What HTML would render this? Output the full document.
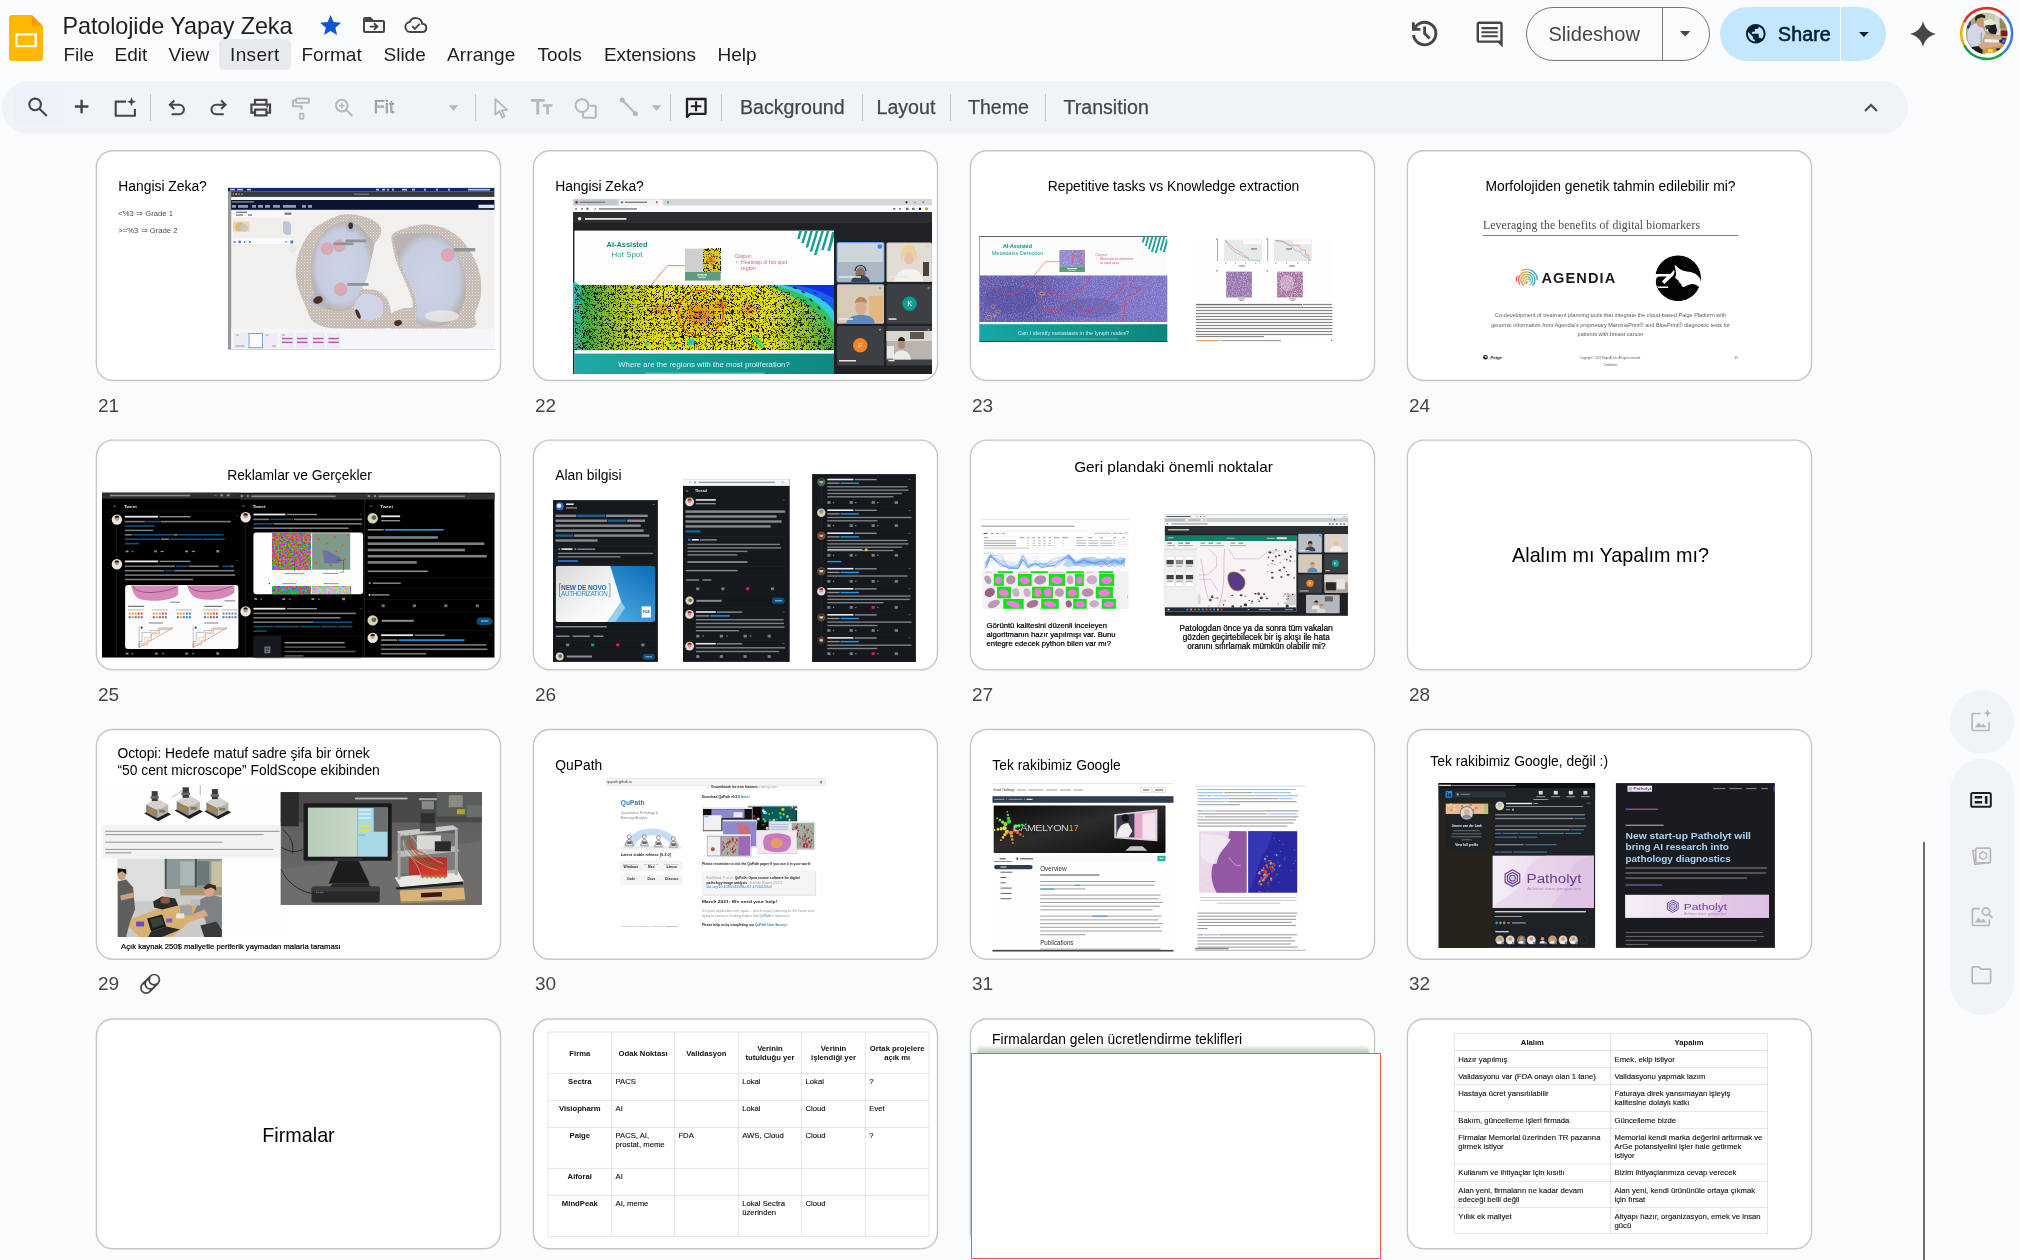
<!DOCTYPE html>
<html lang="en">
<head>
<meta charset="utf-8">
<title>Patolojide Yapay Zeka - Google Slides</title>
<style>
*{box-sizing:border-box;margin:0;padding:0}
html,body{width:2020px;height:1260px;overflow:hidden;}html{background:#f9fbfd}body{will-change:transform;font-family:"Liberation Sans",sans-serif;color:#1f1f1f}
.abs{position:absolute}
svg{display:block;overflow:visible}
/* header */
#logo{left:9px;top:14.800px;width:34px;height:46px}
#title{left:62.5px;top:10.7px;font-size:23.4px;line-height:30px;color:#1f1f1f;white-space:nowrap;letter-spacing:-0.1px}
.menu{top:43px;font-size:19px;line-height:24px;color:#1f1f1f;white-space:nowrap}
#ins-bg{left:219px;top:39px;width:72px;height:31px;border-radius:5px;background:#e7eaee}
#toolbar{left:2px;top:80.7px;width:1906px;height:53.2px;border-radius:27px;background:#f0f4f9}
.tsep{top:94.400px;width:1.200px;height:26.600px;background:#c4c7c5}
.ttxt{top:94.500px;font-size:19.600px;line-height:24px;color:#444746;white-space:nowrap;-webkit-text-stroke:.25px #444746}
.ico{position:absolute}
/* right header */
#ss{left:1526px;top:7px;width:184px;height:54px;border:1.3px solid #747775;border-radius:27px}
#share{left:1720px;top:7px;width:166px;height:54px;border-radius:27px;background:#c2e7ff}
/* cards */
.card{position:absolute;width:405px;height:232px}
.clip{position:absolute;left:0;top:0;width:405px;height:231px;background:#fff;border-radius:17px;overflow:hidden}
.num{position:absolute;font-size:19px;line-height:22px;color:#444746}
.t{position:absolute;white-space:nowrap;color:#000;font-size:13.85px;line-height:16px}
.tc{position:absolute;left:0;width:407px;text-align:center;white-space:nowrap;color:#000;font-size:13.85px;line-height:16px}
.th{text-align:center;font-weight:700;font-size:7.700px;line-height:9px;white-space:normal;color:#111}
.td{font-size:7.700px;line-height:9px;white-space:nowrap;color:#111;-webkit-text-stroke:.12px #111}
.side{position:absolute;left:1950px;width:64px;border-radius:32px;background:#f0f4f9}
</style>
</head>
<body>
<!-- HEADER -->
<div id="logo" class="abs"><svg width="34" height="46" viewBox="0 0 34 46"><path d="M3 0h19.800l11.200 11.200v31.800a3 3 0 0 1-3 3H3a3 3 0 0 1-3-3V3a3 3 0 0 1 3-3z" fill="#ffb903"/><path d="M22.800 0l11.200 11.200H22.800z" fill="#ff9a00"/><rect x="7.400" y="19.400" width="19.400" height="11.700" fill="none" stroke="#fff" stroke-width="2.200"/></svg></div>
<div id="title" class="abs">Patolojide Yapay Zeka</div>
<div id="ins-bg" class="abs"></div>
<div class="abs menu" style="left:63.5px">File</div>
<div class="abs menu" style="left:114.5px">Edit</div>
<div class="abs menu" style="left:168.5px">View</div>
<div class="abs menu" style="left:230px;letter-spacing:.35px">Insert</div>
<div class="abs menu" style="left:301.5px">Format</div>
<div class="abs menu" style="left:383.5px">Slide</div>
<div class="abs menu" style="left:447px;letter-spacing:.1px">Arrange</div>
<div class="abs menu" style="left:537.5px">Tools</div>
<div class="abs menu" style="left:604px;letter-spacing:-.1px">Extensions</div>
<div class="abs menu" style="left:717.5px">Help</div>

<svg class="ico" style="left:318.2px;top:12.5px" width="25.2" height="25.2" viewBox="0 0 24 24"><path d="M12 17.27L18.18 21l-1.64-7.03L22 9.24l-7.19-.61L12 2 9.19 8.63 2 9.24l5.46 4.73L5.82 21z" fill="#0b57d0"/></svg>
<svg class="ico" style="left:363px;top:17px" width="22" height="16" viewBox="0 0 22 16"><path d="M0 2a2 2 0 0 1 2-2h5.6l3 3H20a2 2 0 0 1 2 2v9a2 2 0 0 1-2 2H2a2 2 0 0 1-2-2zM2 5v9h18V5z" fill="#444746" fill-rule="evenodd"/><path d="M6.8 9.6h7M11 6.3l3.4 3.3-3.4 3.3" fill="none" stroke="#444746" stroke-width="1.9"/></svg>
<svg class="ico" style="left:404px;top:17px" width="24" height="16" viewBox="0 0 24 16"><path d="M6.2 15a5 5 0 0 1-.5-9.95 6.6 6.6 0 0 1 12.6 1.7 4.15 4.15 0 0 1 .4 8.25z" fill="none" stroke="#444746" stroke-width="2"/><path d="M8.2 9.2l2.6 2.6 4.9-5" fill="none" stroke="#444746" stroke-width="1.9"/></svg>
<div id="toolbar" class="abs"></div>
<div id="srch-bg" class="abs" style="left:13.700px;top:87.900px;width:51.200px;height:38.100px;border-radius:5px;background:#edf1fa"></div>

<svg class="ico" style="left:0;top:78px" width="720" height="60" viewBox="0 78 720 60">
<g fill="none" stroke="#444746" stroke-width="2.1">
<circle cx="35.1" cy="104.4" r="5.8"/><path d="M39.4 108.7l7.4 7.2"/>
<path d="M74.8 106.5h13.6M81.6 99.7v13.6" stroke-width="2.4"/>
<path d="M126 101.6h-10.3v14.2h19.2v-6.8" stroke-linejoin="round"/>
<path d="M170 104.8h9.2a4.6 4.6 0 0 1 0 9.4h-7.6" /><path d="M174.3 100.5l-4.4 4.3 4.4 4.3"/>
<path d="M225.4 104.8h-9.2a4.6 4.6 0 0 0 0 9.4h7.6" /><path d="M221.1 100.5l4.4 4.3-4.4 4.3"/>
<path d="M255 104.5v-4.6h11.4v4.6M255 112.6h-3.6v-8h18.6v8h-3.6" stroke-width="2.2"/><rect x="255" y="109.6" width="11.4" height="5.8" stroke-width="2.2"/>
</g>
<path d="M131.5 97.2l1.3 3.2 3.2 1.3-3.2 1.3-1.3 3.2-1.3-3.2-3.2-1.3 3.2-1.3z" fill="#444746"/>
<circle cx="267.2" cy="106.7" r="0.9" fill="#444746"/>
<g fill="none" stroke="#b5b8b7" stroke-width="2">
<rect x="296" y="98.4" width="13" height="4.4" rx="0.8"/><path d="M296 100.6h-3v5.6h8.6v3.4"/><rect x="299.9" y="113.6" width="3.6" height="5.2" rx="0.5" stroke-width="1.7"/>
<circle cx="341.8" cy="105.6" r="5.8"/><path d="M346.1 109.9l6.2 6.1"/><path d="M339 105.6h5.6M341.8 102.8v5.6" stroke-width="1.7"/>
<path d="M495.3 99.2v15.6l4.2-3.6 2.8 6.4 2.4-1.1-2.8-6.2 5.4-.5z" stroke-linejoin="round" stroke-width="1.8"/>
<circle cx="582" cy="105.6" r="6.4"/><path d="M589.5 105.8h5a1.3 1.3 0 0 1 1.3 1.3v9.4a1.3 1.3 0 0 1-1.3 1.3h-10.2a1.3 1.3 0 0 1-1.3-1.3v-3.6"/>
<path d="M622.4 100.2l13 13.4" stroke-width="2.2"/>
</g>
<g fill="#b5b8b7">
<path d="M448.6 105.2h9.6l-4.8 5.8z"/><path d="M651.8 105.2h9.6l-4.800 5.8z"/>
<circle cx="622.2" cy="99.9" r="2.5"/><circle cx="635.4" cy="113.7" r="2.5"/>
<path d="M531 99h13.600v2.700h-5.300v12.800h-3v-12.800h-5.300zM542.700 104.300h9.800v2.500h-3.600v7.700h-2.700v-7.700h-3.500z"/>
</g>
<g fill="none" stroke="#1f1f1f" stroke-width="2.3" stroke-linejoin="round"><path d="M687 99h18.500v14.800h-15.300l-3.200 3.200z"/><path d="M690.800 106.300h10.600M696.100 101.300v10" stroke-width="2.1"/></g>
</svg>
<div class="abs tsep" style="left:150px"></div>
<div class="abs tsep" style="left:475px"></div>
<div class="abs tsep" style="left:670px"></div>
<div class="abs tsep" style="left:721px"></div>
<div class="abs tsep" style="left:862px"></div>
<div class="abs tsep" style="left:950px"></div>
<div class="abs tsep" style="left:1045px"></div>
<div class="abs ttxt" style="left:373.5px;color:#b5b8b7;font-size:18.6px">Fit</div>
<div class="abs ttxt" style="left:740px">Background</div>
<div class="abs ttxt" style="left:876.5px">Layout</div>
<div class="abs ttxt" style="left:968px">Theme</div>
<div class="abs ttxt" style="left:1063.5px">Transition</div>
<svg class="ico" style="left:1861px;top:98px" width="20" height="20" viewBox="0 0 20 20"><path d="M4 13l6-6 6 6" fill="none" stroke="#444746" stroke-width="2.1"/></svg>


<svg class="ico" style="left:1405px;top:14px" width="110" height="40" viewBox="1405 14 110 40">
<g transform="translate(1407.700 16.600) scale(1.411)"><path d="M12 21q-3.450 0-6.010-2.290T3.050 13H5.100q.35 2.600 2.310 4.300Q9.380 19 12 19q2.930 0 4.960-2.040Q19 14.930 19 12t-2.040-4.960Q14.930 5 12 5q-1.720 0-3.230.8T6.250 8H9v2H3V4h2v2.350q1.270-1.600 3.110-2.480Q9.950 3 12 3q1.880 0 3.510.71 1.640.71 2.850 1.930 1.220 1.210 1.930 2.850Q21 10.130 21 12t-.71 3.510q-.71 1.640-1.930 2.850-1.210 1.220-2.850 1.930Q13.880 21 12 21Zm2.800-4.800L11 12.400V7h2v4.600l3.200 3.200Z" fill="#444746"/></g>
<path d="M1479.200 21.600h20.900a2.600 2.600 0 0 1 2.600 2.600v23.200l-4.700-4.600h-18.800a2.600 2.600 0 0 1-2.600-2.600v-16a2.600 2.600 0 0 1 2.600-2.600zM1479 24v16.400h21.300v-16.400z" fill="#444746" fill-rule="evenodd"/>
<path d="M1481.500 28.100h16.300M1481.500 32.200h16.300M1481.500 36.300h16.300" stroke="#444746" stroke-width="2.100"/>
</svg>
<div id="ss" class="abs"></div>
<div class="abs" style="left:1662px;top:8px;width:1.3px;height:52px;background:#747775"></div>
<div class="abs" style="left:1548.500px;top:22px;font-size:20px;line-height:24px;color:#444746;white-space:nowrap;letter-spacing:.02px">Slideshow</div>
<svg class="ico" style="left:1679.500px;top:30.700px" width="10.400" height="5.400" viewBox="0 0 10.400 5.400"><path d="M0 0h10.400l-5.200 5.400z" fill="#444746"/></svg>
<div id="share" class="abs"></div>
<div class="abs" style="left:1840px;top:7px;width:1.200px;height:54px;background:#f4faff"></div>
<svg class="ico" style="left:1745.500px;top:24.400px" width="19.600" height="19.600" viewBox="2 2 20 20"><path d="M12 2C6.480 2 2 6.480 2 12s4.480 10 10 10 10-4.480 10-10S17.520 2 12 2zm-1 17.930c-3.950-.49-7-3.850-7-7.930 0-.62.080-1.210.21-1.790L9 15v1c0 1.100.9 2 2 2v1.930zm6.900-2.540c-.26-.81-1-1.390-1.900-1.390h-1v-3c0-.55-.45-1-1-1H8v-2h2c.55 0 1-.45 1-1V7h2c1.100 0 2-.9 2-2v-.41c2.930 1.190 5 4.060 5 7.410 0 2.080-.8 3.970-2.100 5.390z" fill="#001d35"/></svg>
<div class="abs" style="left:1778px;top:21.500px;font-size:19.600px;font-weight:400;-webkit-text-stroke:.55px #001d35;line-height:24px;color:#001d35;white-space:nowrap;letter-spacing:.1px">Share</div>
<svg class="ico" style="left:1859.200px;top:31.900px" width="9.800" height="5" viewBox="0 0 9.800 5"><path d="M0 0h9.800l-4.900 5z" fill="#001d35"/></svg>
<svg class="ico" style="left:1910px;top:20.700px" width="26" height="26.200" viewBox="0 0 26 26"><path d="M13 0C14.400 6.800 19.200 11.600 26 13 19.200 14.400 14.400 19.200 13 26 11.600 19.200 6.800 14.400 0 13 6.800 11.600 11.600 6.800 13 0z" fill="#444746"/></svg>
<svg class="ico" style="left:1959px;top:6px" width="56" height="56" viewBox="0 0 56 56">
<defs><clipPath id="avc"><circle cx="27.700" cy="27.500" r="20.900"/></clipPath><filter id="avb"><feGaussianBlur stdDeviation=".35"/></filter></defs>
<g fill="none" stroke-width="2.500">
<path d="M4.930 16.250A25.400 25.400 0 0 1 44.760 8.680" stroke="#ea2a1a"/>
<path d="M44.760 8.680A25.400 25.400 0 0 1 44.760 46.320" stroke="#3a7af0"/>
<path d="M44.760 46.320A25.400 25.400 0 0 1 5.070 39.030" stroke="#18a040"/>
<path d="M5.070 39.030A25.400 25.400 0 0 1 4.930 16.250" stroke="#f8ac08"/>
</g>
<circle cx="27.700" cy="27.500" r="23.500" fill="#fff"/>
<g clip-path="url(#avc)"><g filter="url(#avb)"><rect x="6.16" y="6.16" width="43.68" height="43.68" fill="#a9a67e"/><rect x="24.44" y="6.67" width="25.39" height="13.20" fill="#c9c8a4"/><rect x="35.61" y="7.68" width="6.09" height="21.33" fill="#d8d8cc"/><rect x="40.69" y="9.20" width="8.63" height="13.20" fill="#8a8a5c"/><path d="M24.44 15.30L31.55 12.76L38.15 17.33L37.65 24.44L32.57 26.47L26.47 24.44z" fill="#e8e8e0"/><path d="M29.52 19.87L36.63 18.35L38.15 24.44L36.63 28.50L31.55 27.49L29.01 24.44z" fill="#1c1c20"/><path d="M25.96 19.87L30.54 18.85L31.55 22.41L26.98 23.43z" fill="#3a4030"/><rect x="41.71" y="24.44" width="7.62" height="5.59" fill="#8a1418"/><rect x="6.16" y="15.30" width="5.59" height="7.11" fill="#2a2c40"/><rect x="8.70" y="17.33" width="3.05" height="2.54" fill="#3a58a8"/><path d="M23.43 40.69L46.79 37.65L49.83 49.83L23.43 49.83z" fill="#c8993c"/><rect x="25.46" y="33.07" width="14.22" height="5.59" fill="#f0f0f6"/><path d="M39.68 31.04L47.30 32.57L46.28 38.15L40.69 36.63z" fill="#2c2c48"/><rect x="43.23" y="33.58" width="4.06" height="3.56" fill="#5868c0"/><ellipse cx="39.17" cy="43.23" rx="2.29" ry="1.27" fill="#2e2e3c"/><rect x="29.01" y="43.23" width="4.82" height="3.15" fill="#f6ee1c"/><rect x="25.96" y="46.79" width="13.20" height="3.05" fill="#e8e8e8"/><path d="M12.76 40.18L23.43 39.17L23.43 49.83L11.24 49.83z" fill="#1f1c1c"/><path d="M8.19 26.47L11.24 19.87L17.33 17.33L24.44 22.41L26.98 28.50L24.44 31.55L22.41 39.68L12.76 40.95L8.70 34.60z" fill="#d3d5e8"/><path d="M24.44 28.50L41.71 30.54L43.23 33.07L40.69 34.09L26.47 32.57z" fill="#d9aa8a"/><path d="M18.85 39.17L23.43 36.12L41.71 36.63L42.72 39.17L39.68 40.18L22.41 43.23z" fill="#d6a685"/><ellipse cx="21.14" cy="16.31" rx="3.56" ry="4.82" fill="#c9977a" transform="rotate(-12 21 16)"/><path d="M15.81 12.76L17.33 8.70L22.41 7.93L26.47 9.71L25.96 12.25L22.41 11.24L18.35 12.76L16.82 16.31z" fill="#2a231f"/><rect x="21.65" y="26.47" width="1.12" height="10.16" fill="#7a8078" opacity=".7"/></g></g>
</svg>

<!-- CARDS -->
<div class="card" id="c21" style="left:96px;top:150px"><div class="clip" style="clip-path:inset(0.0px 0 0.0px 0 round 16.5px)"><!--S21--><svg class="abs" style="left:0;top:0" width="405" height="231" viewBox="0 0 405 231">
<defs>
<radialGradient id="tis" cx="50%" cy="50%" r="50%"><stop offset="0" stop-color="#ccd3e6"/><stop offset=".8" stop-color="#c6cde0"/><stop offset="1" stop-color="#b9b3b4"/></radialGradient>
<pattern id="crypt" width="3" height="3" patternUnits="userSpaceOnUse"><rect width="3" height="3" fill="#d3cac4"/><circle cx="1.5" cy="1.5" r=".8" fill="#e9e3de"/><circle cx="1.5" cy="1.5" r="1.1" fill="none" stroke="#9a8272" stroke-width=".32"/></pattern>
<clipPath id="c21"><rect x="132" y="59.700" width="266.400" height="119"/></clipPath>
</defs>
<rect x="132" y="37.900" width="266.400" height="161.800" fill="#f1f0ee"/>
<rect x="132" y="37.900" width="266.400" height="3.600" fill="#0b2a6b"/>
<rect x="132" y="41.400" width="266.400" height="5.600" fill="#38383b"/>
<rect x="132" y="46.900" width="266.400" height="3.200" fill="#f4f4f4"/>
<rect x="132" y="50" width="266.400" height="9.800" fill="#0a1530"/>
<g fill="#8d97b8"><rect x="136" y="51.300" width="22" height="1.200"/><rect x="136" y="55" width="4" height="2.800"/><rect x="142" y="55" width="10" height="2.800"/><rect x="156" y="55" width="4" height="2.800"/><rect x="162" y="55" width="5" height="2.800"/><rect x="169" y="55" width="5" height="2.800"/><rect x="177" y="55" width="7" height="2.800"/><rect x="187" y="55" width="13" height="2.800"/><rect x="206" y="55" width="4" height="2.800"/><rect x="212" y="55" width="4" height="2.800"/></g>
<rect x="382.500" y="54.700" width="15.500" height="3.400" fill="#dfe3ee"/>
<g fill="#b9c3de"><rect x="280" y="38.800" width="3" height="1.700"/><rect x="286" y="38.800" width="3" height="1.700"/><rect x="291" y="38.800" width="2" height="1.700"/><rect x="296" y="38.800" width="2" height="1.700"/><rect x="306" y="38.800" width="5" height="1.700"/><rect x="316" y="38.800" width="3" height="1.700"/><rect x="328" y="38.800" width="2" height="1.700"/><rect x="340" y="38.800" width="2" height="1.700"/><rect x="352" y="38.800" width="2" height="1.700"/><rect x="372" y="38.800" width="22" height="1.700"/><rect x="134" y="38.800" width="5" height="1.600"/><rect x="141" y="38.800" width="6" height="1.600"/><rect x="151" y="38.800" width="4" height="1.600"/></g>
<circle cx="137.300" cy="44.200" r=".9" fill="#ee5b54"/><circle cx="140.200" cy="44.200" r=".9" fill="#f6be2f"/><circle cx="143" cy="44.200" r=".9" fill="#5ec343"/><circle cx="145.900" cy="44.200" r=".9" fill="#35a7f0"/>
<rect x="258" y="43.600" width="15" height="1.300" fill="#77777b"/>
<rect x="132" y="41.400" width="3.200" height="158.300" fill="#98989a"/>
<g clip-path="url(#c21)">
<path d="M243.6 65.2C251.9 62.8 260.1 64.7 266.6 66.2C273.2 67.7 279.7 71.2 282.7 74.2C285.7 77.2 285.4 80.9 284.7 84.2C284.0 87.5 280.3 89.5 278.7 94.2C277.0 98.9 276.0 106.6 274.7 112.3C273.3 117.9 272.0 124.0 270.6 128.3C269.3 132.7 265.0 136.3 266.6 138.3C268.3 140.3 276.7 138.7 280.7 140.3C284.7 142.0 288.4 145.0 290.7 148.4C293.0 151.7 294.2 155.5 294.7 160.4C295.2 165.2 302.7 174.4 293.7 177.4C284.7 180.4 253.1 179.3 240.6 178.4C228.0 177.6 223.5 175.8 218.5 172.4C213.5 169.1 213.5 165.4 210.5 158.4C207.5 151.4 201.8 139.3 200.5 130.3C199.1 121.3 199.8 112.6 202.5 104.3C205.2 95.9 209.7 86.7 216.5 80.2C223.4 73.7 235.2 67.5 243.6 65.2z" fill="url(#crypt)"/>
<path d="M243.6 72.2C249.3 70.6 256.1 72.6 260.6 74.6C265.1 76.6 267.8 80.9 270.6 84.2C273.5 87.5 277.1 89.5 277.7 94.2C278.3 98.9 275.5 106.6 274.3 112.3C273.0 117.9 271.9 123.6 270.2 128.3C268.6 133.0 267.2 135.3 264.6 140.3C262.0 145.3 259.3 155.0 254.6 158.4C249.9 161.7 241.9 161.1 236.6 160.4C231.2 159.7 225.7 157.7 222.5 154.4C219.4 151.0 218.9 146.0 217.5 140.3C216.2 134.7 214.5 127.0 214.5 120.3C214.5 113.6 215.5 106.3 217.5 100.2C219.5 94.2 222.2 88.9 226.5 84.2C230.9 79.5 237.9 73.8 243.6 72.2z" fill="url(#tis)"/>
<path d="M266.6 144.3C270.3 143.0 277.3 144.7 280.7 146.4C284.0 148.0 286.0 151.0 286.7 154.4C287.4 157.7 287.4 163.7 284.7 166.4C282.0 169.1 274.7 170.7 270.6 170.4C266.6 170.1 262.6 167.1 260.6 164.4C258.6 161.7 257.6 157.7 258.6 154.4C259.6 151.0 263.0 145.7 266.6 144.3z" fill="#cfd5e6"/>
<path d="M296.7 84.2C299.4 81.0 307.1 78.8 312.8 77.2C318.4 75.6 324.1 74.1 330.8 74.6C337.5 75.1 346.2 76.6 352.8 80.2C359.5 83.8 365.9 89.5 370.9 96.2C375.9 102.9 380.6 112.3 382.9 120.3C385.3 128.3 385.6 137.0 384.9 144.3C384.3 151.7 380.9 158.7 378.9 164.4C376.9 170.1 387.1 176.1 372.9 178.4C358.7 180.8 306.7 180.8 293.7 178.4C280.7 176.1 292.5 167.7 294.7 164.4C296.9 161.1 303.1 159.7 306.7 158.4C310.4 157.0 315.8 159.4 316.8 156.4C317.8 153.4 315.4 147.7 312.8 140.3C310.1 133.0 303.4 119.6 300.7 112.3C298.0 104.9 297.4 100.9 296.7 96.2C296.0 91.6 294.0 87.4 296.7 84.2z" fill="url(#crypt)"/>
<path d="M298.7 86.2C301.7 84.0 310.4 83.7 316.8 83.2C323.1 82.7 330.8 81.9 336.8 83.2C342.8 84.5 348.3 87.0 352.8 91.2C357.4 95.4 361.0 101.7 363.9 108.3C366.7 114.8 369.2 123.0 369.9 130.3C370.6 137.7 370.1 145.7 367.9 152.4C365.7 159.0 362.0 166.4 356.9 170.4C351.7 174.4 342.8 176.1 336.8 176.4C330.8 176.8 323.4 175.8 320.8 172.4C318.1 169.1 321.6 162.1 320.8 156.4C319.9 150.7 318.6 145.7 315.8 138.3C312.9 131.0 306.5 119.3 303.7 112.3C301.0 105.3 300.0 100.6 299.1 96.2C298.3 91.9 295.8 88.4 298.7 86.2z" fill="url(#tis)"/>
<ellipse cx="346" cy="166" rx="17" ry="6" fill="#e9e8e3" opacity=".85"/>
<g fill="#4a2f22"><ellipse cx="254.700" cy="75.700" rx="2.200" ry="3.300"/><ellipse cx="222" cy="150" rx="5" ry="3.800" transform="rotate(-20 222 150)"/><ellipse cx="302" cy="173" rx="4" ry="2.800" transform="rotate(-15 302 173)"/><ellipse cx="262" cy="164" rx="1.800" ry="5" transform="rotate(-25 262 164)"/></g>
<g fill="#a9b4d0" opacity=".6"><ellipse cx="254.700" cy="76" rx="5" ry="6.500"/><ellipse cx="222" cy="150" rx="8" ry="6.500"/></g>
<g fill="#4a2f22"><ellipse cx="254.700" cy="75.700" rx="2.200" ry="3.300"/><ellipse cx="222" cy="150" rx="4.600" ry="3.400" transform="rotate(-20 222 150)"/></g>
<g fill="#e39aa3" fill-opacity=".72" stroke="#d78891" stroke-width=".3"><circle cx="231.100" cy="98.600" r="6"/><circle cx="243.300" cy="95.700" r="6"/><circle cx="351.600" cy="105" r="6.500"/><circle cx="244.700" cy="139.300" r="6.300"/></g>
<g fill="#8f9297"><rect x="249.500" y="89.500" width="20.500" height="2.800"/><rect x="237.500" y="92.500" width="20" height="2.600"/><rect x="357.700" y="98" width="21.500" height="3.400"/><rect x="251.500" y="133" width="21" height="2.800"/></g>
</g>
<rect x="135.800" y="60.700" width="62" height="33.700" fill="#f8f8f8" stroke="#e4e4e6" stroke-width=".4"/>
<rect x="137" y="67.500" width="59.600" height="20.500" fill="#f0efec"/>
<rect x="136.200" y="89" width="61.200" height="5" fill="#fbfbfd"/>
<rect x="137" y="71.500" width="16.500" height="10" fill="#ebd7a9"/><ellipse cx="144" cy="77" rx="5" ry="4.600" fill="#d9b26a" opacity=".8"/><ellipse cx="148" cy="78" rx="4" ry="4" fill="#c9c6cf" opacity=".8"/>
<path d="M187 72c2-2 6-1 8 2v10c-2 2-6 1-8-2z" fill="#bfc4d6"/>
<g fill="#7d8087"><rect x="140" y="61.600" width="11" height="1.400"/><rect x="140" y="64.300" width="7" height="1.400"/><rect x="152" y="64.300" width="4" height="1.400"/><rect x="188.500" y="62.500" width="7" height="2.400"/></g>
<g fill="#3f76d8"><circle cx="138.800" cy="91.900" r="1"/><circle cx="143.700" cy="91.900" r="1.300"/><circle cx="148.800" cy="91.900" r=".9"/><circle cx="153.900" cy="91.900" r="1"/><rect x="194.500" y="90.500" width="2.600" height="3" /><rect x="189" y="91" width="2.400" height="1.600" fill="#9db9ee"/></g>
<circle cx="196.500" cy="98.500" r="4.300" fill="#e9e8e6"/>
<rect x="135.200" y="178.600" width="263.200" height="21.100" fill="#f5f6fa"/>
<rect x="132" y="199.200" width="266.400" height=".8" fill="#c9ccd6"/>
<g fill="#eeeef2" stroke="#e2e2e8" stroke-width=".3"><rect x="138.400" y="183.600" width="12.600" height="14.200"/><rect x="168.400" y="183.600" width="12.600" height="14.200"/><rect x="185" y="183.600" width="12.600" height="14.200"/><rect x="200" y="183.600" width="12.600" height="14.200" fill="#f1e8f1"/><rect x="216" y="183.600" width="12.600" height="14.200"/><rect x="231.400" y="183.600" width="12.600" height="14.200"/></g>
<rect x="153" y="183.600" width="13.400" height="14.200" fill="#fbfbff" stroke="#3f76d8" stroke-width=".7"/>
<g fill="#b65bb6"><rect x="186" y="187.800" width="10.500" height="1.500"/><rect x="186" y="191.600" width="10.500" height="1.500"/><rect x="201" y="187.800" width="10.500" height="1.500"/><rect x="201" y="191.600" width="10.500" height="1.500"/><rect x="217" y="187.800" width="10.500" height="1.500"/><rect x="217" y="191.600" width="10.500" height="1.500"/><rect x="232.400" y="187.800" width="10.500" height="1.500"/><rect x="232.400" y="191.600" width="10.500" height="1.500"/></g>
<g fill="#9ea2ad"><rect x="139.500" y="195.500" width="9" height="1.100"/><rect x="176" y="195.500" width="4" height="1.100"/><rect x="140" y="184.600" width="3" height=".9"/><rect x="169.500" y="184.600" width="3" height=".9"/><rect x="186" y="184.600" width="3" height=".9"/></g>
</svg>
<div class="t" style="left:22.300px;top:27.800px">Hangisi Zeka?</div>
<div class="t" style="left:22.300px;top:59px;font-size:7.700px;line-height:10px;color:#4a4a4a">&lt;%3 ⇒ Grade 1</div>
<div class="t" style="left:22.300px;top:75.900px;font-size:7.700px;line-height:10px;color:#4a4a4a">&gt;=%3 ⇒ Grade 2</div>
<!--/S21--></div><svg class="abs" style="left:-2px;top:-2px" width="409" height="236" viewBox="-2 -2 409 236"><rect x=".4" y="0.7" width="404.100" height="229.800" rx="16.500" fill="none" stroke="#c4c7c5" stroke-width="1.400"/></svg></div>
<div class="num" style="left:98px;top:395px">21</div>
<div class="card" id="c22" style="left:533px;top:150px"><div class="clip" style="clip-path:inset(0.0px 0 0.0px 0 round 16.5px)"><!--S22--><svg class="abs" style="left:0;top:0" width="405" height="231" viewBox="0 0 405 231">
<defs>
<linearGradient id="hm" x1="0" x2="1" y1="0" y2="0"><stop offset="0" stop-color="#2fb8a0"/><stop offset=".05" stop-color="#3fae3c"/><stop offset=".16" stop-color="#a4c425"/><stop offset=".3" stop-color="#e4dc14"/><stop offset=".75" stop-color="#e6de14"/><stop offset=".88" stop-color="#9cc820"/><stop offset="1" stop-color="#3fae3c"/></linearGradient>
<radialGradient id="hot" cx="50%" cy="50%" r="50%"><stop offset="0" stop-color="#d9541a" stop-opacity=".85"/><stop offset=".6" stop-color="#e8a018" stop-opacity=".6"/><stop offset="1" stop-color="#e8d018" stop-opacity="0"/></radialGradient>
<pattern id="cells" width="3.200" height="3.200" patternUnits="userSpaceOnUse"><circle cx="1.600" cy="1.600" r="1.100" fill="none" stroke="#161a08" stroke-width=".55"/></pattern>
<filter id="spk" x="0" y="0" width="100%" height="100%" color-interpolation-filters="sRGB"><feTurbulence type="turbulence" baseFrequency=".42" numOctaves="2" seed="7" result="n"/><feColorMatrix in="n" type="matrix" values="0 0 0 0 .08  0 0 0 0 .09  0 0 0 0 .03  -9 0 0 0 1.800"/></filter>
<linearGradient id="teal" x1="0" x2="1"><stop offset="0" stop-color="#1eaaa6"/><stop offset="1" stop-color="#0c8a80"/></linearGradient>
<clipPath id="c22"><rect x="41.400" y="135" width="259.600" height="65.200"/></clipPath>
<clipPath id="c22m"><path d="M41.400 135h200l32 16 16 18 12 24v7h-259.600z"/></clipPath><clipPath id="c22b"><rect x="40" y="48.700" width="359" height="175.300"/></clipPath>
</defs>
<g clip-path="url(#c22b)">
<rect x="40" y="48.700" width="359" height="7" fill="#d3d6dc"/>
<rect x="41" y="49.400" width="43" height="6.300" rx="1" fill="#c2c6ce"/><rect x="86" y="49.400" width="44" height="6.300" rx="1" fill="#f1f3f4"/>
<circle cx="43.600" cy="52.300" r="1.300" fill="#8a1e5a"/><circle cx="89" cy="52.300" r="1.200" fill="#35a853"/><circle cx="123.800" cy="52.300" r="1" fill="#e5322d"/>
<g fill="#7d8087"><rect x="47" y="51.600" width="25" height="1.400"/><rect x="92" y="51.600" width="22" height="1.400"/><rect x="134" y="51.300" width="2" height="2"/><circle cx="373.500" cy="52.300" r="1.100" fill="#222"/><rect x="381" y="52" width="2" height=".8"/><rect x="389.500" y="51.300" width="1.600" height="1.600"/></g>
<rect x="40" y="55.700" width="359" height="6.400" fill="#fbfbfc"/>
<g fill="#6e7278"><rect x="42" y="58.200" width="2" height="1.300"/><rect x="48" y="58.200" width="2" height="1.300"/><circle cx="54.500" cy="58.800" r="1.200"/><rect x="61.500" y="58.200" width="1.300" height="1.500"/><rect x="66" y="58.300" width="38" height="1.300"/><rect x="360" y="58.200" width="2.500" height="1.400"/><rect x="366" y="58.200" width="2" height="1.400"/><rect x="373" y="57.800" width="2.600" height="2.200"/><rect x="379" y="57.800" width="2.600" height="2.200"/><rect x="386" y="57.800" width="2" height="2.200" fill="#111"/><circle cx="393.500" cy="58.800" r="1.600" fill="#c89a3a"/></g>
<rect x="40" y="62.100" width="359" height="162" fill="#202124"/>
<rect x="40" y="62.100" width="359" height="11" fill="#2b2d30"/>
<circle cx="46.600" cy="68.800" r="1.800" fill="#e8e8e8"/><rect x="52" y="68" width="41.500" height="1.800" fill="#e4e4e4"/>
<rect x="41.400" y="80.600" width="259.600" height="143.400" fill="#fdfdfd"/>
<g fill="#1aa094"><path d="M266.500 80.600h2.600l-2.400 8.500h-2.600zM272 80.600h2.600l-3.800 12.500h-2.600zM277.500 80.600h2.600l-5 17h-2.600zM283 80.600h2.600l-6.400 21h-2.600zM288.500 80.600h2.600l-7.600 24.500h-2.600zM294 80.600h2.600l-5.800 19.500h-2.600zM299 82h2v5.600l-4 13.500h-2.600z"/></g>
<text x="94" y="97.400" font-family="Liberation Sans" font-weight="700" font-size="7.300" fill="#10867e" text-anchor="middle" textLength="40.9" lengthAdjust="spacingAndGlyphs">AI-Assisted</text>
<text x="94" y="106.800" font-family="Liberation Sans" font-size="7.600" fill="#25a096" text-anchor="middle" textLength="30.9" lengthAdjust="spacingAndGlyphs">Hot Spot</text>
<rect x="152" y="98.600" width="18" height="23.500" fill="#cfcfcf"/><rect x="170" y="98.600" width="17.600" height="23.500" fill="#d8c81e"/><rect x="170" y="98.600" width="17.600" height="23.500" filter="url(#spk)"/><circle cx="178" cy="110" r="6" fill="url(#hot)"/>
<rect x="152" y="122" width="35.600" height="8.600" fill="#5f9b7c"/><rect x="164" y="124.300" width="10" height="1.200" fill="#dfeee6"/><rect x="165" y="126.700" width="8" height="1" fill="#dfeee6"/>
<path d="M152 115.600h-17.500l-19.500 23" fill="none" stroke="#f0644c" stroke-width=".8"/>
<text x="202" y="107.600" font-family="Liberation Sans" font-size="4.800" fill="#d4608a" textLength="16.8" lengthAdjust="spacingAndGlyphs">Output:</text>
<text x="208" y="113.600" font-family="Liberation Sans" font-size="4.800" fill="#d4608a" textLength="46.1" lengthAdjust="spacingAndGlyphs">Heatmap of hot spot</text>
<text x="208" y="119.600" font-family="Liberation Sans" font-size="4.800" fill="#d4608a" textLength="14.8" lengthAdjust="spacingAndGlyphs">region</text>
<circle cx="203.700" cy="111.900" r=".6" fill="#d4608a"/>
<g clip-path="url(#c22)">
<rect x="41.400" y="135" width="259.600" height="65.200" fill="url(#hm)"/>
<ellipse cx="42" cy="146" rx="6" ry="14" fill="#2cc4c0" opacity=".8"/>
<path d="M232 135h69v50c-6-12-14-20-24-28-14-10-30-16-45-22z" fill="#35c060"/>
<path d="M240 135h61v38c-6-10-12-16-20-22-12-8-26-12-41-16z" fill="#2ed0e0"/>
<path d="M250 135h51v26c-8-12-26-20-51-26z" fill="#1a5cf0"/>
<path d="M262 135h39v14c-8-6-22-11-39-14z" fill="#1030e0"/>
<ellipse cx="167" cy="165" rx="26" ry="20" fill="url(#hot)"/><ellipse cx="215" cy="160" rx="14" ry="10" fill="url(#hot)" opacity=".7"/><ellipse cx="128" cy="160" rx="16" ry="10" fill="url(#hot)" opacity=".6"/><ellipse cx="188" cy="155" rx="10" ry="8" fill="url(#hot)"/>
<g clip-path="url(#c22m)"><rect x="41.400" y="135" width="259.600" height="65.200" filter="url(#spk)"/></g>
<g fill="#2ee06a"><circle cx="158" cy="192" r="3.600"/><circle cx="114" cy="194" r="2"/><circle cx="139" cy="195" r="1.700"/><circle cx="286" cy="171" r="1.800"/><path d="M220 186c6 2 10 6 12 12h-5c-2-4-5-8-9-10z" opacity=".8"/></g>
<circle cx="158" cy="192" r="2.200" fill="#29b8f0"/>
<g fill="#10120a"><ellipse cx="270" cy="142" rx="2" ry=".8" transform="rotate(30 270 142)"/><ellipse cx="278" cy="150" rx="2" ry=".8" transform="rotate(40 278 150)"/><ellipse cx="286" cy="158" rx="2" ry=".8" transform="rotate(50 286 158)"/><ellipse cx="292" cy="168" rx="2" ry=".8" transform="rotate(60 292 168)"/><ellipse cx="262" cy="138" rx="2" ry=".8" transform="rotate(20 262 138)"/><ellipse cx="290" cy="150" rx="1.600" ry=".7" transform="rotate(40 290 150)"/><ellipse cx="296" cy="180" rx="2" ry=".8" transform="rotate(70 296 180)"/><ellipse cx="282" cy="143" rx="1.600" ry=".7" transform="rotate(30 282 143)"/></g>
<circle cx="167.500" cy="163" r="22.800" fill="none" stroke="#f01a10" stroke-width=".9"/>
</g>
<rect x="41.400" y="203.600" width="259.600" height="20.600" fill="url(#teal)"/>
<text x="171" y="217.400" font-family="Liberation Sans" font-size="7.350" fill="#d8f2ef" text-anchor="middle" textLength="171.4" lengthAdjust="spacingAndGlyphs">Where are the regions with the most proliferation?</text>
<rect x="112" y="222.600" width="120" height="1.400" fill="#5cbcb6"/>
<g>
<rect x="304" y="92.500" width="47" height="39.500" rx="1.500" fill="#b9c3cc"/><rect x="353.500" y="92.500" width="45.500" height="39.500" rx="1.500" fill="#d8cfc6"/>
<rect x="304" y="134.300" width="47" height="39.500" rx="1.500" fill="#c9c2b4"/><rect x="353.500" y="134.300" width="45.500" height="39.500" rx="1.500" fill="#3c4043"/>
<rect x="304" y="176" width="47" height="39.500" rx="1.500" fill="#3c4043"/><rect x="353.500" y="176" width="45.500" height="39.500" rx="1.500" fill="#3c4043"/>
<rect x="304" y="92.500" width="47" height="39.500" rx="1.500" fill="none" stroke="#6ea0f0" stroke-width=".9"/>
<rect x="305" y="93.500" width="45" height="20" fill="#cfd6da"/><rect x="305" y="112" width="45" height="19" fill="#a9b8c4"/>
<ellipse cx="327.500" cy="124" rx="5" ry="6.500" fill="#8c6e5c"/><path d="M318 132c1-5 5-7 9.500-7s8.500 2 9.500 7z" fill="#3a4456"/><path d="M322 121a5.500 5.500 0 0 1 11 0" fill="none" stroke="#222" stroke-width="1.200"/>
<circle cx="346.800" cy="96.500" r="2.300" fill="#3b82f6"/>
<rect x="354.500" y="93.500" width="43.500" height="37.500" fill="#e3dcd4"/><ellipse cx="376" cy="108" rx="5" ry="6.500" fill="#e6c3a8"/><path d="M369 112c-3-10 1-17 7-17s10 7 7 18c-1-8-3-11-7-11s-6 3-7 10z" fill="#e9d39a"/><path d="M362 131c1-9 6-12 14-12s13 3 14 12z" fill="#f4f1ee"/><rect x="390" y="112" width="6" height="14" fill="#4a4038"/>
<rect x="305" y="135.300" width="45" height="37.500" fill="#d6cbb8"/><rect x="336" y="146" width="14" height="26" fill="#e0b880"/><ellipse cx="328" cy="158" rx="5.500" ry="7" fill="#d9ac90"/><path d="M322 154c0-5 3-7 6-7s6 2 6 7c-2-3-10-3-12 0z" fill="#b98a50"/><path d="M313 174c1-7 7-9 15-9s13 2 14 9z" fill="#5f88c0"/>
<circle cx="376.600" cy="153.600" r="7.200" fill="#0f9d8c"/><text x="376.600" y="156.300" font-family="Liberation Sans" font-size="7.400" fill="#fff" text-anchor="middle">K</text>
<circle cx="327.200" cy="195.300" r="7.200" fill="#f5821f"/><text x="327.200" y="198" font-family="Liberation Sans" font-size="7.400" fill="#fff" text-anchor="middle">F</text>
<rect x="353.500" y="181" width="45.500" height="28.500" fill="#b9b5ae"/><rect x="353.500" y="181" width="45.500" height="10" fill="#d9d6d0"/><rect x="377" y="182" width="14" height="7" fill="#5c564c"/><ellipse cx="368.500" cy="194.500" rx="3.500" ry="4.500" fill="#b08a70"/><path d="M365 191c0-3 2-4 3.500-4s3.500 1 3.500 4z" fill="#1c1a18"/><path d="M360 209.500c1-7 4-9 8.500-9s8.500 2 9.500 9z" fill="#eceae6"/><rect x="354" y="196" width="7" height="12" fill="#e9e9ea"/>
<g fill="#e8e8e8"><rect x="306" y="126.200" width="22" height="1.500"/><rect x="355.500" y="126.200" width="20" height="1.500"/><rect x="306" y="168.300" width="14" height="1.500"/><rect x="355.500" y="168.300" width="8" height="1.500"/><rect x="306" y="210" width="17" height="1.500"/><rect x="355.500" y="210" width="6" height="1.300"/></g>
<g fill="#9aa0a6"><circle cx="347" cy="138" r="1.200"/><circle cx="395.500" cy="138" r="1"/><circle cx="347" cy="179.700" r="1"/><circle cx="395.500" cy="179.700" r="1"/><circle cx="395.500" cy="96.300" r="1.300" fill="#d0d0d0"/></g>
</g>
</g>
</svg>
<div class="t" style="left:22.300px;top:27.800px">Hangisi Zeka?</div>
<!--/S22--></div><svg class="abs" style="left:-2px;top:-2px" width="409" height="236" viewBox="-2 -2 409 236"><rect x=".4" y="0.7" width="404.100" height="229.800" rx="16.500" fill="none" stroke="#c4c7c5" stroke-width="1.400"/></svg></div>
<div class="num" style="left:535px;top:395px">22</div>
<div class="card" id="c23" style="left:970px;top:150px"><div class="clip" style="clip-path:inset(0.0px 0 0.0px 0 round 16.5px)"><!--S23--><svg class="abs" style="left:0;top:0" width="405" height="231" viewBox="0 0 405 231">
<defs>
<filter id="pnoise" x="0" y="0" width="100%" height="100%" color-interpolation-filters="sRGB"><feTurbulence type="fractalNoise" baseFrequency=".9" numOctaves="2" seed="3" result="n"/><feColorMatrix in="n" type="matrix" values="0 0 0 0 .82  0 0 0 0 .8  0 0 0 0 .95  3 0 0 0 -1.300"/></filter>
<filter id="hnoise" x="0" y="0" width="100%" height="100%" color-interpolation-filters="sRGB"><feTurbulence type="fractalNoise" baseFrequency=".8" numOctaves="2" seed="5" result="n"/><feColorMatrix in="n" type="matrix" values="0 0 0 0 .93  0 0 0 0 .86  0 0 0 0 .93  4 0 0 0 -1.700"/></filter>
<linearGradient id="teal3" x1="0" x2="1"><stop offset="0" stop-color="#16a8a6"/><stop offset="1" stop-color="#0b857b"/></linearGradient>
<linearGradient id="pur" x1="0" x2="1"><stop offset="0" stop-color="#6159ae"/><stop offset=".3" stop-color="#5b55a8"/><stop offset=".55" stop-color="#756cc0"/><stop offset="1" stop-color="#7d74c8"/></linearGradient>
</defs>
<rect x="9.200" y="86.200" width="188.100" height="105.700" fill="#fbfbfb"/>
<rect x="9.200" y="86.200" width="188.100" height=".7" fill="#222"/>
<rect x="9.200" y="86.200" width=".5" height="105.700" fill="#555"/>
<g fill="#1aa094"><path d="M173.500 86.600h1.900l-1.700 6h-1.900zM177.500 86.600h1.900l-2.700 9.500h-1.900zM181.500 86.600h1.900l-3.600 12.500h-1.900zM185.500 86.600h1.900l-4.500 15.500h-1.900zM189.500 86.600h1.900l-4.700 16.500h-1.900zM193.500 86.600h1.900l-4 14h-1.900zM196.300 89h1v4l-2.500 9h-1.900z"/></g>
<text x="47.500" y="98.200" font-family="Liberation Sans" font-weight="700" font-size="5.200" fill="#10867e" text-anchor="middle" textLength="29.1" lengthAdjust="spacingAndGlyphs">AI-Assisted</text>
<text x="47.500" y="104.700" font-family="Liberation Sans" font-size="5.400" fill="#25a096" text-anchor="middle" textLength="51.7" lengthAdjust="spacingAndGlyphs">Metastasis Detection</text>
<rect x="89.400" y="100" width="25.600" height="16.500" fill="#8f86c9"/><rect x="89.400" y="100" width="25.600" height="16.500" filter="url(#pnoise)" opacity=".6"/>
<rect x="89.400" y="116.400" width="25.600" height="5.600" fill="#5f9b7c"/><rect x="97" y="118" width="10" height=".9" fill="#dfeee6"/><rect x="98" y="119.800" width="8" height=".7" fill="#dfeee6"/>
<g fill="none" stroke="#e8474c" stroke-width=".6"><ellipse cx="107.500" cy="104.300" rx="4.200" ry="2.200"/><ellipse cx="111" cy="111.500" rx="1.600" ry="2.400"/><path d="M102.500 106v8"/></g>
<path d="M89.400 111.700h-13.900l-19 23" fill="none" stroke="#f0644c" stroke-width=".6"/>
<text x="125.500" y="105.800" font-family="Liberation Sans" font-size="3.600" fill="#d4608a" textLength="12" lengthAdjust="spacingAndGlyphs">Output:</text>
<text x="130" y="110" font-family="Liberation Sans" font-size="3.600" fill="#d4608a" textLength="33.5" lengthAdjust="spacingAndGlyphs">Metastases diameter</text>
<text x="130" y="114.300" font-family="Liberation Sans" font-size="3.600" fill="#d4608a" textLength="19.4" lengthAdjust="spacingAndGlyphs">or total area</text>
<circle cx="126.800" cy="108.800" r=".45" fill="#d4608a"/>
<rect x="9.600" y="125.500" width="187.700" height="46.600" fill="url(#pur)"/>
<rect x="9.600" y="125.500" width="187.700" height="46.600" filter="url(#pnoise)" opacity=".4"/>
<ellipse cx="40" cy="150" rx="26" ry="14" fill="#4d4898" opacity=".35"/><ellipse cx="120" cy="158" rx="30" ry="10" fill="#4d4898" opacity=".25"/>
<g fill="none" stroke="#ea3c44" stroke-width=".75">
<path d="M15.0 125.900C16.2 127.600 18.500 133.300 22.100 136.300C25.600 139.400 31.400 143.700 36.100 144.300C40.800 145.0 46.100 142.300 50.100 140.300C54.100 138.300 57.100 132.700 60.100 132.300C63.200 132.0 65.800 138.300 68.200 138.300C70.500 138.300 72.500 134.400 74.200 132.300C75.800 130.200 77.500 127.0 78.200 125.900"/>
<path d="M120.300 125.900C119.300 127.600 117.600 133.300 114.300 136.300C110.900 139.400 104.300 142.700 100.200 144.300C96.200 146.0 92.900 146.700 90.200 146.400C87.500 146.0 86.500 142.700 84.200 142.300C81.900 142.0 78.900 142.300 76.200 144.300C73.500 146.400 67.500 151.700 68.200 154.400C68.800 157.0 75.800 159.700 80.200 160.400C84.500 161.100 90.200 160.100 94.200 158.400C98.200 156.700 101.200 150.0 104.300 150.400C107.300 150.700 108.300 159.0 112.300 160.400C116.300 161.700 123.600 160.400 128.300 158.400C133.0 156.400 136.300 151.700 140.300 148.400C144.300 145.0 150.0 142.100 152.400 138.300C154.700 134.600 154.0 128.0 154.400 125.900"/>
<path d="M166.400 125.900C165.400 127.600 159.700 134.300 160.400 136.300C161.100 138.400 169.700 137.0 170.400 138.300C171.100 139.700 166.700 143.0 164.400 144.300C162.100 145.700 158.0 143.700 156.400 146.400C154.700 149.0 155.0 156.200 154.400 160.400C153.700 164.600 152.700 169.600 152.400 171.400"/>
</g>
<g fill="none" stroke="#e8c83c" stroke-width=".6"><ellipse cx="72" cy="143.500" rx="2.800" ry="1.600"/><circle cx="24.500" cy="166" r="1"/></g>
<g fill="none" stroke="#f09a5c" stroke-width=".6"><ellipse cx="23" cy="156.600" rx="1.600" ry="2"/><ellipse cx="28" cy="161.500" rx="2.600" ry="1.600"/><ellipse cx="19" cy="167.500" rx="2.600" ry="2.400"/></g>
<rect x="9.600" y="172" width="187.700" height="2.200" fill="#fafafa"/>
<rect x="9.600" y="174.200" width="187.700" height="17.800" fill="url(#teal3)"/>
<text x="103.500" y="184.600" font-family="Liberation Sans" font-size="5.300" fill="#cdeeea" text-anchor="middle" textLength="111.1" lengthAdjust="spacingAndGlyphs">Can I identify metastasis in the lymph nodes?</text>
<rect x="60" y="188.600" width="88" height=".9" fill="#55b7b0"/>
<rect x="9.600" y="191.200" width="187.700" height=".8" fill="#0a3c38"/>
<!-- right figure -->
<rect x="224.500" y="87.400" width="138.500" height="104.600" fill="#fefefe"/>
<rect x="254" y="89.600" width="37.800" height="21.700" fill="#e9e9e9"/><rect x="304" y="89.600" width="37.800" height="21.700" fill="#e9e9e9"/>
<g fill="none" stroke-width=".55"><path d="M255.500 90.500l3 5 3 3.500 4 3.500 4 1.500 4 3 4.500 0 .5 3 11 .3v2.700" stroke="#5bbcc8"/><path d="M255.500 90.500l4 3.500 4 4.500 5 2.500 4 2.500 3 3.500 2.500 1.500" stroke="#e8746a"/><path d="M305.500 90.500l6 .5 5 3 5 2.500 4.500 4.500 4 .5 3.500 4.500 4 1.500 3 3.500" stroke="#5bbcc8"/><path d="M305.500 90.500l8 1 6 3.500 9 .5 3 4.500h4v5h3.500v6" stroke="#e8746a"/></g>
<g fill="#fff"><rect x="273" y="90.400" width="18" height="3.600"/><rect x="323" y="90.400" width="18" height="3.600"/></g>
<g fill="#555"><rect x="247" y="89.600" width=".5" height="21.700"/><rect x="297.600" y="89.600" width=".5" height="21.700"/><rect x="269" y="115.600" width="6" height=".8"/><rect x="319" y="115.600" width="6" height=".8"/><rect x="281" y="98.500" width="6" height=".9"/><rect x="316" y="98.500" width="6" height=".9"/><rect x="246.300" y="88.500" width="1.200" height="1.200"/><rect x="296.600" y="88.500" width="1.200" height="1.200"/><rect x="246.300" y="120.300" width="1.200" height="1.200"/><rect x="296.600" y="120.300" width="1.200" height="1.200"/></g>
<g fill="#777"><rect x="255" y="112.600" width="1.200" height=".8"/><rect x="265" y="112.600" width="1.200" height=".8"/><rect x="275" y="112.600" width="1.200" height=".8"/><rect x="285" y="112.600" width="1.200" height=".8"/><rect x="305" y="112.600" width="1.200" height=".8"/><rect x="316" y="112.600" width="1.200" height=".8"/><rect x="327" y="112.600" width="1.200" height=".8"/><rect x="338" y="112.600" width="1.200" height=".8"/></g>
<rect x="256.200" y="121.700" width="25.700" height="25.700" fill="#a886b8"/><rect x="256.200" y="121.700" width="25.700" height="25.700" filter="url(#hnoise)" opacity=".75"/><rect x="256.200" y="121.700" width="25.700" height="25.700" fill="#5a3c8c" opacity=".25"/>
<rect x="307" y="121.700" width="25.800" height="25.700" fill="#a4709c"/><rect x="307" y="121.700" width="25.800" height="25.700" filter="url(#hnoise)" opacity=".6"/><ellipse cx="317" cy="133" rx="7" ry="8" fill="#e8dce8" opacity=".45"/>
<g fill="#666"><rect x="268" y="148.600" width="7" height=".6"/><rect x="319" y="148.600" width="7" height=".6"/><rect x="269.500" y="149.800" width="4" height=".7"/><rect x="320.500" y="149.800" width="4" height=".7"/></g>
<g fill="#3b3b3b" opacity=".6"><rect x="226" y="153.900" width="106" height="1.400" fill="#111"/><rect x="333" y="153.900" width="29" height="1.200"/><rect x="226" y="156.900" width="136.500" height="1.200"/><rect x="226" y="159.900" width="136.500" height="1.200"/><rect x="226" y="162.900" width="136.500" height="1.200"/><rect x="226" y="165.900" width="136.500" height="1.200"/><rect x="226" y="168.900" width="136.500" height="1.200"/><rect x="226" y="171.900" width="136.500" height="1.200"/><rect x="226" y="174.900" width="136.500" height="1.200"/><rect x="226" y="177.900" width="136.500" height="1.200"/><rect x="226" y="180.900" width="136.500" height="1.200"/><rect x="226" y="183.900" width="136.500" height="1.200"/><rect x="226" y="186" width="68" height="1.100"/></g>
<rect x="226" y="190.200" width="24" height=".9" fill="#e88a3c"/><rect x="251" y="190.200" width="60" height=".9" fill="#888"/><rect x="361" y="190" width="1" height="1" fill="#555"/>
</svg>
<div class="tc" style="top:27.800px">Repetitive tasks vs Knowledge extraction</div>
<!--/S23--></div><svg class="abs" style="left:-2px;top:-2px" width="409" height="236" viewBox="-2 -2 409 236"><rect x=".4" y="0.7" width="404.100" height="229.800" rx="16.500" fill="none" stroke="#c4c7c5" stroke-width="1.400"/></svg></div>
<div class="num" style="left:972px;top:395px">23</div>
<div class="card" id="c24" style="left:1407px;top:150px"><div class="clip" style="clip-path:inset(0.0px 0 0.0px 0 round 16.5px)"><!--S24--><svg class="abs" style="left:0;top:0" width="405" height="231" viewBox="0 0 405 231">
<defs><linearGradient id="ag2" gradientUnits="userSpaceOnUse" x1="108.500" y1="0" x2="131" y2="0"><stop offset="0" stop-color="#ea3a52"/><stop offset=".28" stop-color="#f08a34"/><stop offset=".5" stop-color="#d8a83c"/><stop offset=".68" stop-color="#3cb8b4"/><stop offset="1" stop-color="#2a8ee0"/></linearGradient><linearGradient id="ag" x1="0" y1="0" x2="1" y2="1"><stop offset="0" stop-color="#f2b23a"/><stop offset=".35" stop-color="#2ea8d8"/><stop offset=".65" stop-color="#e8553a"/><stop offset="1" stop-color="#f2a03a"/></linearGradient></defs>
<rect x="76" y="85.100" width="255" height=".7" fill="#4a4a4a"/>
<g fill="none" stroke="url(#ag2)" stroke-width="1.250" stroke-linecap="round"><path d="M114.89 120.56A10.6 10.6 0 0 1 130.29 129.63"/><path d="M109.54 130.89A10.2 10.2 0 0 1 110.12 126.51M112.60 134.10A8.2 8.2 0 1 1 125.98 135.27"/><path d="M116.75 135.11A5.9 5.9 0 1 1 123.08 134.83"/><path d="M119.39 133.49A3.5 3.5 0 1 1 122.99 131.20M121.10 132.20a1.700 1.700 0 1 1 .6 -2.8"/></g>
<text x="134.500" y="133.100" font-family="Liberation Sans" font-weight="700" font-size="14.600" fill="#1e1a1c" textLength="73.700" lengthAdjust="spacing">AGENDIA</text>
<circle cx="271.060" cy="128.170" r="23" fill="#040404"/>
<path d="M268.0 115.3C268.9 114.8 269.4 116.8 271.9 118.3C274.4 119.9 273.7 119.9 277.4 121.1C281.1 122.3 282.2 121.4 285.8 122.8C289.3 124.1 288.7 124.0 290.8 126.1C292.9 128.2 293.0 127.7 293.6 130.6C294.1 133.4 294.2 135.5 293.0 136.7C291.8 137.9 291.0 135.7 289.1 135.0C287.2 134.3 287.7 134.0 285.8 133.9C283.9 133.8 284.1 134.0 281.9 134.7C279.7 135.5 279.2 136.2 277.4 136.7C275.7 137.1 276.0 136.9 275.2 136.4C274.4 135.9 274.9 135.5 274.4 134.7C273.9 133.9 273.9 134.0 273.3 133.3C272.7 132.7 272.7 133.0 272.2 132.2C271.6 131.5 272.0 131.4 271.3 130.6C270.7 129.7 270.5 129.9 269.7 129.2C268.9 128.4 268.6 128.6 268.3 127.8C268.0 127.0 268.3 127.1 268.6 126.1C268.8 125.1 269.1 125.5 269.1 123.9C269.1 122.3 268.9 122.3 268.6 120.0C268.3 117.7 267.1 115.7 268.0 115.3z" fill="#fff"/>
<path d="M247.17 123.89L263.28 123.89L266.89 120.28L267.72 121.11L266.89 124.72L257.44 133.89L254.94 131.39L259.67 126.56L251.89 126.56L249.67 127.78L248.83 130.56L248.83 136.39L261.06 136.39L261.33 137.89L251.33 138.06L247.17 133.89z" fill="#fff"/>
<circle cx="271.060" cy="128.170" r="23.800" fill="none" stroke="#fff" stroke-width="1.600"/>
<circle cx="78.500" cy="207.300" r="2.300" fill="#111"/><path d="M77.500 206.300h2.800l-1.500 1.200h1.500v.6h-2.800l1.500-1.200h-1.500z" fill="#fff"/>
</svg>
<div class="tc" style="top:27.800px">Morfolojiden genetik tahmin edilebilir mi?</div>
<div class="t" style="left:76px;top:69.200px;font-family:'Liberation Serif',serif;font-size:11.700px;line-height:14px;color:#4c4c4c;letter-spacing:.13px">Leveraging the benefits of digital biomarkers</div>
<div class="tc" style="top:161.400px;font-size:5.540px;line-height:9.550px;color:#5a5a5a;white-space:normal">Co-development of treatment planning tools that integrate the cloud-based Paige Platform with<br>genomic information from Agendia’s proprietary MammaPrint® and BluePrint® diagnostic tests for<br>patients with breast cancer</div>
<div class="t" style="left:83.500px;top:205.400px;font-size:4.300px;line-height:6px;font-weight:700;color:#222">Paige</div>
<div class="tc" style="top:206.600px;font-size:2.700px;line-height:4px;color:#555">Copyright © 2021 Paige.AI, Inc. All rights reserved.</div>
<div class="tc" style="top:214.200px;font-size:2.600px;line-height:4px;color:#555;font-style:italic">Confidential</div>
<div class="t" style="left:327.500px;top:206.600px;font-size:2.700px;line-height:4px;color:#555">49</div>
<!--/S24--></div><svg class="abs" style="left:-2px;top:-2px" width="409" height="236" viewBox="-2 -2 409 236"><rect x=".4" y="0.7" width="404.100" height="229.800" rx="16.500" fill="none" stroke="#c4c7c5" stroke-width="1.400"/></svg></div>
<div class="num" style="left:1409px;top:395px">24</div>
<div class="card" id="c25" style="left:96px;top:439px"><div class="clip" style="clip-path:inset(0.4px 0 0.0px 0 round 16.5px)"><!--S25--><svg class="abs" style="left:0;top:0" width="405" height="231" viewBox="0 0 405 231">
<defs><filter id="cn" x="0" y="0" width="100%" height="100%" color-interpolation-filters="sRGB"><feTurbulence type="fractalNoise" baseFrequency=".55" numOctaves="1" seed="11"/><feColorMatrix type="saturate" values="6"/><feComponentTransfer><feFuncA type="linear" slope="0" intercept="1"/></feComponentTransfer></filter></defs>
<rect x="6.0" y="53.7" width="392.5" height="164.8" fill="#000"/>
<rect x="6.0" y="53.7" width="137.3" height="6.0" fill="#2e2e30"/>
<rect x="143.3" y="54.5" width="255.2" height="6.0" fill="#343436"/>
<rect x="14.0" y="55.7" width="80.2" height="1.6" fill="#8a8d91"/>
<rect x="155.4" y="56.5" width="84.2" height="1.6" fill="#8a8d91"/>
<rect x="282.7" y="56.5" width="86.2" height="1.6" fill="#8a8d91"/>
<rect x="118.3" y="56.1" width="2.8" height="0.6" fill="#8a8d91"/>
<rect x="124.3" y="55.3" width="2.8" height="2.0" fill="#8a8d91"/>
<rect x="130.7" y="55.3" width="2.8" height="2.0" fill="#8a8d91"/>
<rect x="144.7" y="56.1" width="2.4" height="2.0" fill="#8a8d91"/>
<rect x="150.8" y="56.1" width="2.0" height="2.0" fill="#8a8d91"/>
<rect x="271.7" y="56.1" width="2.4" height="2.0" fill="#8a8d91"/>
<rect x="278.1" y="56.1" width="2.0" height="2.0" fill="#8a8d91"/>
<rect x="268.2" y="60.1" width="0.5" height="158.4" fill="#3a3d41"/>
<rect x="12.0" y="71.8" width="131.3" height="0.3" fill="#2f3336"/>
<rect x="269.6" y="138.3" width="128.3" height="0.3" fill="#2f3336"/>
<rect x="269.6" y="149.4" width="128.3" height="0.3" fill="#2f3336"/>
<rect x="269.6" y="160.4" width="128.3" height="0.3" fill="#2f3336"/>
<rect x="269.6" y="172.4" width="128.3" height="0.3" fill="#2f3336"/>
<rect x="269.6" y="191.5" width="128.3" height="0.3" fill="#2f3336"/>
<text x="28.1" y="68.6" font-family="Liberation Sans" font-weight="700" font-size="4.300" fill="#e7e9ea" textLength="12.6" lengthAdjust="spacingAndGlyphs">Tweet</text>
<text x="156.8" y="68.6" font-family="Liberation Sans" font-weight="700" font-size="4.300" fill="#e7e9ea" textLength="12.6" lengthAdjust="spacingAndGlyphs">Tweet</text>
<text x="284.3" y="68.6" font-family="Liberation Sans" font-weight="700" font-size="4.300" fill="#e7e9ea" textLength="12.6" lengthAdjust="spacingAndGlyphs">Tweet</text>
<rect x="17.2" y="66.8" width="2.6" height="0.5" fill="#e7e9ea"/>
<rect x="146.2" y="66.8" width="2.6" height="0.5" fill="#e7e9ea"/>
<rect x="273.5" y="66.8" width="2.6" height="0.5" fill="#e7e9ea"/>
<circle cx="20.9" cy="80.6" r="5.2" fill="#e9e6e2"/><circle cx="20.9" cy="79.6" r="2.2" fill="#c99a80"/><path d="M18.5 78.8a2.3 2.3 0 0 1 4.7 0z" fill="#2a1d16"/>
<circle cx="20.9" cy="125.3" r="5.2" fill="#e9e6e2"/><circle cx="20.9" cy="124.3" r="2.2" fill="#c99a80"/><path d="M18.5 123.5a2.3 2.3 0 0 1 4.7 0z" fill="#2a1d16"/>
<circle cx="149.6" cy="78.2" r="5.2" fill="#e9e6e2"/><circle cx="149.6" cy="77.1" r="2.2" fill="#c99a80"/><path d="M147.2 76.4a2.3 2.3 0 0 1 4.7 0z" fill="#2a1d16"/>
<circle cx="149.6" cy="172.4" r="5.2" fill="#e9e6e2"/><circle cx="149.6" cy="171.4" r="2.2" fill="#c99a80"/><path d="M147.2 170.6a2.3 2.3 0 0 1 4.7 0z" fill="#2a1d16"/>
<circle cx="276.7" cy="198.9" r="5.2" fill="#e9e6e2"/><circle cx="276.7" cy="197.8" r="2.2" fill="#c99a80"/><path d="M274.3 197.1a2.3 2.3 0 0 1 4.7 0z" fill="#2a1d16"/>
<circle cx="276.7" cy="79.2" r="5.2" fill="#d8d4b8"/><circle cx="277.9" cy="78.6" r="2.4" fill="#6a6a4a"/>
<circle cx="276.7" cy="181.4" r="5.2" fill="#d8d4b8"/><circle cx="277.9" cy="180.8" r="2.4" fill="#6a6a4a"/>
<rect x="20.6" y="86.2" width="0.4" height="33.1" fill="#333639"/>
<rect x="20.6" y="131.3" width="0.4" height="86.2" fill="#333639"/>
<rect x="149.4" y="84.2" width="0.4" height="82.2" fill="#333639"/>
<rect x="149.4" y="178.4" width="0.4" height="40.1" fill="#333639"/>
<rect x="28.9" y="76.8" width="33.1" height="1.8" fill="#e7e9ea"/>
<rect x="63.4" y="77.0" width="31.1" height="1.4" fill="#8a8d91"/>
<rect x="28.9" y="81.8" width="20.0" height="1.6" fill="#e7e9ea" opacity="0.52"/><rect x="49.7" y="81.8" width="14.0" height="1.6" fill="#1d9bf0" opacity="0.52"/><rect x="64.6" y="81.8" width="70.2" height="1.6" fill="#e7e9ea" opacity="0.52"/><rect x="28.9" y="86.2" width="30.1" height="1.6" fill="#1d9bf0" opacity="0.52"/><rect x="28.9" y="90.6" width="28.1" height="1.6" fill="#e7e9ea" opacity="0.52"/><rect x="28.9" y="95.0" width="7.0" height="1.6" fill="#e7e9ea" opacity="0.52"/><rect x="36.5" y="95.0" width="40.1" height="1.6" fill="#1d9bf0" opacity="0.52"/><rect x="77.4" y="95.0" width="4.4" height="1.6" fill="#e7e9ea" opacity="0.52"/><rect x="82.6" y="95.0" width="45.1" height="1.6" fill="#1d9bf0" opacity="0.52"/><rect x="28.9" y="99.4" width="35.1" height="1.6" fill="#1d9bf0" opacity="0.52"/><rect x="65.0" y="99.4" width="8.0" height="1.6" fill="#e7e9ea" opacity="0.52"/><rect x="73.8" y="99.4" width="32.1" height="1.6" fill="#1d9bf0" opacity="0.52"/><rect x="106.7" y="99.4" width="22.1" height="1.6" fill="#1d9bf0" opacity="0.52"/><rect x="28.9" y="103.8" width="14.0" height="1.6" fill="#1d9bf0" opacity="0.52"/>
<rect x="29.7" y="111.5" width="2.8" height="1.8" fill="#8a8d91"/>
<rect x="35.7" y="111.9" width="1.6" height="1.2" fill="#8a8d91"/>
<rect x="58.1" y="111.5" width="2.8" height="1.8" fill="#8a8d91"/>
<rect x="64.6" y="111.9" width="3.2" height="1.2" fill="#8a8d91"/>
<rect x="89.2" y="111.5" width="2.8" height="1.8" fill="#8a8d91"/>
<rect x="95.8" y="111.9" width="3.2" height="1.2" fill="#8a8d91"/>
<rect x="120.3" y="111.1" width="2.8" height="2.4" fill="#8a8d91"/>
<rect x="28.9" y="121.5" width="33.1" height="1.8" fill="#e7e9ea"/>
<rect x="63.4" y="121.7" width="31.1" height="1.4" fill="#8a8d91"/>
<rect x="28.9" y="126.5" width="50.1" height="1.6" fill="#e7e9ea" opacity="0.52"/><rect x="79.8" y="126.5" width="12.0" height="1.6" fill="#1d9bf0" opacity="0.52"/><rect x="92.6" y="126.5" width="30.1" height="1.6" fill="#e7e9ea" opacity="0.52"/><rect x="126.1" y="126.5" width="8.0" height="1.6" fill="#1d9bf0" opacity="0.52"/><rect x="134.7" y="126.5" width="2.8" height="1.6" fill="#e7e9ea" opacity="0.52"/><rect x="28.9" y="130.9" width="39.1" height="1.6" fill="#e7e9ea" opacity="0.52"/><rect x="69.0" y="130.9" width="8.4" height="1.6" fill="#1d9bf0" opacity="0.52"/><rect x="78.2" y="130.9" width="60.1" height="1.6" fill="#e7e9ea" opacity="0.52"/><rect x="28.9" y="135.3" width="110.3" height="1.6" fill="#e7e9ea" opacity="0.52"/><rect x="28.9" y="139.7" width="68.2" height="1.6" fill="#e7e9ea" opacity="0.52"/>
<rect x="29.1" y="146.0" width="113.3" height="64.0" rx="3" fill="#fbfbfb"/>
<path d="M35.1 146.4h47.1v9.0c-4.0 5.0-18.0 7.0-30.1 6.0s-14.0-4.0-17.0-15.0z" fill="#d58ab8"/>
<path d="M91.2 146.4h47.1v7.0c-6.0 6.0-20.0 8.0-30.1 7.0s-14.0-4.0-17.0-14.0z" fill="#d888b4"/>
<path d="M37.1 147.4c4.0 8.0 24.1 8.0 43.1 1.0" fill="none" stroke="#3a2a5a" stroke-width=".5"/>
<path d="M93.2 147.4c6.0 8.0 26.1 6.0 43.1 0" fill="none" stroke="#3a2a5a" stroke-width=".5"/>
<rect x="74.2" y="162.8" width="10.0" height="0.6" fill="#333"/>
<rect x="128.3" y="161.6" width="11.0" height="0.6" fill="#333"/>
<rect x="32.1" y="166.8" width="16.0" height="1.0" fill="#555"/>
<rect x="108.3" y="166.8" width="18.0" height="1.0" fill="#555"/>
<rect x="32.1" y="170.4" width="15.6" height="1.0" fill="#bbb"/>
<rect x="32.7" y="173.6" width="2.0" height="2.0" fill="#f0a030"/>
<rect x="32.7" y="177.2" width="2.0" height="2.0" fill="#3080d0"/>
<rect x="35.7" y="173.6" width="2.0" height="2.0" fill="#f0a030"/>
<rect x="35.7" y="177.2" width="2.0" height="2.0" fill="#f0a030"/>
<rect x="38.7" y="173.6" width="2.0" height="2.0" fill="#f0a030"/>
<rect x="38.7" y="177.2" width="2.0" height="2.0" fill="#3080d0"/>
<rect x="41.7" y="173.6" width="2.0" height="2.0" fill="#e05030"/>
<rect x="41.7" y="177.2" width="2.0" height="2.0" fill="#e05030"/>
<rect x="44.7" y="173.6" width="2.0" height="2.0" fill="#e05030"/>
<rect x="44.7" y="177.2" width="2.0" height="2.0" fill="#3080d0"/>
<rect x="56.1" y="170.4" width="15.6" height="1.0" fill="#bbb"/>
<rect x="56.7" y="173.6" width="2.0" height="2.0" fill="#f0a030"/>
<rect x="56.7" y="177.2" width="2.0" height="2.0" fill="#3080d0"/>
<rect x="59.7" y="173.6" width="2.0" height="2.0" fill="#f0a030"/>
<rect x="59.7" y="177.2" width="2.0" height="2.0" fill="#f0a030"/>
<rect x="62.8" y="173.6" width="2.0" height="2.0" fill="#f0a030"/>
<rect x="62.8" y="177.2" width="2.0" height="2.0" fill="#3080d0"/>
<rect x="65.8" y="173.6" width="2.0" height="2.0" fill="#e05030"/>
<rect x="65.8" y="177.2" width="2.0" height="2.0" fill="#e05030"/>
<rect x="68.8" y="173.6" width="2.0" height="2.0" fill="#e05030"/>
<rect x="68.8" y="177.2" width="2.0" height="2.0" fill="#3080d0"/>
<rect x="80.2" y="170.4" width="15.6" height="1.0" fill="#bbb"/>
<rect x="80.8" y="173.6" width="2.0" height="2.0" fill="#f0a030"/>
<rect x="80.8" y="177.2" width="2.0" height="2.0" fill="#3080d0"/>
<rect x="83.8" y="173.6" width="2.0" height="2.0" fill="#f0a030"/>
<rect x="83.8" y="177.2" width="2.0" height="2.0" fill="#f0a030"/>
<rect x="86.8" y="173.6" width="2.0" height="2.0" fill="#f0a030"/>
<rect x="86.8" y="177.2" width="2.0" height="2.0" fill="#3080d0"/>
<rect x="89.8" y="173.6" width="2.0" height="2.0" fill="#3080d0"/>
<rect x="89.8" y="177.2" width="2.0" height="2.0" fill="#3080d0"/>
<rect x="92.8" y="173.6" width="2.0" height="2.0" fill="#3080d0"/>
<rect x="92.8" y="177.2" width="2.0" height="2.0" fill="#3080d0"/>
<rect x="107.3" y="170.4" width="15.6" height="1.0" fill="#bbb"/>
<rect x="107.9" y="173.6" width="2.0" height="2.0" fill="#f0a030"/>
<rect x="107.9" y="177.2" width="2.0" height="2.0" fill="#3080d0"/>
<rect x="110.9" y="173.6" width="2.0" height="2.0" fill="#f0a030"/>
<rect x="110.9" y="177.2" width="2.0" height="2.0" fill="#f0a030"/>
<rect x="113.9" y="173.6" width="2.0" height="2.0" fill="#f0a030"/>
<rect x="113.9" y="177.2" width="2.0" height="2.0" fill="#3080d0"/>
<rect x="116.9" y="173.6" width="2.0" height="2.0" fill="#e05030"/>
<rect x="116.9" y="177.2" width="2.0" height="2.0" fill="#e05030"/>
<rect x="119.9" y="173.6" width="2.0" height="2.0" fill="#e05030"/>
<rect x="119.9" y="177.2" width="2.0" height="2.0" fill="#3080d0"/>
<rect x="125.9" y="170.4" width="15.6" height="1.0" fill="#bbb"/>
<rect x="126.5" y="173.6" width="2.0" height="2.0" fill="#888"/>
<rect x="126.5" y="177.2" width="2.0" height="2.0" fill="#3080d0"/>
<rect x="129.5" y="173.6" width="2.0" height="2.0" fill="#888"/>
<rect x="129.5" y="177.2" width="2.0" height="2.0" fill="#888"/>
<rect x="132.5" y="173.6" width="2.0" height="2.0" fill="#888"/>
<rect x="132.5" y="177.2" width="2.0" height="2.0" fill="#3080d0"/>
<rect x="135.5" y="173.6" width="2.0" height="2.0" fill="#888"/>
<rect x="135.5" y="177.2" width="2.0" height="2.0" fill="#888"/>
<rect x="138.5" y="173.6" width="2.0" height="2.0" fill="#888"/>
<rect x="138.5" y="177.2" width="2.0" height="2.0" fill="#3080d0"/>
<rect x="53.1" y="183.6" width="14.0" height="0.8" fill="#666"/>
<rect x="108.3" y="183.6" width="14.0" height="0.8" fill="#666"/>
<path d="M43.1 208.5v-21.1" stroke="#444" stroke-width=".3" fill="none"/>
<path d="M43.1 208.5l34.1 -20.0" stroke="#555" stroke-width=".35" fill="none"/>
<path d="M43.1 208.5v-6.0h3.0v-9.0h8.0v-2.0h9.0v-2.4h14.0" stroke="#4a90d8" stroke-width=".45" fill="none"/>
<path d="M43.1 208.5v-4.0h5.6v-6.0h6.0v-5.0h7.0v-4.4h15.0" stroke="#f0a030" stroke-width=".45" fill="none"/>
<path d="M43.1 208.5v-2.4h8.0v-5.0h4.4v-6.4h8.0v-4.0h12.0" stroke="#e06040" stroke-width=".4" fill="none"/>
<rect x="44.7" y="187.7" width="1.8" height="1.8" fill="#222"/>
<path d="M97.2 208.5v-21.1" stroke="#444" stroke-width=".3" fill="none"/>
<path d="M97.2 208.5l34.1 -20.0" stroke="#555" stroke-width=".35" fill="none"/>
<path d="M97.2 208.5v-6.0h3.0v-9.0h8.0v-2.0h9.0v-2.4h14.0" stroke="#4a90d8" stroke-width=".45" fill="none"/>
<path d="M97.2 208.5v-4.0h5.6v-6.0h6.0v-5.0h7.0v-4.4h15.0" stroke="#f0a030" stroke-width=".45" fill="none"/>
<path d="M97.2 208.5v-2.4h8.0v-5.0h4.4v-6.4h8.0v-4.0h12.0" stroke="#e06040" stroke-width=".4" fill="none"/>
<rect x="98.8" y="187.7" width="1.8" height="1.8" fill="#222"/>
<rect x="29.7" y="213.7" width="2.8" height="1.8" fill="#8a8d91"/>
<rect x="35.7" y="214.1" width="1.6" height="1.2" fill="#8a8d91"/>
<rect x="59.1" y="213.7" width="2.8" height="1.8" fill="#8a8d91"/>
<rect x="66.2" y="214.1" width="1.6" height="1.2" fill="#8a8d91"/>
<rect x="89.2" y="213.7" width="2.8" height="1.8" fill="#8a8d91"/>
<rect x="96.2" y="214.1" width="1.6" height="1.2" fill="#8a8d91"/>
<rect x="120.3" y="213.3" width="2.8" height="2.4" fill="#8a8d91"/>
<rect x="157.4" y="74.6" width="32.1" height="1.8" fill="#e7e9ea"/>
<rect x="190.9" y="74.8" width="30.1" height="1.4" fill="#8a8d91"/>
<rect x="157.4" y="79.6" width="16.0" height="1.6" fill="#e7e9ea" opacity="0.52"/><rect x="174.6" y="79.6" width="22.5" height="1.6" fill="#1d9bf0" opacity="0.52"/><rect x="197.9" y="79.6" width="68.2" height="1.6" fill="#e7e9ea" opacity="0.52"/><rect x="157.4" y="84.0" width="19.0" height="1.6" fill="#1d9bf0" opacity="0.52"/><rect x="177.4" y="84.0" width="88.6" height="1.6" fill="#e7e9ea" opacity="0.52"/><rect x="157.4" y="88.4" width="95.2" height="1.6" fill="#e7e9ea" opacity="0.52"/>
<rect x="157.4" y="93.6" width="109.7" height="61.7" rx="3" fill="#fdfdfd"/>
<rect x="176.0" y="94.2" width="38.1" height="36.5" filter="url(#cn)"/>
<rect x="176.0" y="94.2" width="38.1" height="36.5" fill="#e05a30" opacity=".28"/>
<rect x="216.1" y="94.2" width="38.1" height="36.5" fill="#7f9a8a"/>
<path d="M226.5 112.3c4.0-4.0 10.0 4.0 18.0 6.0v6.0h-16.0z" fill="#6a72a8"/>
<circle cx="222.5" cy="100.2" r="1.100" fill="#f04a20"/>
<circle cx="230.6" cy="104.3" r="1.100" fill="#f04a20"/>
<circle cx="238.6" cy="98.2" r="1.100" fill="#f04a20"/>
<circle cx="246.6" cy="106.3" r="1.100" fill="#f04a20"/>
<circle cx="228.5" cy="116.3" r="1.100" fill="#f04a20"/>
<circle cx="240.6" cy="112.3" r="1.100" fill="#f04a20"/>
<circle cx="248.6" cy="120.3" r="1.100" fill="#f04a20"/>
<circle cx="220.5" cy="124.3" r="1.100" fill="#f04a20"/>
<circle cx="234.6" cy="126.3" r="1.100" fill="#f04a20"/>
<circle cx="251.6" cy="96.2" r="1.100" fill="#f04a20"/>
<rect x="188.5" y="134.3" width="20.0" height="0.8" fill="#777"/>
<rect x="226.5" y="133.9" width="16.0" height="0.8" fill="#777"/>
<path d="M198.5 120.3v12.0M240.6 121.3h7.0v12.0h-4.0" stroke="#222" stroke-width=".4" fill="none"/>
<rect x="172.8" y="143.9" width="1.2" height="1.2" fill="#333"/>
<rect x="186.4" y="144.3" width="14.0" height="0.8" fill="#777"/>
<rect x="227.5" y="144.3" width="15.0" height="0.8" fill="#777"/>
<rect x="176.0" y="147.4" width="38.1" height="7.6" filter="url(#cn)"/><rect x="176.0" y="147.4" width="38.1" height="7.6" fill="#20a030" opacity=".3"/>
<rect x="216.1" y="147.4" width="38.1" height="7.6" filter="url(#cn)"/><rect x="216.1" y="147.4" width="38.1" height="7.6" fill="#fff" opacity=".5"/>
<rect x="158.4" y="159.2" width="2.8" height="1.8" fill="#8a8d91"/>
<rect x="164.4" y="159.6" width="1.6" height="1.2" fill="#8a8d91"/>
<rect x="186.4" y="159.2" width="2.8" height="1.8" fill="#8a8d91"/>
<rect x="192.9" y="159.6" width="1.6" height="1.2" fill="#8a8d91"/>
<rect x="215.5" y="159.2" width="2.8" height="1.8" fill="#8a8d91"/>
<rect x="222.1" y="159.6" width="1.6" height="1.2" fill="#8a8d91"/>
<rect x="246.2" y="158.8" width="2.8" height="2.4" fill="#8a8d91"/>
<rect x="157.4" y="168.8" width="32.1" height="1.8" fill="#e7e9ea"/>
<rect x="190.9" y="169.0" width="30.1" height="1.4" fill="#8a8d91"/>
<rect x="157.4" y="173.6" width="102.6" height="1.6" fill="#e7e9ea" opacity="0.52"/><rect x="157.4" y="178.0" width="87.2" height="1.6" fill="#e7e9ea" opacity="0.52"/><rect x="157.4" y="182.4" width="60.1" height="1.6" fill="#e7e9ea" opacity="0.52"/><rect x="218.3" y="182.4" width="38.1" height="1.6" fill="#1d9bf0" opacity="0.52"/><rect x="157.4" y="186.8" width="20.0" height="1.6" fill="#1d9bf0" opacity="0.52"/><rect x="178.6" y="186.8" width="24.1" height="1.6" fill="#1d9bf0" opacity="0.52"/><rect x="203.9" y="186.8" width="20.0" height="1.6" fill="#1d9bf0" opacity="0.52"/><rect x="225.1" y="186.8" width="16.0" height="1.6" fill="#1d9bf0" opacity="0.52"/><rect x="242.4" y="186.8" width="14.0" height="1.6" fill="#1d9bf0" opacity="0.52"/><rect x="157.4" y="191.3" width="13.6" height="1.6" fill="#1d9bf0" opacity="0.52"/>
<rect x="157.4" y="196.9" width="109.7" height="22.1" rx="3" fill="none" stroke="#2f3336" stroke-width=".4"/>
<rect x="157.6" y="197.1" width="27.7" height="21.3" fill="#16181c"/>
<rect x="168.4" y="207.5" width="6.0" height="6.8" fill="#6e767d"/>
<rect x="169.6" y="208.9" width="3.6" height="0.6" fill="#16181c"/>
<rect x="169.6" y="210.5" width="3.6" height="0.6" fill="#16181c"/>
<rect x="169.6" y="212.1" width="2.4" height="0.6" fill="#16181c"/>
<rect x="188.5" y="202.9" width="60.1" height="1.6" fill="#e7e9ea" opacity="0.6"/><rect x="188.5" y="207.3" width="61.1" height="1.6" fill="#8a8d91" opacity="0.6"/><rect x="188.5" y="211.7" width="71.2" height="1.6" fill="#8a8d91" opacity="0.6"/><rect x="188.5" y="216.1" width="19.0" height="1.6" fill="#8a8d91" opacity="0.6"/>
<rect x="285.1" y="76.4" width="19.0" height="1.8" fill="#e7e9ea"/>
<rect x="285.1" y="81.0" width="19.0" height="1.4" fill="#8a8d91"/>
<rect x="271.7" y="90.0" width="16.0" height="1.6" fill="#8a8d91"/>
<rect x="289.1" y="90.0" width="58.5" height="1.6" fill="#1d9bf0"/>
<rect x="271.7" y="97.2" width="70.2" height="2.6" fill="#e7e9ea" opacity="0.55"/><rect x="271.7" y="103.4" width="116.7" height="2.6" fill="#e7e9ea" opacity="0.55"/><rect x="271.7" y="109.7" width="97.2" height="2.6" fill="#e7e9ea" opacity="0.55"/><rect x="271.7" y="115.9" width="119.1" height="2.6" fill="#e7e9ea" opacity="0.55"/><rect x="271.7" y="122.1" width="49.1" height="2.6" fill="#e7e9ea" opacity="0.55"/>
<rect x="271.7" y="131.5" width="60.1" height="1.6" fill="#8a8d91"/>
<rect x="272.7" y="143.1" width="2.0" height="2.0" fill="#8a8d91"/>
<rect x="276.7" y="143.5" width="28.1" height="1.4" fill="#8a8d91"/>
<rect x="272.7" y="155.0" width="1.6" height="1.8" fill="#e7e9ea"/>
<rect x="275.5" y="155.2" width="18.0" height="1.4" fill="#8a8d91"/>
<rect x="285.5" y="165.4" width="3.2" height="2.8" fill="#8a8d91" opacity=".8"/>
<rect x="316.8" y="165.4" width="3.2" height="2.8" fill="#8a8d91" opacity=".8"/>
<rect x="348.2" y="165.4" width="3.2" height="2.8" fill="#8a8d91" opacity=".8"/>
<rect x="379.7" y="165.4" width="3.2" height="2.8" fill="#8a8d91" opacity=".8"/>
<rect x="285.7" y="180.8" width="32.1" height="2.0" fill="#8a8d91"/>
<rect x="380.5" y="178.4" width="16.0" height="7.6" rx="3.800" fill="#0e4e78"/>
<rect x="384.9" y="181.2" width="7.6" height="1.6" fill="#5aa8dc"/>
<rect x="285.1" y="195.3" width="32.1" height="1.8" fill="#e7e9ea"/>
<rect x="318.8" y="195.5" width="30.1" height="1.4" fill="#8a8d91"/>
<rect x="285.1" y="200.3" width="16.0" height="1.6" fill="#8a8d91"/>
<rect x="302.3" y="200.3" width="66.2" height="1.6" fill="#1d9bf0"/>
<rect x="285.1" y="205.1" width="105.3" height="1.6" fill="#e7e9ea" opacity="0.52"/><rect x="285.1" y="209.5" width="106.3" height="1.6" fill="#e7e9ea" opacity="0.52"/><rect x="285.1" y="213.9" width="45.1" height="1.6" fill="#e7e9ea" opacity="0.52"/>
<rect x="139.9" y="76.6" width="2.0" height="0.4" fill="#8a8d91"/>
<rect x="139.9" y="121.3" width="2.0" height="0.4" fill="#8a8d91"/>
<rect x="263.8" y="75.0" width="2.0" height="0.4" fill="#8a8d91"/>
<rect x="263.8" y="169.2" width="2.0" height="0.4" fill="#8a8d91"/>
<rect x="393.7" y="76.8" width="2.0" height="0.4" fill="#8a8d91"/>
<rect x="393.7" y="195.7" width="2.0" height="0.4" fill="#8a8d91"/>
</svg>
<div class="tc" style="top:27.800px">Reklamlar ve Gerçekler</div><!--/S25--></div><svg class="abs" style="left:-2px;top:-2px" width="409" height="236" viewBox="-2 -2 409 236"><rect x=".4" y="1.1" width="404.100" height="229.800" rx="16.500" fill="none" stroke="#c4c7c5" stroke-width="1.400"/></svg></div>
<div class="num" style="left:98px;top:683.6px">25</div>
<div class="card" id="c26" style="left:533px;top:439px"><div class="clip" style="clip-path:inset(0.4px 0 0.0px 0 round 16.5px)"><!--S26--><svg class="abs" style="left:0;top:0" width="405" height="231" viewBox="0 0 405 231">
<defs><linearGradient id="fda1" x1="0" y1="0" x2="1" y2="1"><stop offset="0" stop-color="#d8d8d8"/><stop offset=".6" stop-color="#f6f6f6"/><stop offset="1" stop-color="#fff"/></linearGradient><linearGradient id="fda2" x1="0" y1="1" x2="1" y2="0"><stop offset="0" stop-color="#7cc0e8"/><stop offset=".5" stop-color="#3a98d4"/><stop offset="1" stop-color="#0a6cb8"/></linearGradient></defs>
<rect x="20.0" y="61.1" width="104.9" height="161.8" fill="#15181c"/>
<circle cx="26.7" cy="67.2" r="4.0" fill="#2a6cd8"/><circle cx="26.1" cy="66.8" r="2.2" fill="#e8f0ff"/>
<rect x="33.1" y="64.4" width="7.6" height="1.6" fill="#e7e9ea"/>
<rect x="33.1" y="68.2" width="11.0" height="1.4" fill="#8a8d91"/>
<rect x="119.5" y="65.0" width="2.4" height="0.5" fill="#8a8d91"/>
<rect x="22.5" y="75.6" width="20.9" height="2.4" fill="#e7e9ea" opacity="0.55"/><rect x="44.1" y="75.6" width="28.1" height="2.4" fill="#1d9bf0" opacity="0.55"/><rect x="73.0" y="75.6" width="41.7" height="2.4" fill="#e7e9ea" opacity="0.55"/><rect x="22.5" y="80.5" width="51.7" height="2.4" fill="#e7e9ea" opacity="0.55"/><rect x="75.0" y="80.5" width="18.4" height="2.4" fill="#1d9bf0" opacity="0.55"/><rect x="94.2" y="80.5" width="18.0" height="2.4" fill="#e7e9ea" opacity="0.55"/><rect x="22.5" y="85.5" width="85.2" height="2.4" fill="#e7e9ea" opacity="0.55"/><rect x="22.5" y="90.4" width="88.2" height="2.4" fill="#e7e9ea" opacity="0.55"/><rect x="22.5" y="95.4" width="17.6" height="2.4" fill="#1d9bf0" opacity="0.55"/><rect x="40.9" y="95.4" width="75.4" height="2.4" fill="#e7e9ea" opacity="0.55"/><rect x="22.5" y="100.3" width="42.1" height="2.4" fill="#e7e9ea" opacity="0.55"/>
<rect x="22.7" y="106.9" width="99.6" height="18.4" rx="2.500" fill="none" stroke="#2f3336" stroke-width=".4"/>
<circle cx="26.3" cy="110.1" r="1.200" fill="#2a8ce8"/>
<rect x="28.5" y="109.3" width="11.0" height="1.6" fill="#e7e9ea"/>
<circle cx="42.3" cy="110.1" r="1.100" fill="#1d9bf0"/>
<rect x="44.5" y="109.5" width="17.6" height="1.4" fill="#8a8d91"/>
<rect x="24.9" y="113.7" width="95.2" height="1.4" fill="#e7e9ea" opacity="0.5"/><rect x="24.9" y="117.1" width="62.6" height="1.4" fill="#e7e9ea" opacity="0.5"/>
<rect x="24.9" y="121.3" width="20.0" height="1.4" fill="#1d9bf0"/>
<clipPath id="fdac"><rect x="22.7" y="126.7" width="99.6" height="56.3" rx="3"/></clipPath>
<g clip-path="url(#fdac)"><rect x="22.7" y="126.7" width="99.6" height="56.3" fill="url(#fda2)"/>
<path d="M22.7 126.7h54.5l11.0 36.1l-14.0 20.2h-51.5z" fill="url(#fda1)"/>
<path d="M74.2 183.0l14.0-20.2l4.0 6.0l-10.0 14.2z" fill="#bfe0f4" opacity=".7"/></g>
<text x="28.1" y="150.8" font-family="Liberation Sans" font-weight="700" font-size="6.600" fill="#1a6cb4" letter-spacing="-.2">NEW DE NOVO</text>
<text x="28.1" y="156.8" font-family="Liberation Sans" font-size="6.300" fill="#3a8ccc" letter-spacing="-.35">AUTHORIZATION</text>
<path d="M28.1 144.7h-1.6v13.0h1.6M75.4 144.7h1.6v13.0h-1.6" fill="none" stroke="#1a6cb4" stroke-width=".6"/>
<rect x="108.7" y="167.4" width="9.2" height="11.2" fill="#fff"/>
<text x="113.3" y="174.0" font-family="Liberation Sans" font-weight="700" font-size="3.400" fill="#1a6cb4" text-anchor="middle">FDA</text>
<rect x="22.7" y="187.0" width="51.1" height="1.4" fill="#8a8d91"/>
<rect x="22.5" y="192.1" width="100.2" height="0.2" fill="#2f3336"/>
<rect x="22.9" y="196.5" width="13.6" height="1.4" fill="#8a8d91"/>
<rect x="39.7" y="196.5" width="17.2" height="1.4" fill="#8a8d91"/>
<rect x="60.5" y="196.5" width="10.0" height="1.4" fill="#8a8d91"/>
<rect x="22.5" y="201.1" width="100.2" height="0.2" fill="#2f3336"/>
<rect x="33.1" y="204.5" width="3.2" height="2.8" fill="#8a8d91" opacity=".85"/><rect x="58.1" y="204.5" width="3.2" height="2.8" fill="#00ba7c" opacity=".85"/><rect x="83.2" y="204.5" width="3.2" height="2.8" fill="#f91880" opacity=".85"/><rect x="108.3" y="204.5" width="3.2" height="2.8" fill="#8a8d91" opacity=".85"/>
<rect x="22.5" y="210.9" width="100.2" height="0.2" fill="#2f3336"/>
<circle cx="26.7" cy="217.5" r="4.0" fill="#d8d4b8"/><circle cx="27.3" cy="217.1" r="1.8" fill="#6a6a4a"/>
<rect x="33.7" y="216.5" width="25.3" height="2.0" fill="#8a8d91"/>
<rect x="109.5" y="214.7" width="12.4" height="6.0" rx="3" fill="#0e4e78"/>
<rect x="112.3" y="217.1" width="6.8" height="1.4" fill="#5aa8dc"/>
<rect x="150.0" y="40.1" width="106.7" height="182.8" fill="#15181c"/>
<rect x="150.0" y="40.1" width="106.7" height="6.8" fill="#f6f7f8"/>
<circle cx="157.4" cy="43.3" r="1.100" fill="none" stroke="#777" stroke-width=".3"/>
<rect x="161.2" y="42.5" width="1.6" height="1.8" fill="#888"/>
<rect x="165.6" y="42.7" width="76.2" height="1.4" fill="#9a9a9a"/>
<circle cx="249.6" cy="43.3" r="1.100" fill="none" stroke="#777" stroke-width=".3"/>
<rect x="152.8" y="51.7" width="2.4" height="0.6" fill="#e7e9ea"/>
<text x="162.0" y="53.3" font-family="Liberation Sans" font-weight="700" font-size="3.700" fill="#e7e9ea" textLength="12.0" lengthAdjust="spacingAndGlyphs">Thread</text>
<circle cx="156.6" cy="62.8" r="4.4" fill="#e8d8d8"/><circle cx="156.6" cy="62.1" r="2.0" fill="#d89090"/><path d="M154.4 61.4a2.2 2.2 0 0 1 4.4 0z" fill="#a02828"/>
<rect x="162.8" y="60.1" width="20.0" height="1.6" fill="#e7e9ea"/>
<rect x="162.8" y="64.0" width="20.0" height="1.4" fill="#8a8d91"/>
<rect x="249.4" y="60.7" width="2.4" height="0.5" fill="#8a8d91"/>
<rect x="152.4" y="71.4" width="99.8" height="2.4" fill="#e7e9ea" opacity="0.55"/><rect x="152.4" y="76.3" width="91.2" height="2.4" fill="#e7e9ea" opacity="0.55"/><rect x="152.4" y="81.3" width="96.2" height="2.4" fill="#e7e9ea" opacity="0.55"/><rect x="152.4" y="86.2" width="85.2" height="2.4" fill="#e7e9ea" opacity="0.55"/><rect x="152.4" y="91.2" width="15.0" height="2.4" fill="#1d9bf0" opacity="0.55"/>
<rect x="152.8" y="97.6" width="99.2" height="29.7" rx="2.500" fill="none" stroke="#2f3336" stroke-width=".4"/>
<circle cx="156.2" cy="100.8" r="1.300" fill="#2a6cd8"/>
<rect x="158.8" y="100.0" width="7.0" height="1.6" fill="#e7e9ea"/>
<rect x="166.8" y="100.2" width="17.0" height="1.4" fill="#8a8d91"/>
<rect x="154.4" y="104.7" width="92.6" height="1.4" fill="#e7e9ea" opacity="0.5"/><rect x="154.4" y="108.2" width="93.8" height="1.4" fill="#e7e9ea" opacity="0.5"/><rect x="154.4" y="111.7" width="60.1" height="1.4" fill="#e7e9ea" opacity="0.5"/><rect x="154.4" y="115.2" width="50.1" height="1.4" fill="#e7e9ea" opacity="0.5"/>
<rect x="154.4" y="122.3" width="60.1" height="1.4" fill="#e7e9ea" opacity=".7"/>
<rect x="152.8" y="130.9" width="51.7" height="1.4" fill="#8a8d91"/>
<rect x="152.4" y="136.1" width="100.2" height="0.2" fill="#2f3336"/>
<rect x="152.8" y="140.3" width="13.2" height="1.4" fill="#8a8d91"/>
<rect x="169.6" y="140.3" width="8.8" height="1.4" fill="#8a8d91"/>
<rect x="152.4" y="144.9" width="100.2" height="0.2" fill="#2f3336"/>
<rect x="163.2" y="148.4" width="3.2" height="2.8" fill="#8a8d91" opacity=".85"/><rect x="188.3" y="148.4" width="3.2" height="2.8" fill="#8a8d91" opacity=".85"/><rect x="213.1" y="148.4" width="3.2" height="2.8" fill="#f91880" opacity=".85"/><rect x="238.0" y="148.4" width="3.2" height="2.8" fill="#8a8d91" opacity=".85"/>
<rect x="152.4" y="154.8" width="100.2" height="0.2" fill="#2f3336"/>
<circle cx="156.6" cy="161.6" r="4.2" fill="#d8d4b8"/><circle cx="157.2" cy="161.2" r="1.8" fill="#6a6a4a"/>
<rect x="163.4" y="160.8" width="25.3" height="2.0" fill="#8a8d91"/>
<rect x="239.0" y="158.6" width="12.8" height="6.2" rx="3.100" fill="#0e4e78"/>
<rect x="241.8" y="161.0" width="7.2" height="1.4" fill="#5aa8dc"/>
<rect x="152.4" y="168.0" width="100.2" height="0.2" fill="#2f3336"/>
<circle cx="156.6" cy="175.4" r="4.4" fill="#e8d8d8"/><circle cx="156.6" cy="174.8" r="2.0" fill="#d89090"/><path d="M154.4 174.1a2.2 2.2 0 0 1 4.4 0z" fill="#a02828"/>
<rect x="162.8" y="172.2" width="20.0" height="1.6" fill="#e7e9ea"/>
<rect x="184.0" y="172.4" width="25.1" height="1.4" fill="#8a8d91"/>
<rect x="249.4" y="172.8" width="2.4" height="0.5" fill="#8a8d91"/>
<rect x="162.8" y="176.2" width="13.2" height="1.4" fill="#8a8d91"/>
<rect x="176.8" y="176.2" width="20.0" height="1.4" fill="#1d9bf0"/>
<rect x="162.8" y="180.0" width="87.8" height="1.4" fill="#e7e9ea" opacity="0.5"/><rect x="162.8" y="183.7" width="88.2" height="1.4" fill="#e7e9ea" opacity="0.5"/><rect x="162.8" y="187.4" width="88.6" height="1.4" fill="#e7e9ea" opacity="0.5"/><rect x="162.8" y="191.0" width="43.1" height="1.4" fill="#e7e9ea" opacity="0.5"/>
<rect x="163.2" y="195.7" width="3.2" height="2.8" fill="#8a8d91" opacity=".85"/><rect x="186.8" y="195.7" width="3.2" height="2.8" fill="#8a8d91" opacity=".85"/><rect x="210.5" y="195.7" width="3.2" height="2.8" fill="#8a8d91" opacity=".85"/><rect x="234.6" y="195.7" width="3.2" height="2.8" fill="#8a8d91" opacity=".85"/>
<rect x="169.6" y="196.5" width="1.4" height="1.2" fill="#8a8d91"/>
<rect x="193.3" y="196.5" width="1.4" height="1.2" fill="#8a8d91"/>
<rect x="216.9" y="196.5" width="1.4" height="1.2" fill="#8a8d91"/>
<rect x="152.4" y="201.3" width="100.2" height="0.2" fill="#2f3336"/>
<circle cx="156.6" cy="207.1" r="4.4" fill="#e8d8d8"/><circle cx="156.6" cy="206.4" r="2.0" fill="#d89090"/><path d="M154.4 205.8a2.2 2.2 0 0 1 4.4 0z" fill="#a02828"/>
<rect x="162.8" y="203.9" width="20.0" height="1.6" fill="#e7e9ea"/>
<rect x="184.0" y="204.1" width="25.1" height="1.4" fill="#8a8d91"/>
<rect x="249.4" y="204.5" width="2.4" height="0.5" fill="#8a8d91"/>
<rect x="162.8" y="208.1" width="89.2" height="1.4" fill="#e7e9ea" opacity="0.5"/><rect x="162.8" y="211.8" width="83.4" height="1.4" fill="#e7e9ea" opacity="0.5"/>
<rect x="163.2" y="216.1" width="3.2" height="2.8" fill="#8a8d91" opacity=".85"/><rect x="186.8" y="216.1" width="3.2" height="2.8" fill="#8a8d91" opacity=".85"/><rect x="210.5" y="216.1" width="3.2" height="2.8" fill="#8a8d91" opacity=".85"/><rect x="234.6" y="216.1" width="3.2" height="2.8" fill="#8a8d91" opacity=".85"/>
<rect x="156.4" y="68.2" width="0.4" height="0.0" fill="#333"/>
<rect x="279.1" y="35.1" width="103.8" height="187.9" fill="#15181c"/>
<circle cx="288.3" cy="43.1" r="4.2" fill="#3a6a5a"/><circle cx="288.3" cy="42.5" r="1.9" fill="#c8a888"/><path d="M286.2 41.8a2.1 2.1 0 0 1 4.2 0z" fill="#222"/>
<rect x="294.3" y="39.7" width="26.1" height="1.6" fill="#e7e9ea"/>
<rect x="321.6" y="39.9" width="22.1" height="1.4" fill="#8a8d91"/>
<rect x="375.3" y="40.3" width="2.4" height="0.5" fill="#8a8d91"/>
<rect x="294.3" y="43.5" width="12.4" height="1.4" fill="#8a8d91"/>
<rect x="307.5" y="43.5" width="18.4" height="1.4" fill="#1d9bf0"/>
<rect x="294.3" y="47.1" width="80.2" height="1.4" fill="#e7e9ea" opacity="0.5"/><rect x="294.3" y="50.4" width="81.2" height="1.4" fill="#e7e9ea" opacity="0.5"/><rect x="294.3" y="53.8" width="74.6" height="1.4" fill="#e7e9ea" opacity="0.5"/><rect x="294.3" y="57.1" width="66.2" height="1.4" fill="#e7e9ea" opacity="0.5"/>
<rect x="294.3" y="62.1" width="3.2" height="2.8" fill="#8a8d91" opacity=".85"/><rect x="316.6" y="62.1" width="3.2" height="2.8" fill="#8a8d91" opacity=".85"/><rect x="338.6" y="62.1" width="3.2" height="2.8" fill="#8a8d91" opacity=".85"/><rect x="361.7" y="62.1" width="3.2" height="2.8" fill="#8a8d91" opacity=".85"/>
<rect x="299.9" y="63.0" width="1.2" height="1.2" fill="#8a8d91"/>
<rect x="322.2" y="63.0" width="1.2" height="1.2" fill="#8a8d91"/>
<rect x="344.2" y="63.0" width="1.2" height="1.2" fill="#8a8d91"/>
<rect x="280.7" y="67.2" width="100.6" height="0.2" fill="#2f3336"/>
<circle cx="288.3" cy="73.8" r="4.2" fill="#d8d0c0"/><circle cx="288.3" cy="73.1" r="1.9" fill="#b89878"/><path d="M286.2 72.5a2.1 2.1 0 0 1 4.2 0z" fill="#888"/>
<rect x="294.3" y="70.4" width="26.1" height="1.6" fill="#e7e9ea"/>
<rect x="321.6" y="70.6" width="22.1" height="1.4" fill="#8a8d91"/>
<rect x="375.3" y="71.0" width="2.4" height="0.5" fill="#8a8d91"/>
<rect x="294.3" y="74.2" width="12.4" height="1.4" fill="#8a8d91"/>
<rect x="307.5" y="74.2" width="18.4" height="1.4" fill="#1d9bf0"/>
<rect x="294.3" y="77.8" width="84.2" height="1.4" fill="#e7e9ea" opacity="0.5"/><rect x="294.3" y="81.1" width="50.1" height="1.4" fill="#e7e9ea" opacity="0.5"/>
<rect x="294.3" y="85.2" width="3.2" height="2.8" fill="#8a8d91" opacity=".85"/><rect x="316.6" y="85.2" width="3.2" height="2.8" fill="#8a8d91" opacity=".85"/><rect x="338.6" y="85.2" width="3.2" height="2.8" fill="#8a8d91" opacity=".85"/><rect x="361.7" y="85.2" width="3.2" height="2.8" fill="#8a8d91" opacity=".85"/>
<rect x="299.9" y="86.0" width="1.2" height="1.2" fill="#8a8d91"/>
<rect x="322.2" y="86.0" width="1.2" height="1.2" fill="#8a8d91"/>
<rect x="344.2" y="86.0" width="1.2" height="1.2" fill="#8a8d91"/>
<rect x="280.7" y="90.2" width="100.6" height="0.2" fill="#2f3336"/>
<circle cx="288.3" cy="96.8" r="4.2" fill="#7a4a3a"/><circle cx="288.3" cy="96.2" r="1.9" fill="#d8a888"/><path d="M286.2 95.6a2.1 2.1 0 0 1 4.2 0z" fill="#5a2a1a"/>
<rect x="294.3" y="93.4" width="26.1" height="1.6" fill="#e7e9ea"/>
<rect x="321.6" y="93.6" width="22.1" height="1.4" fill="#8a8d91"/>
<rect x="375.3" y="94.0" width="2.4" height="0.5" fill="#8a8d91"/>
<rect x="294.3" y="97.2" width="12.4" height="1.4" fill="#8a8d91"/>
<rect x="307.5" y="97.2" width="18.4" height="1.4" fill="#1d9bf0"/>
<rect x="294.3" y="100.8" width="80.2" height="1.4" fill="#e7e9ea" opacity="0.5"/><rect x="294.3" y="104.2" width="81.2" height="1.4" fill="#e7e9ea" opacity="0.5"/><rect x="294.3" y="107.5" width="74.6" height="1.4" fill="#e7e9ea" opacity="0.5"/><rect x="294.3" y="110.8" width="66.2" height="1.4" fill="#e7e9ea" opacity="0.5"/>
<rect x="294.3" y="114.9" width="3.2" height="2.8" fill="#8a8d91" opacity=".85"/><rect x="316.6" y="114.9" width="3.2" height="2.8" fill="#8a8d91" opacity=".85"/><rect x="338.6" y="114.9" width="3.2" height="2.8" fill="#8a8d91" opacity=".85"/><rect x="361.7" y="114.9" width="3.2" height="2.8" fill="#8a8d91" opacity=".85"/>
<rect x="299.9" y="115.7" width="1.2" height="1.2" fill="#8a8d91"/>
<rect x="322.2" y="115.7" width="1.2" height="1.2" fill="#8a8d91"/>
<rect x="344.2" y="115.7" width="1.2" height="1.2" fill="#8a8d91"/>
<rect x="280.7" y="119.9" width="100.6" height="0.2" fill="#2f3336"/>
<circle cx="288.3" cy="132.3" r="4.2" fill="#5a4a3a"/><circle cx="288.3" cy="131.7" r="1.9" fill="#e8c8a8"/><path d="M286.2 131.1a2.1 2.1 0 0 1 4.2 0z" fill="#3a2a1a"/>
<rect x="294.3" y="128.9" width="26.1" height="1.6" fill="#e7e9ea"/>
<rect x="321.6" y="129.1" width="22.1" height="1.4" fill="#8a8d91"/>
<rect x="375.3" y="129.5" width="2.4" height="0.5" fill="#8a8d91"/>
<rect x="294.3" y="132.7" width="12.4" height="1.4" fill="#8a8d91"/>
<rect x="307.5" y="132.7" width="18.4" height="1.4" fill="#1d9bf0"/>
<rect x="294.3" y="136.3" width="80.2" height="1.4" fill="#e7e9ea" opacity="0.5"/>
<rect x="294.3" y="140.9" width="3.2" height="2.8" fill="#8a8d91" opacity=".85"/><rect x="316.6" y="140.9" width="3.2" height="2.8" fill="#8a8d91" opacity=".85"/><rect x="338.6" y="140.9" width="3.2" height="2.8" fill="#8a8d91" opacity=".85"/><rect x="361.7" y="140.9" width="3.2" height="2.8" fill="#8a8d91" opacity=".85"/>
<rect x="299.9" y="141.7" width="1.2" height="1.2" fill="#8a8d91"/>
<rect x="322.2" y="141.7" width="1.2" height="1.2" fill="#8a8d91"/>
<rect x="344.2" y="141.7" width="1.2" height="1.2" fill="#8a8d91"/>
<rect x="280.7" y="146.0" width="100.6" height="0.2" fill="#2f3336"/>
<circle cx="288.3" cy="152.4" r="4.2" fill="#e8d8d8"/><circle cx="288.3" cy="151.7" r="1.9" fill="#d89090"/><path d="M286.2 151.1a2.1 2.1 0 0 1 4.2 0z" fill="#a02828"/>
<rect x="294.3" y="149.0" width="26.1" height="1.6" fill="#e7e9ea"/>
<rect x="321.6" y="149.2" width="22.1" height="1.4" fill="#8a8d91"/>
<rect x="375.3" y="149.6" width="2.4" height="0.5" fill="#8a8d91"/>
<rect x="294.3" y="152.8" width="12.4" height="1.4" fill="#8a8d91"/>
<rect x="307.5" y="152.8" width="18.4" height="1.4" fill="#1d9bf0"/>
<rect x="294.3" y="156.4" width="83.2" height="1.4" fill="#e7e9ea" opacity="0.5"/><rect x="294.3" y="159.7" width="82.6" height="1.4" fill="#e7e9ea" opacity="0.5"/><rect x="294.3" y="163.0" width="56.1" height="1.4" fill="#e7e9ea" opacity="0.5"/>
<rect x="294.3" y="167.0" width="3.2" height="2.8" fill="#8a8d91" opacity=".85"/><rect x="316.6" y="167.0" width="3.2" height="2.8" fill="#8a8d91" opacity=".85"/><rect x="338.6" y="167.0" width="3.2" height="2.8" fill="#f91880" opacity=".85"/><rect x="361.7" y="167.0" width="3.2" height="2.8" fill="#8a8d91" opacity=".85"/>
<rect x="299.9" y="167.8" width="1.2" height="1.2" fill="#8a8d91"/>
<rect x="322.2" y="167.8" width="1.2" height="1.2" fill="#8a8d91"/>
<rect x="344.2" y="167.8" width="1.2" height="1.2" fill="#8a8d91"/>
<rect x="280.7" y="172.0" width="100.6" height="0.2" fill="#2f3336"/>
<circle cx="288.3" cy="178.4" r="4.2" fill="#5a4a3a"/><circle cx="288.3" cy="177.8" r="1.9" fill="#e8c8a8"/><path d="M286.2 177.2a2.1 2.1 0 0 1 4.2 0z" fill="#3a2a1a"/>
<rect x="294.3" y="175.0" width="26.1" height="1.6" fill="#e7e9ea"/>
<rect x="321.6" y="175.2" width="22.1" height="1.4" fill="#8a8d91"/>
<rect x="375.3" y="175.6" width="2.4" height="0.5" fill="#8a8d91"/>
<rect x="294.3" y="178.8" width="12.4" height="1.4" fill="#8a8d91"/>
<rect x="307.5" y="178.8" width="18.4" height="1.4" fill="#1d9bf0"/>
<rect x="294.3" y="182.4" width="84.2" height="1.4" fill="#e7e9ea" opacity="0.5"/><rect x="294.3" y="185.8" width="50.1" height="1.4" fill="#e7e9ea" opacity="0.5"/>
<rect x="294.3" y="190.1" width="3.2" height="2.8" fill="#8a8d91" opacity=".85"/><rect x="316.6" y="190.1" width="3.2" height="2.8" fill="#8a8d91" opacity=".85"/><rect x="338.6" y="190.1" width="3.2" height="2.8" fill="#8a8d91" opacity=".85"/><rect x="361.7" y="190.1" width="3.2" height="2.8" fill="#8a8d91" opacity=".85"/>
<rect x="299.9" y="190.9" width="1.2" height="1.2" fill="#8a8d91"/>
<rect x="322.2" y="190.9" width="1.2" height="1.2" fill="#8a8d91"/>
<rect x="344.2" y="190.9" width="1.2" height="1.2" fill="#8a8d91"/>
<rect x="280.7" y="195.1" width="100.6" height="0.2" fill="#2f3336"/>
<circle cx="288.3" cy="201.5" r="4.2" fill="#2a2a2a"/><circle cx="288.3" cy="200.9" r="1.9" fill="#e8b8a0"/><path d="M286.2 200.2a2.1 2.1 0 0 1 4.2 0z" fill="#8a3a2a"/>
<rect x="294.3" y="198.1" width="26.1" height="1.6" fill="#e7e9ea"/>
<rect x="321.6" y="198.3" width="22.1" height="1.4" fill="#8a8d91"/>
<rect x="375.3" y="198.7" width="2.4" height="0.5" fill="#8a8d91"/>
<rect x="294.3" y="201.9" width="12.4" height="1.4" fill="#8a8d91"/>
<rect x="307.5" y="201.9" width="18.4" height="1.4" fill="#1d9bf0"/>
<rect x="294.3" y="205.5" width="84.2" height="1.4" fill="#e7e9ea" opacity="0.5"/><rect x="294.3" y="208.8" width="50.1" height="1.4" fill="#e7e9ea" opacity="0.5"/>
<rect x="294.3" y="213.3" width="3.2" height="2.8" fill="#8a8d91" opacity=".85"/><rect x="316.6" y="213.3" width="3.2" height="2.8" fill="#8a8d91" opacity=".85"/><rect x="338.6" y="213.3" width="3.2" height="2.8" fill="#f91880" opacity=".85"/><rect x="361.7" y="213.3" width="3.2" height="2.8" fill="#8a8d91" opacity=".85"/>
<rect x="299.9" y="214.1" width="1.2" height="1.2" fill="#8a8d91"/>
<rect x="322.2" y="214.1" width="1.2" height="1.2" fill="#8a8d91"/>
<rect x="344.2" y="214.1" width="1.2" height="1.2" fill="#8a8d91"/>
<rect x="294.3" y="109.9" width="35.1" height="1.4" fill="#e7e9ea" opacity=".7"/>
<circle cx="333.2" cy="110.7" r="1.500" fill="#f0c030"/>
<rect x="294.3" y="121.9" width="14.0" height="1.4" fill="#1d9bf0"/>
<rect x="288.1" y="48.1" width="0.4" height="16.0" fill="#333639"/>
<rect x="288.1" y="78.6" width="0.4" height="12.0" fill="#333639"/>
<rect x="288.1" y="101.6" width="0.4" height="22.1" fill="#333639"/>
<rect x="288.1" y="136.9" width="0.4" height="10.0" fill="#333639"/>
<rect x="288.1" y="157.0" width="0.4" height="16.0" fill="#333639"/>
<rect x="288.1" y="182.8" width="0.4" height="12.0" fill="#333639"/>
</svg>
<div class="t" style="left:22.300px;top:27.800px">Alan bilgisi</div><!--/S26--></div><svg class="abs" style="left:-2px;top:-2px" width="409" height="236" viewBox="-2 -2 409 236"><rect x=".4" y="1.1" width="404.100" height="229.800" rx="16.500" fill="none" stroke="#c4c7c5" stroke-width="1.400"/></svg></div>
<div class="num" style="left:535px;top:683.6px">26</div>
<div class="card" id="c27" style="left:970px;top:439px"><div class="clip" style="clip-path:inset(0.4px 0 0.0px 0 round 16.5px)"><!--S27--><svg class="abs" style="left:0;top:0" width="405" height="231" viewBox="0 0 405 231">
<rect x="11.0" y="76.2" width="148.4" height="94.2" fill="#fdfdfd"/>
<rect x="11.0" y="80.2" width="148.4" height="0.4" fill="#c8ccd4"/>
<rect x="11.4" y="86.6" width="93.4" height="1.2" fill="#555" opacity=".55"/>
<rect x="11.4" y="91.8" width="148.4" height="0.3" fill="#e0e0e0"/>
<rect x="13.6" y="94.0" width="4.0" height="1.0" fill="#555"/>
<rect x="21.1" y="94.0" width="2.4" height="1.0" fill="#999"/>
<rect x="26.7" y="94.0" width="2.4" height="1.0" fill="#999"/>
<rect x="32.1" y="94.0" width="2.4" height="1.0" fill="#999"/>
<rect x="124.3" y="93.8" width="16.0" height="1.0" fill="#bbb"/>
<rect x="143.3" y="93.8" width="4.0" height="1.0" fill="#aaa"/>
<rect x="148.4" y="93.8" width="4.0" height="1.0" fill="#aaa"/>
<rect x="153.6" y="93.0" width="4.4" height="2.4" fill="#cfe0fa"/>
<rect x="11.4" y="97.0" width="147.4" height="0.2" fill="#ddd"/>
<rect x="14.0" y="98.4" width="4.0" height="0.8" fill="#888"/>
<rect x="49.7" y="98.4" width="4.8" height="0.8" fill="#888"/>
<rect x="57.1" y="98.4" width="2.4" height="0.8" fill="#888"/>
<rect x="62.1" y="98.4" width="2.8" height="0.8" fill="#888"/>
<rect x="67.8" y="98.4" width="2.4" height="0.8" fill="#888"/>
<rect x="73.2" y="98.4" width="2.4" height="0.8" fill="#888"/>
<rect x="78.6" y="98.4" width="2.4" height="0.8" fill="#888"/>
<rect x="83.8" y="98.4" width="5.6" height="0.8" fill="#888"/>
<rect x="92.2" y="98.4" width="6.0" height="0.8" fill="#888"/>
<rect x="106.3" y="98.4" width="6.0" height="0.8" fill="#888"/>
<rect x="118.3" y="98.4" width="4.0" height="0.8" fill="#888"/>
<rect x="130.3" y="98.4" width="2.8" height="0.8" fill="#888"/>
<rect x="143.5" y="98.4" width="2.4" height="0.8" fill="#888"/>
<rect x="152.4" y="98.4" width="2.4" height="0.8" fill="#888"/>
<rect x="14.0" y="101.4" width="32.1" height="0.8" fill="#777" opacity=".8"/>
<rect x="57.1" y="101.4" width="1.2" height="0.8" fill="#888" opacity=".7"/>
<rect x="62.6" y="101.4" width="2.4" height="0.8" fill="#888" opacity=".7"/>
<rect x="68.2" y="101.4" width="2.4" height="0.8" fill="#888" opacity=".7"/>
<rect x="73.4" y="101.4" width="2.4" height="0.8" fill="#888" opacity=".7"/>
<rect x="78.6" y="101.4" width="2.4" height="0.8" fill="#888" opacity=".7"/>
<rect x="84.2" y="101.4" width="1.0" height="0.8" fill="#888" opacity=".7"/>
<rect x="92.6" y="101.4" width="0.8" height="0.8" fill="#888" opacity=".7"/>
<rect x="106.3" y="101.4" width="10.0" height="0.8" fill="#888" opacity=".7"/>
<rect x="118.3" y="101.4" width="10.0" height="0.8" fill="#888" opacity=".7"/>
<rect x="130.3" y="101.4" width="12.0" height="0.8" fill="#888" opacity=".7"/>
<rect x="143.5" y="101.4" width="1.6" height="0.8" fill="#888" opacity=".7"/>
<rect x="148.0" y="100.8" width="10.0" height="1.8" fill="none" stroke="#ccc" stroke-width=".2"/>
<rect x="14.0" y="103.8" width="32.1" height="0.8" fill="#777" opacity=".8"/>
<rect x="57.1" y="103.8" width="1.2" height="0.8" fill="#888" opacity=".7"/>
<rect x="62.6" y="103.8" width="2.4" height="0.8" fill="#888" opacity=".7"/>
<rect x="68.2" y="103.8" width="2.4" height="0.8" fill="#888" opacity=".7"/>
<rect x="73.4" y="103.8" width="2.4" height="0.8" fill="#888" opacity=".7"/>
<rect x="78.6" y="103.8" width="2.4" height="0.8" fill="#888" opacity=".7"/>
<rect x="84.2" y="103.8" width="1.0" height="0.8" fill="#888" opacity=".7"/>
<rect x="92.6" y="103.8" width="0.8" height="0.8" fill="#888" opacity=".7"/>
<rect x="106.3" y="103.8" width="10.0" height="0.8" fill="#888" opacity=".7"/>
<rect x="118.3" y="103.8" width="10.0" height="0.8" fill="#888" opacity=".7"/>
<rect x="130.3" y="103.8" width="12.0" height="0.8" fill="#888" opacity=".7"/>
<rect x="143.5" y="103.8" width="1.6" height="0.8" fill="#888" opacity=".7"/>
<rect x="148.0" y="103.2" width="10.0" height="1.8" fill="none" stroke="#ccc" stroke-width=".2"/>
<rect x="14.0" y="106.3" width="32.1" height="0.8" fill="#777" opacity=".8"/>
<rect x="57.1" y="106.3" width="1.2" height="0.8" fill="#888" opacity=".7"/>
<rect x="62.6" y="106.3" width="2.4" height="0.8" fill="#888" opacity=".7"/>
<rect x="68.2" y="106.3" width="2.4" height="0.8" fill="#888" opacity=".7"/>
<rect x="73.4" y="106.3" width="2.4" height="0.8" fill="#888" opacity=".7"/>
<rect x="78.6" y="106.3" width="2.4" height="0.8" fill="#888" opacity=".7"/>
<rect x="84.2" y="106.3" width="1.0" height="0.8" fill="#888" opacity=".7"/>
<rect x="92.6" y="106.3" width="0.8" height="0.8" fill="#888" opacity=".7"/>
<rect x="106.3" y="106.3" width="10.0" height="0.8" fill="#888" opacity=".7"/>
<rect x="118.3" y="106.3" width="10.0" height="0.8" fill="#888" opacity=".7"/>
<rect x="130.3" y="106.3" width="12.0" height="0.8" fill="#888" opacity=".7"/>
<rect x="143.5" y="106.3" width="1.6" height="0.8" fill="#888" opacity=".7"/>
<rect x="148.0" y="105.7" width="10.0" height="1.8" fill="none" stroke="#ccc" stroke-width=".2"/>
<rect x="14.0" y="108.7" width="45.1" height="0.8" fill="#bbb"/>
<rect x="11.4" y="110.7" width="147.4" height="0.2" fill="#ddd"/>
<rect x="14.0" y="112.9" width="9.0" height="1.8" fill="#eee" stroke="#ccc" stroke-width=".2"/>
<rect x="13.3" y="114.5" width="145.0" height="0.4" fill="#bbb" opacity=".5"/>
<path d="M92.5 126.4L99.2 116.7L105.8 122.7L113.3 118.5L123.3 117.7L131.7 121.0L138.3 117.2L145.0 121.0L150.0 117.7L155.0 118.9L155.0 128.5L150.0 124.3L145.0 128.5L138.3 124.3L131.7 128.5L123.3 125.2L113.3 128.5L105.8 126.0L99.2 128.5L92.5 126.4" fill="#7ab0f0" stroke="none" stroke-width="0" opacity="0.5" stroke-linejoin="round"/>
<path d="M15.4 129.3L20.4 117.7L30.0 124.3L38.3 129.3L48.3 129.3L52.5 120.2L58.3 128.5L65.8 124.3L71.7 128.5L85.0 126.0L99.2 116.4L105.8 124.3L113.3 121.0L123.3 124.3L131.7 121.8L138.3 125.2L145.0 121.0L150.0 125.2L155.0 120.2" fill="none" stroke="#2a7ae8" stroke-width="0.7" opacity="0.8" stroke-linejoin="round"/>
<path d="M15.2 123.3L20.2 115.6L30.7 127.5L37.8 126.1L47.6 122.9L53.3 123.5L57.9 126.8L66.7 125.1L71.9 126.6L84.2 125.5L98.1 116.2L106.7 127.2L112.8 121.3L123.5 127.1L132.5 124.4L138.1 125.2L144.8 121.7L149.5 122.9L153.9 122.3" fill="none" stroke="#4a90ea" stroke-width="0.3" opacity="0.5" stroke-linejoin="round"/>
<path d="M14.9 125.5L20.0 116.0L29.8 124.0L37.8 126.6L47.9 128.4L51.5 121.6L59.0 122.1L65.4 121.7L70.5 124.4L86.1 128.3L100.3 118.0L105.3 121.1L114.0 124.1L124.4 123.7L132.5 122.6L137.6 123.8L144.1 120.6L151.2 124.4L153.8 119.0" fill="none" stroke="#4a90ea" stroke-width="0.3" opacity="0.5" stroke-linejoin="round"/>
<path d="M16.1 122.4L19.4 115.6L29.3 125.4L37.5 121.8L47.2 126.5L53.7 116.8L59.0 124.5L65.8 125.3L70.5 124.5L86.0 122.1L99.2 118.6L105.2 121.2L112.6 119.3L124.3 122.5L130.5 119.4L138.5 128.0L144.8 124.3L150.4 127.8L155.6 122.1" fill="none" stroke="#4a90ea" stroke-width="0.3" opacity="0.5" stroke-linejoin="round"/>
<path d="M14.7 124.9L21.5 121.2L30.7 122.6L38.4 129.5L47.8 129.5L51.4 124.4L58.8 129.5L64.9 122.3L70.6 129.5L85.2 123.0L100.2 118.1L104.6 122.5L112.1 123.8L122.4 126.8L132.4 123.9L138.5 127.7L144.3 123.5L149.6 126.3L155.7 122.8" fill="none" stroke="#4a90ea" stroke-width="0.3" opacity="0.5" stroke-linejoin="round"/>
<path d="M14.2 127.7L20.4 115.6L29.1 125.8L38.4 128.5L49.2 126.7L52.2 116.0L57.7 127.5L64.8 125.7L72.6 125.1L85.9 124.0L98.1 118.3L105.1 126.9L114.2 119.7L124.1 123.8L132.6 119.6L137.5 123.0L144.6 121.0L151.0 125.4L153.8 121.6" fill="none" stroke="#4a90ea" stroke-width="0.3" opacity="0.5" stroke-linejoin="round"/>
<path d="M15.4 126.7L19.4 117.3L29.6 123.3L38.7 129.5L47.9 129.5L53.5 121.0L59.1 128.0L64.9 123.0L72.1 127.7L84.1 119.1L98.4 118.5L105.5 127.0L113.0 121.5L122.3 125.1L132.8 121.2L138.7 123.0L144.5 119.8L148.8 122.0L155.8 123.2" fill="none" stroke="#4a90ea" stroke-width="0.3" opacity="0.5" stroke-linejoin="round"/>
<path d="M16.5 129.5L20.4 115.6L30.7 126.1L38.7 128.2L48.6 129.5L53.6 119.4L59.3 126.9L65.2 122.8L72.9 126.5L84.8 126.3L98.6 118.5L104.6 123.7L113.4 118.9L123.6 125.6L132.8 120.9L137.5 126.0L146.2 118.1L151.0 128.4L154.5 120.9" fill="none" stroke="#4a90ea" stroke-width="0.3" opacity="0.5" stroke-linejoin="round"/>
<path d="M14.7 123.3L21.1 121.5L29.5 118.6L39.1 128.4L49.5 129.2L51.6 117.1L57.9 121.0L67.1 117.2L72.2 128.0L86.1 126.9L99.7 118.9L106.3 124.7L113.5 122.5L122.5 124.4L131.6 124.1L137.5 122.3L144.4 123.5L150.5 124.4L154.6 122.6" fill="none" stroke="#4a90ea" stroke-width="0.3" opacity="0.5" stroke-linejoin="round"/>
<path d="M14.2 126.4L21.6 115.6L30.9 118.1L38.5 128.0L47.5 129.0L53.0 124.0L58.0 129.5L66.1 127.2L72.7 125.0L86.0 124.0L98.0 117.1L105.2 125.2L113.7 123.4L124.3 123.0L131.3 122.7L139.3 127.4L146.0 123.6L150.5 126.2L155.1 120.9" fill="none" stroke="#4a90ea" stroke-width="0.3" opacity="0.5" stroke-linejoin="round"/>
<path d="M14.4 129.5L20.5 117.4L29.3 121.7L39.4 126.7L49.5 126.4L51.3 120.7L58.6 129.5L64.7 121.0L71.3 124.3L85.8 128.6L98.9 115.6L104.7 125.0L114.5 120.4L124.2 126.0L132.1 120.5L138.8 127.1L144.2 120.6L151.0 122.0L154.4 123.0" fill="none" stroke="#4a90ea" stroke-width="0.3" opacity="0.5" stroke-linejoin="round"/>
<path d="M15.7 128.8L20.7 117.1L28.8 121.1L39.4 124.7L47.3 126.9L51.5 119.5L58.8 127.8L64.9 125.3L72.9 125.5L85.9 120.4L100.3 115.6L106.0 123.0L114.4 122.1L124.2 121.5L132.2 119.7L139.0 122.0L144.3 118.9L149.6 122.1L156.2 119.0" fill="none" stroke="#4a90ea" stroke-width="0.3" opacity="0.5" stroke-linejoin="round"/>
<path d="M16.6 127.5L21.6 115.6L31.2 126.9L38.8 127.4L47.3 129.5L52.4 115.6L58.0 127.4L66.5 126.5L71.0 121.4L84.2 123.1L98.8 117.2L106.4 123.4L112.6 124.0L124.5 123.3L130.5 119.9L139.1 123.1L146.1 122.5L148.9 125.1L155.5 118.9" fill="none" stroke="#4a90ea" stroke-width="0.3" opacity="0.5" stroke-linejoin="round"/>
<path d="M15.1 124.5L20.3 115.6L30.7 117.1L37.4 128.7L49.3 126.7L52.6 121.5L58.6 125.5L64.6 124.8L70.8 128.4L84.5 119.2L98.7 116.0L105.0 125.2L113.8 120.0L124.5 124.6L131.1 124.7L138.4 124.1L144.7 121.3L149.2 127.6L154.0 120.0" fill="none" stroke="#4a90ea" stroke-width="0.3" opacity="0.5" stroke-linejoin="round"/>
<path d="M16.6 129.5L20.7 115.6L30.9 121.8L39.0 127.8L47.7 128.7L53.4 115.6L57.8 124.7L66.8 127.0L70.4 124.9L85.9 126.9L99.0 115.6L105.6 121.5L112.8 123.8L124.5 126.6L130.9 124.0L139.4 128.0L143.8 124.3L149.5 121.9L154.8 120.3" fill="none" stroke="#4a90ea" stroke-width="0.3" opacity="0.5" stroke-linejoin="round"/>
<path d="M15.8 125.9L20.5 116.9L29.8 121.0L39.0 122.6L47.8 125.4L52.9 116.5L57.5 127.0L65.6 124.8L72.3 124.6L84.4 124.7L98.3 117.2L106.2 124.2L113.5 121.3L122.6 124.8L132.1 124.9L139.5 126.7L144.6 120.7L149.5 123.9L154.5 118.8" fill="none" stroke="#4a90ea" stroke-width="0.3" opacity="0.5" stroke-linejoin="round"/>
<path d="M14.9 125.6L20.0 116.2L29.6 127.1L37.3 127.7L47.1 127.9L52.9 117.6L57.7 125.4L65.2 125.1L71.1 128.0L84.0 123.5L97.9 115.6L105.7 127.6L113.5 122.6L122.9 127.5L132.1 120.8L138.0 121.8L145.2 122.7L151.1 125.1L155.6 119.7" fill="none" stroke="#4a90ea" stroke-width="0.3" opacity="0.5" stroke-linejoin="round"/>
<path d="M20.4 117.7L26.7 116.0L32.5 115.6L38.3 129.3" fill="none" stroke="#5a9aea" stroke-width="0.35" opacity="0.6" stroke-linejoin="round"/>
<path d="M25.0 117.7L25.0 129.3" fill="none" stroke="#9ac0f0" stroke-width="0.3" opacity="0.5" stroke-linejoin="round"/>
<path d="M32.5 115.6L32.5 129.3" fill="none" stroke="#9ac0f0" stroke-width="0.3" opacity="0.5" stroke-linejoin="round"/>
<rect x="12.9" y="132.2" width="145.8" height="37.9" fill="#f3f2f3"/>
<ellipse cx="17.9" cy="140.8" rx="3.1" ry="4.5" fill="#b888aa" opacity=".85" transform="rotate(-25 17.9 140.8)"/>
<rect x="23.8" y="134.8" width="10.0" height="12.1" fill="#16e016"/>
<ellipse cx="28.8" cy="141.3" rx="3.6" ry="3.7" fill="#f47ce0" transform="rotate(17 28.8 140.8)"/>
<ellipse cx="40.8" cy="140.8" rx="4.8" ry="4.5" fill="#b07aa0" opacity=".85" transform="rotate(-19 40.8 140.8)"/>
<rect x="47.9" y="134.8" width="13.8" height="12.1" fill="#16e016"/>
<ellipse cx="54.8" cy="141.3" rx="5.0" ry="3.7" fill="#f47ce0" transform="rotate(11 54.8 140.8)"/>
<ellipse cx="70.2" cy="140.8" rx="6.0" ry="4.5" fill="#a878a0" opacity=".85" transform="rotate(-13 70.2 140.8)"/>
<rect x="78.8" y="134.8" width="16.2" height="12.1" fill="#16e016"/>
<ellipse cx="86.9" cy="141.3" rx="5.8" ry="3.7" fill="#f47ce0" transform="rotate(5 86.9 140.8)"/>
<ellipse cx="100.2" cy="140.8" rx="3.2" ry="4.5" fill="#c49ab8" opacity=".85" transform="rotate(-7 100.2 140.8)"/>
<rect x="105.0" y="134.8" width="8.8" height="12.1" fill="#16e016"/>
<ellipse cx="109.4" cy="141.3" rx="3.1" ry="3.7" fill="#f47ce0" transform="rotate(-1 109.4 140.8)"/>
<ellipse cx="121.9" cy="140.8" rx="5.3" ry="4.5" fill="#c8a0c0" opacity=".85" transform="rotate(-1 121.9 140.8)"/>
<rect x="129.2" y="134.8" width="15.0" height="12.1" fill="#16e016"/>
<ellipse cx="136.7" cy="141.3" rx="5.4" ry="3.7" fill="#f47ce0" transform="rotate(-7 136.7 140.8)"/>
<ellipse cx="19.8" cy="153.5" rx="5.3" ry="4.3" fill="#8a4a78" opacity=".85" transform="rotate(-25 19.8 153.5)"/>
<rect x="27.1" y="147.7" width="13.8" height="11.7" fill="#16e016"/>
<ellipse cx="34.0" cy="154.0" rx="5.0" ry="3.6" fill="#f47ce0" transform="rotate(17 34.0 153.5)"/>
<ellipse cx="45.8" cy="153.5" rx="3.4" ry="4.3" fill="#c4a0bc" opacity=".85" transform="rotate(-19 45.8 153.5)"/>
<ellipse cx="57.1" cy="153.5" rx="3.4" ry="4.3" fill="#c8a0c0" opacity=".85" transform="rotate(-16 57.1 153.5)"/>
<rect x="62.1" y="147.7" width="20.8" height="11.7" fill="#16e016"/>
<ellipse cx="67.8" cy="153.5" rx="3.7" ry="4.2" fill="#f47ce0"/><ellipse cx="77.7" cy="153.5" rx="3.7" ry="4.2" fill="#f47ce0"/>
<ellipse cx="89.4" cy="153.5" rx="4.6" ry="4.3" fill="#b888aa" opacity=".85" transform="rotate(-10 89.4 153.5)"/>
<rect x="95.8" y="147.7" width="12.9" height="11.7" fill="#16e016"/>
<ellipse cx="102.3" cy="154.0" rx="4.6" ry="3.6" fill="#f47ce0" transform="rotate(2 102.3 153.5)"/>
<ellipse cx="117.7" cy="153.5" rx="6.0" ry="4.3" fill="#b07aa0" opacity=".85" transform="rotate(-4 117.7 153.5)"/>
<rect x="125.8" y="147.7" width="17.1" height="11.7" fill="#16e016"/>
<ellipse cx="134.4" cy="154.0" rx="6.1" ry="3.6" fill="#f47ce0" transform="rotate(-4 134.4 153.5)"/>
<ellipse cx="23.8" cy="164.9" rx="6.5" ry="3.6" fill="#b48aa8" opacity=".85" transform="rotate(-25 23.8 164.9)"/>
<rect x="33.3" y="160.0" width="20.4" height="9.8" fill="#16e016"/>
<ellipse cx="43.5" cy="165.3" rx="7.4" ry="3.0" fill="#f47ce0" transform="rotate(17 43.5 164.9)"/>
<ellipse cx="62.5" cy="164.9" rx="6.1" ry="3.6" fill="#9a5a88" opacity=".85" transform="rotate(-19 62.5 164.9)"/>
<rect x="71.2" y="160.0" width="17.5" height="9.8" fill="#16e016"/>
<ellipse cx="80.0" cy="165.3" rx="6.3" ry="3.0" fill="#f47ce0" transform="rotate(11 80.0 164.9)"/>
<ellipse cx="98.8" cy="164.9" rx="3.1" ry="3.6" fill="#8a4a78" opacity=".85" transform="rotate(-13 98.8 164.9)"/>
<rect x="103.2" y="160.0" width="13.5" height="9.8" fill="#16e016"/>
<ellipse cx="109.9" cy="165.3" rx="4.9" ry="3.0" fill="#f47ce0" transform="rotate(5 109.9 164.9)"/>
<ellipse cx="124.2" cy="164.9" rx="4.8" ry="3.6" fill="#c4a0bc" opacity=".85" transform="rotate(-7 124.2 164.9)"/>
<rect x="131.7" y="160.0" width="14.2" height="9.8" fill="#16e016"/>
<ellipse cx="138.8" cy="165.3" rx="5.1" ry="3.0" fill="#f47ce0" transform="rotate(-1 138.8 164.9)"/>
<rect x="27.9" y="132.2" width="15.0" height="2.0" fill="#16e016"/>
<rect x="60.7" y="132.2" width="17.2" height="2.0" fill="#16e016"/>
<rect x="96.2" y="132.2" width="17.5" height="2.0" fill="#16e016"/>
<rect x="128.8" y="132.2" width="14.2" height="2.0" fill="#16e016"/>
<rect x="15.0" y="132.7" width="6.7" height="1.2" fill="#d8a8c8" opacity=".7"/>
<rect x="48.3" y="132.7" width="9.2" height="1.2" fill="#d8a8c8" opacity=".7"/>
<rect x="80.0" y="132.7" width="13.3" height="1.2" fill="#d8a8c8" opacity=".7"/>
<rect x="116.7" y="132.7" width="6.7" height="1.2" fill="#d8a8c8" opacity=".7"/>
<rect x="157.3" y="156.0" width="0.7" height="3.3" fill="#bbb"/>
<rect x="194.9" y="75.8" width="183.0" height="101.0" fill="#202124"/>
<rect x="194.9" y="75.8" width="183.0" height="3.2" fill="#f4f4f4"/>
<rect x="194.9" y="79.0" width="183.0" height="4.0" fill="#c9cdd4"/>
<rect x="194.9" y="83.0" width="183.0" height="4.0" fill="#f7f7f8"/>
<rect x="196.5" y="77.0" width="24.1" height="1.0" fill="#555"/>
<rect x="226.1" y="77.0" width="1.6" height="1.0" fill="#e8b040"/>
<rect x="230.2" y="77.0" width="1.0" height="1.0" fill="#555"/>
<rect x="233.6" y="77.0" width="1.0" height="1.0" fill="#555"/>
<rect x="195.7" y="79.8" width="19.0" height="2.4" fill="#b8bcc4"/>
<rect x="216.1" y="79.8" width="20.0" height="2.4" fill="#e8eaee"/>
<rect x="218.5" y="80.6" width="12.0" height="0.8" fill="#888"/>
<rect x="233.6" y="80.6" width="1.2" height="0.8" fill="#e04030"/>
<rect x="196.5" y="84.4" width="1.6" height="1.0" fill="#666"/>
<rect x="201.5" y="84.4" width="36.1" height="1.0" fill="#888"/>
<rect x="358.9" y="84.2" width="1.8" height="1.6" fill="#777"/>
<rect x="361.9" y="84.2" width="1.8" height="1.6" fill="#777"/>
<rect x="365.9" y="84.2" width="1.8" height="1.6" fill="#777"/>
<rect x="369.9" y="84.2" width="1.8" height="1.6" fill="#777"/>
<rect x="373.3" y="84.2" width="1.8" height="1.6" fill="#777"/>
<rect x="363.9" y="80.2" width="1.2" height="1.2" fill="#444"/>
<rect x="372.9" y="77.4" width="3.2" height="1.0" fill="#8ab4f8"/>
<rect x="194.9" y="87.0" width="183.0" height="7.6" fill="#2b2d30"/>
<rect x="198.1" y="90.2" width="21.1" height="1.2" fill="#ddd"/>
<rect x="194.9" y="96.8" width="131.5" height="75.8" fill="#f8f4f6"/>
<rect x="194.9" y="96.8" width="131.5" height="5.4" fill="#177a6a"/>
<rect x="256.6" y="98.8" width="8.0" height="1.0" fill="#7cc8b8"/>
<rect x="296.7" y="98.8" width="8.0" height="1.0" fill="#9ad8c8"/>
<rect x="306.7" y="98.2" width="10.0" height="2.0" fill="#d8efe8"/>
<rect x="197.5" y="98.2" width="6.0" height="1.2" fill="#7cc8b8"/>
<rect x="194.9" y="102.2" width="131.5" height="7.0" fill="#f3f3f3"/>
<rect x="197.5" y="103.4" width="4.4" height="1.6" fill="#c33" opacity=".7"/>
<rect x="196.9" y="106.3" width="8.0" height="0.8" fill="#999"/>
<rect x="208.5" y="103.4" width="4.4" height="1.6" fill="#2a7" opacity=".7"/>
<rect x="207.9" y="106.3" width="8.0" height="0.8" fill="#999"/>
<rect x="215.5" y="103.4" width="4.4" height="1.6" fill="#666" opacity=".7"/>
<rect x="214.9" y="106.3" width="8.0" height="0.8" fill="#999"/>
<rect x="230.6" y="103.4" width="4.4" height="1.6" fill="#888" opacity=".7"/>
<rect x="230.0" y="106.3" width="8.0" height="0.8" fill="#999"/>
<rect x="238.6" y="103.4" width="4.4" height="1.6" fill="#2a7" opacity=".7"/>
<rect x="238.0" y="106.3" width="8.0" height="0.8" fill="#999"/>
<rect x="246.6" y="103.4" width="4.4" height="1.6" fill="#888" opacity=".7"/>
<rect x="246.0" y="106.3" width="8.0" height="0.8" fill="#999"/>
<rect x="260.6" y="103.4" width="4.4" height="1.6" fill="#c84" opacity=".7"/>
<rect x="260.0" y="106.3" width="8.0" height="0.8" fill="#999"/>
<rect x="268.6" y="103.4" width="4.4" height="1.6" fill="#2a7" opacity=".7"/>
<rect x="268.0" y="106.3" width="8.0" height="0.8" fill="#999"/>
<rect x="194.9" y="109.3" width="32.1" height="59.1" fill="#f0f0f0"/>
<rect x="194.9" y="109.3" width="32.1" height="2.4" fill="#e4e4e4"/>
<rect x="196.1" y="117.3" width="8.0" height="8.8" fill="#fff" stroke="#bbb" stroke-width=".2"/>
<rect x="196.5" y="120.9" width="7.2" height="4.4" fill="#444"/>
<rect x="196.9" y="126.9" width="6.0" height="0.8" fill="#999"/>
<rect x="205.5" y="117.3" width="8.0" height="8.8" fill="#fff" stroke="#bbb" stroke-width=".2"/>
<rect x="205.9" y="120.9" width="7.2" height="4.4" fill="#888"/>
<rect x="206.3" y="126.9" width="6.0" height="0.8" fill="#999"/>
<rect x="215.5" y="117.3" width="8.0" height="8.8" fill="#fff" stroke="#bbb" stroke-width=".2"/>
<rect x="215.9" y="120.9" width="7.2" height="4.4" fill="#444"/>
<rect x="216.3" y="126.9" width="6.0" height="0.8" fill="#999"/>
<rect x="196.1" y="132.3" width="8.0" height="8.8" fill="#fff" stroke="#bbb" stroke-width=".2"/>
<rect x="196.5" y="135.9" width="7.2" height="4.4" fill="#444"/>
<rect x="196.9" y="141.9" width="6.0" height="0.8" fill="#999"/>
<rect x="205.5" y="132.3" width="8.0" height="8.8" fill="#fff" stroke="#bbb" stroke-width=".2"/>
<rect x="205.9" y="135.9" width="7.2" height="4.4" fill="#444"/>
<rect x="206.3" y="141.9" width="6.0" height="0.8" fill="#999"/>
<rect x="215.5" y="132.3" width="8.0" height="8.8" fill="#fff" stroke="#bbb" stroke-width=".2"/>
<rect x="215.9" y="135.9" width="7.2" height="4.4" fill="#444"/>
<rect x="216.3" y="141.9" width="6.0" height="0.8" fill="#999"/>
<rect x="196.1" y="143.3" width="8.0" height="4.0" fill="#fff" stroke="#bbb" stroke-width=".2"/>
<rect x="205.5" y="143.3" width="8.0" height="4.0" fill="#fff" stroke="#bbb" stroke-width=".2"/>
<rect x="215.5" y="143.3" width="8.0" height="4.0" fill="#fff" stroke="#bbb" stroke-width=".2"/>
<rect x="227.7" y="155.4" width="2.8" height="10.0" fill="#d8d8d8"/>
<rect x="316.8" y="154.4" width="9.0" height="12.0" fill="#c8c8c8" opacity=".8"/>
<path d="M238.6 109.9l8.0 8.0v10.0l-10.0 8.0h-8.0M258.6 109.9l6.0 10.0h24.1l10.0-8.0h12.0M228.5 140.3h12.0l8.0 12.0" fill="none" stroke="#8a7ad0" stroke-width=".35"/>
<path d="M254.6 109.9c-2.0 16.0 2.0 34.1 -6.0 58.1M230.6 120.3c4.0 12.0 2.0 24.1 8.0 40.1" fill="none" stroke="#d898b8" stroke-width=".8" opacity=".8"/>
<path d="M260.6 133.3c5.0-2.0 11.0 1.0 14.0 7.0c2.0 5.0-1.0 11.0-6.0 11.6c-5.0 0.6-9.0-3.0-10.4-9.0c-1.0-4.0-1.0-8.0 2.4-9.6z" fill="#5a3a88" stroke="#f0c020" stroke-width=".6"/>
<ellipse cx="272.7" cy="131.3" rx="3" ry="1.200" fill="#c88ab0"/>
<ellipse cx="271.1" cy="156.3" rx="1.5" ry="1.0" fill="#2a1a22" opacity=".85"/>
<ellipse cx="291.3" cy="158.9" rx="1.6" ry="1.4" fill="#2a1a22" opacity=".85"/>
<ellipse cx="324.2" cy="138.9" rx="1.0" ry="0.6" fill="#3a2030" opacity=".85"/>
<ellipse cx="311.4" cy="138.0" rx="1.2" ry="1.1" fill="#6a3a5a" opacity=".85"/>
<ellipse cx="318.7" cy="157.2" rx="0.8" ry="0.7" fill="#6a3a5a" opacity=".85"/>
<ellipse cx="318.1" cy="159.8" rx="0.9" ry="0.5" fill="#2a1a22" opacity=".85"/>
<ellipse cx="315.3" cy="155.1" rx="1.0" ry="0.5" fill="#6a3a5a" opacity=".85"/>
<ellipse cx="318.1" cy="135.8" rx="1.7" ry="0.9" fill="#2a1a22" opacity=".85"/>
<ellipse cx="316.7" cy="157.1" rx="0.5" ry="0.3" fill="#2a1a22" opacity=".85"/>
<ellipse cx="282.2" cy="162.2" rx="1.1" ry="0.8" fill="#3a2030" opacity=".85"/>
<ellipse cx="315.3" cy="112.7" rx="1.2" ry="1.2" fill="#3a2030" opacity=".85"/>
<ellipse cx="242.2" cy="158.1" rx="1.3" ry="1.2" fill="#3a2030" opacity=".85"/>
<ellipse cx="288.7" cy="154.8" rx="1.5" ry="1.5" fill="#6a3a5a" opacity=".85"/>
<ellipse cx="314.5" cy="111.2" rx="0.9" ry="0.7" fill="#d8a0c0" opacity=".85"/>
<ellipse cx="246.1" cy="159.1" rx="1.5" ry="1.0" fill="#d8a0c0" opacity=".85"/>
<ellipse cx="302.5" cy="138.7" rx="1.4" ry="1.3" fill="#6a3a5a" opacity=".85"/>
<ellipse cx="309.3" cy="116.4" rx="1.0" ry="0.9" fill="#1a1218" opacity=".85"/>
<ellipse cx="305.0" cy="125.6" rx="0.6" ry="0.5" fill="#6a3a5a" opacity=".85"/>
<ellipse cx="281.9" cy="164.0" rx="0.8" ry="0.6" fill="#2a1a22" opacity=".85"/>
<ellipse cx="324.7" cy="122.1" rx="0.9" ry="0.6" fill="#d8a0c0" opacity=".85"/>
<ellipse cx="253.5" cy="165.9" rx="0.8" ry="0.8" fill="#2a1a22" opacity=".85"/>
<ellipse cx="261.5" cy="156.6" rx="0.6" ry="0.3" fill="#3a2030" opacity=".85"/>
<ellipse cx="302.8" cy="121.7" rx="1.2" ry="0.8" fill="#1a1218" opacity=".85"/>
<ellipse cx="262.8" cy="167.5" rx="1.4" ry="1.2" fill="#1a1218" opacity=".85"/>
<ellipse cx="309.8" cy="131.3" rx="1.4" ry="1.1" fill="#6a3a5a" opacity=".85"/>
<ellipse cx="296.4" cy="158.1" rx="1.2" ry="0.9" fill="#d8a0c0" opacity=".85"/>
<ellipse cx="298.1" cy="126.0" rx="0.7" ry="0.4" fill="#2a1a22" opacity=".85"/>
<ellipse cx="313.5" cy="157.1" rx="1.1" ry="0.8" fill="#d8a0c0" opacity=".85"/>
<ellipse cx="301.7" cy="124.6" rx="1.6" ry="0.9" fill="#d8a0c0" opacity=".85"/>
<ellipse cx="289.2" cy="162.3" rx="1.0" ry="0.8" fill="#1a1218" opacity=".85"/>
<ellipse cx="317.9" cy="155.3" rx="1.3" ry="1.2" fill="#d8a0c0" opacity=".85"/>
<ellipse cx="303.2" cy="114.1" rx="0.6" ry="0.5" fill="#6a3a5a" opacity=".85"/>
<ellipse cx="294.1" cy="155.1" rx="1.2" ry="0.8" fill="#1a1218" opacity=".85"/>
<ellipse cx="270.9" cy="167.5" rx="1.2" ry="1.1" fill="#6a3a5a" opacity=".85"/>
<ellipse cx="314.1" cy="128.6" rx="1.3" ry="1.0" fill="#6a3a5a" opacity=".85"/>
<ellipse cx="297.7" cy="132.8" rx="0.6" ry="0.4" fill="#2a1a22" opacity=".85"/>
<ellipse cx="285.3" cy="154.7" rx="1.4" ry="0.8" fill="#1a1218" opacity=".85"/>
<ellipse cx="310.2" cy="123.6" rx="0.7" ry="0.7" fill="#6a3a5a" opacity=".85"/>
<ellipse cx="247.8" cy="159.1" rx="0.8" ry="0.5" fill="#3a2030" opacity=".85"/>
<ellipse cx="299.9" cy="113.5" rx="1.6" ry="1.1" fill="#2a1a22" opacity=".85"/>
<ellipse cx="279.3" cy="161.5" rx="0.9" ry="0.6" fill="#2a1a22" opacity=".85"/>
<ellipse cx="311.8" cy="115.9" rx="1.0" ry="0.5" fill="#d8a0c0" opacity=".85"/>
<ellipse cx="320.0" cy="111.6" rx="0.8" ry="0.6" fill="#1a1218" opacity=".85"/>
<ellipse cx="298.4" cy="118.2" rx="0.9" ry="0.8" fill="#3a2030" opacity=".85"/>
<ellipse cx="317.2" cy="167.1" rx="1.6" ry="1.5" fill="#1a1218" opacity=".85"/>
<ellipse cx="305.9" cy="117.4" rx="1.2" ry="1.0" fill="#6a3a5a" opacity=".85"/>
<ellipse cx="316.4" cy="160.2" rx="0.6" ry="0.4" fill="#1a1218" opacity=".85"/>
<ellipse cx="288.1" cy="160.4" rx="0.7" ry="0.4" fill="#6a3a5a" opacity=".85"/>
<ellipse cx="305.9" cy="110.7" rx="0.8" ry="0.6" fill="#1a1218" opacity=".85"/>
<ellipse cx="314.9" cy="120.2" rx="1.0" ry="0.8" fill="#d8a0c0" opacity=".85"/>
<ellipse cx="297.0" cy="159.6" rx="1.3" ry="0.7" fill="#1a1218" opacity=".85"/>
<ellipse cx="275.4" cy="157.5" rx="1.4" ry="1.0" fill="#d8a0c0" opacity=".85"/>
<ellipse cx="238.9" cy="166.9" rx="0.7" ry="0.4" fill="#3a2030" opacity=".85"/>
<ellipse cx="242.2" cy="156.4" rx="0.7" ry="0.5" fill="#2a1a22" opacity=".85"/>
<ellipse cx="273.8" cy="165.8" rx="1.0" ry="0.7" fill="#d8a0c0" opacity=".85"/>
<ellipse cx="316.8" cy="120.8" rx="0.8" ry="0.8" fill="#1a1218" opacity=".85"/>
<ellipse cx="308.3" cy="165.0" rx="0.7" ry="0.4" fill="#3a2030" opacity=".85"/>
<ellipse cx="240.3" cy="160.9" rx="1.5" ry="1.5" fill="#6a3a5a" opacity=".85"/>
<ellipse cx="262.4" cy="156.3" rx="1.0" ry="0.6" fill="#3a2030" opacity=".85"/>
<ellipse cx="316.4" cy="132.5" rx="0.6" ry="0.5" fill="#1a1218" opacity=".85"/>
<ellipse cx="302.1" cy="133.6" rx="1.3" ry="0.9" fill="#2a1a22" opacity=".85"/>
<ellipse cx="318.5" cy="114.0" rx="1.0" ry="0.6" fill="#d8a0c0" opacity=".85"/>
<ellipse cx="275.5" cy="165.9" rx="1.7" ry="1.3" fill="#1a1218" opacity=".85"/>
<ellipse cx="320.2" cy="122.0" rx="1.1" ry="0.8" fill="#3a2030" opacity=".85"/>
<ellipse cx="322.7" cy="155.5" rx="0.9" ry="0.8" fill="#3a2030" opacity=".85"/>
<ellipse cx="254.8" cy="161.6" rx="1.6" ry="1.1" fill="#d8a0c0" opacity=".85"/>
<ellipse cx="325.7" cy="110.7" rx="1.4" ry="1.1" fill="#d8a0c0" opacity=".85"/>
<ellipse cx="320.9" cy="118.5" rx="0.7" ry="0.5" fill="#1a1218" opacity=".85"/>
<ellipse cx="320.6" cy="117.3" rx="1.1" ry="0.7" fill="#2a1a22" opacity=".85"/>
<ellipse cx="315.6" cy="164.1" rx="1.3" ry="1.2" fill="#d8a0c0" opacity=".85"/>
<rect x="194.9" y="168.4" width="131.5" height="4.2" fill="#1c2a3a"/>
<rect x="216.5" y="169.6" width="1.8" height="1.8" fill="#3a8ee8"/>
<rect x="220.3" y="169.6" width="1.8" height="1.8" fill="#e8b040"/>
<rect x="224.1" y="169.6" width="1.8" height="1.8" fill="#e85030"/>
<rect x="227.9" y="169.6" width="1.8" height="1.8" fill="#38a858"/>
<rect x="231.8" y="169.6" width="1.8" height="1.8" fill="#3a8ee8"/>
<rect x="235.6" y="169.6" width="1.8" height="1.8" fill="#e85030"/>
<rect x="239.4" y="169.6" width="1.8" height="1.8" fill="#8a5ad8"/>
<rect x="243.2" y="169.6" width="1.8" height="1.8" fill="#3a8ee8"/>
<rect x="247.0" y="169.6" width="1.8" height="1.8" fill="#e8b040"/>
<rect x="250.8" y="169.6" width="1.8" height="1.8" fill="#e04030"/>
<rect x="197.5" y="169.8" width="2.0" height="1.6" fill="#ddd"/>
<rect x="277.7" y="170.0" width="1.6" height="1.2" fill="#aaa"/>
<rect x="288.7" y="170.0" width="12.0" height="1.2" fill="#889"/>
<rect x="314.8" y="170.0" width="8.0" height="1.2" fill="#889"/>
<rect x="328.2" y="95.0" width="23.7" height="18.4" rx=".8" fill="#b8c0c4"/>
<rect x="354.3" y="95.0" width="23.7" height="18.4" rx=".8" fill="#dcd4cc"/>
<rect x="328.2" y="115.3" width="23.7" height="18.4" rx=".8" fill="#d4cab8"/>
<rect x="354.3" y="115.3" width="23.7" height="18.4" rx=".8" fill="#3c4043"/>
<rect x="328.2" y="135.5" width="23.7" height="18.4" rx=".8" fill="#3c4043"/>
<rect x="354.3" y="135.5" width="23.7" height="18.4" rx=".8" fill="#a8a098"/>
<rect x="336.0" y="155.8" width="33.7" height="18.4" rx=".8" fill="#b4b8bc"/>
<rect x="328.2" y="95.0" width="23.7" height="18.4" rx=".8" fill="none" stroke="#6ea0f0" stroke-width=".5"/>
<ellipse cx="340.2" cy="105.3" rx="2.2" ry="2.8" fill="#a88068"/><path d="M337.9 104.5a2.3 2.6 0 0 1 4.6 0z" fill="#2a2a2a"/><path d="M335.2 112.3c0-3.5 2.0-4.5 5.0-4.5s5.0 1.0 5.0 4.5z" fill="#3a4456"/>
<ellipse cx="366.1" cy="104.3" rx="2.5" ry="3.2" fill="#e6c3a8"/><path d="M363.4 103.3a2.6 3.0 0 0 1 5.3 0z" fill="#e9d39a"/><path d="M360.3 112.3c0-4.0 2.3-5.2 5.8-5.2s5.8 1.1 5.8 5.2z" fill="#f4f1ee"/>
<ellipse cx="342.4" cy="126.3" rx="2.2" ry="2.8" fill="#d9ac90"/><path d="M340.1 125.5a2.3 2.6 0 0 1 4.6 0z" fill="#b98a50"/><path d="M337.4 133.3c0-3.5 2.0-4.5 5.0-4.5s5.0 1.0 5.0 4.5z" fill="#5f88c0"/>
<rect x="354.3" y="135.5" width="23.7" height="8.0" fill="#d8d4d0"/>
<rect x="355.9" y="143.3" width="10.0" height="8.0" fill="#2a2624"/>
<rect x="366.9" y="140.3" width="8.0" height="10.0" fill="#e8e4e0"/>
<ellipse cx="346.2" cy="164.0" rx="2.0" ry="2.5" fill="#c09070"/><path d="M344.2 163.3a2.1 2.3 0 0 1 4.1 0z" fill="#1a1410"/><path d="M341.7 170.3c0-3.1 1.8-4.0 4.5-4.0s4.5 0.9 4.5 4.0z" fill="#e8e8e8"/>
<ellipse cx="351.2" cy="167.4" rx="2.0" ry="2.5" fill="#d0a888"/><path d="M349.2 166.7a2.1 2.3 0 0 1 4.1 0z" fill="#888"/><path d="M346.7 173.7c0-3.1 1.8-4.0 4.5-4.0s4.5 0.9 4.5 4.0z" fill="#dcdcdc"/>
<rect x="354.9" y="157.4" width="8.0" height="5.0" fill="#6a645c"/>
<circle cx="365.5" cy="124.3" r="3.600" fill="#0f9d8c"/><text x="365.5" y="125.7" font-family="Liberation Sans" font-size="3.600" fill="#fff" text-anchor="middle">K</text>
<circle cx="340.0" cy="144.3" r="3.600" fill="#f5821f"/><text x="340.0" y="145.7" font-family="Liberation Sans" font-size="3.600" fill="#fff" text-anchor="middle">F</text>
<rect x="329.8" y="111.3" width="10.0" height="0.8" fill="#e8e8e8"/>
<rect x="355.5" y="131.3" width="4.4" height="0.8" fill="#e8e8e8"/>
<rect x="329.8" y="151.6" width="8.8" height="0.8" fill="#e8e8e8"/>
<circle cx="350.0" cy="96.6" r="1.100" fill="#3b82f6"/>
</svg>
<div class="tc" style="top:18.700px;font-size:15.350px;line-height:18px">Geri plandaki önemli noktalar</div>
<div class="t" style="left:16.600px;top:181.600px;font-size:7.700px;line-height:9px;-webkit-text-stroke:.22px #000;white-space:normal;width:150px">Görüntü kalitesini düzenli inceleyen<br>algoritmanın hazır yapılmışı var. Bunu<br>entegre edecek python bilen var mı?</div>
<div class="t" style="left:186.300px;top:184.800px;width:200px;text-align:center;font-size:8.200px;line-height:9.350px;-webkit-text-stroke:.22px #000;white-space:normal">Patologdan önce ya da sonra tüm vakaları<br>gözden geçirtebilecek bir iş akışı ile hata<br>oranını sıfırlamak mümkün olabilir mi?</div><!--/S27--></div><svg class="abs" style="left:-2px;top:-2px" width="409" height="236" viewBox="-2 -2 409 236"><rect x=".4" y="1.1" width="404.100" height="229.800" rx="16.500" fill="none" stroke="#c4c7c5" stroke-width="1.400"/></svg></div>
<div class="num" style="left:972px;top:683.6px">27</div>
<div class="card" id="c28" style="left:1407px;top:439px"><div class="clip" style="clip-path:inset(0.4px 0 0.0px 0 round 16.5px)"><!--S28--><div class="tc" style="top:103.600px;font-size:19.750px;line-height:24px">Alalım mı Yapalım mı?</div>
<!--/S28--></div><svg class="abs" style="left:-2px;top:-2px" width="409" height="236" viewBox="-2 -2 409 236"><rect x=".4" y="1.1" width="404.100" height="229.800" rx="16.500" fill="none" stroke="#c4c7c5" stroke-width="1.400"/></svg></div>
<div class="num" style="left:1409px;top:683.6px">28</div>
<div class="card" id="c29" style="left:96px;top:729px"><div class="clip" style="clip-path:inset(0.0px 0 0.0px 0 round 16.5px)"><!--S29--><svg class="abs" style="left:0;top:0" width="405" height="231" viewBox="0 0 405 231">
<defs><linearGradient id="desk" x1="0" y1="0" x2="0" y2="1"><stop offset="0" stop-color="#5e5d5c"/><stop offset="1" stop-color="#6a6968"/></linearGradient><linearGradient id="scr" x1="0" x2="1"><stop offset="0" stop-color="#b9cdbb"/><stop offset="1" stop-color="#c6d8c6"/></linearGradient></defs>
<rect x="6.4" y="54.5" width="179.0" height="153.4" fill="#fdfdfd"/>
<rect x="6.4" y="96.2" width="179.0" height="33.1" fill="#f2f2f2"/>
<path d="M48.1 84.2L62.1 92.2L75.2 85.2L61.1 78.2z" fill="#1e1e24"/>
<path d="M50.1 75.2L61.1 81.2L61.1 89.2L50.1 83.6z" fill="#8a8478"/>
<path d="M61.1 81.2L72.2 75.6L72.2 83.6L61.1 89.2z" fill="#b8b4ac"/>
<path d="M50.1 75.2L61.1 69.6L72.2 75.6L61.1 81.2z" fill="#d4d2cc"/>
<rect x="55.7" y="62.1" width="6.0" height="10.0" fill="#3a3a40"/>
<rect x="54.5" y="67.2" width="8.4" height="2.4" fill="#6a6a70"/>
<rect x="52.1" y="80.2" width="7.0" height="3.6" fill="#b08a3a" opacity=".8"/>
<rect x="63.2" y="80.8" width="6.0" height="2.8" fill="#7a6a4a" opacity=".8"/>
<path d="M78.6 81.4L93.3 89.9L107.0 82.5L92.3 75.1z" fill="#1e1e24"/>
<path d="M80.7 72.0L92.3 78.3L92.3 86.7L80.7 80.8z" fill="#8a8478"/>
<path d="M92.3 78.3L103.8 72.4L103.8 80.8L92.3 86.7z" fill="#b8b4ac"/>
<path d="M80.7 72.0L92.3 66.1L103.8 72.4L92.3 78.3z" fill="#d4d2cc"/>
<rect x="86.6" y="58.3" width="6.3" height="10.5" fill="#3a3a40"/>
<rect x="85.3" y="63.6" width="8.8" height="2.5" fill="#6a6a70"/>
<rect x="82.8" y="77.2" width="7.4" height="3.8" fill="#b08a3a" opacity=".8"/>
<rect x="94.4" y="77.9" width="6.3" height="2.9" fill="#7a6a4a" opacity=".8"/>
<path d="M108.3 82.2L122.3 90.2L135.3 83.2L121.3 76.2z" fill="#1e1e24"/>
<path d="M110.3 73.2L121.3 79.2L121.3 87.2L110.3 81.6z" fill="#8a8478"/>
<path d="M121.3 79.2L132.3 73.6L132.3 81.6L121.3 87.2z" fill="#b8b4ac"/>
<path d="M110.3 73.2L121.3 67.6L132.3 73.6L121.3 79.2z" fill="#d4d2cc"/>
<rect x="115.9" y="60.1" width="6.0" height="10.0" fill="#3a3a40"/>
<rect x="114.7" y="65.2" width="8.4" height="2.4" fill="#6a6a70"/>
<rect x="112.3" y="78.2" width="7.0" height="3.6" fill="#b08a3a" opacity=".8"/>
<rect x="123.3" y="78.8" width="6.0" height="2.8" fill="#7a6a4a" opacity=".8"/>
<path d="M76.2 68.2l12.0-8.0M104.3 66.2v-10.0" stroke="#777" stroke-width=".5"/>
<rect x="9.2" y="101.8" width="174.4" height="1.0" fill="#555" opacity=".6"/>
<rect x="9.2" y="105.1" width="158.4" height="1.0" fill="#555" opacity=".6"/>
<rect x="9.2" y="112.7" width="117.3" height="1.0" fill="#555" opacity=".6"/>
<rect x="9.2" y="119.9" width="168.0" height="1.0" fill="#555" opacity=".6"/>
<rect x="9.2" y="123.3" width="26.1" height="1.0" fill="#555" opacity=".6"/>
<rect x="21.7" y="129.9" width="104.3" height="78.0" fill="#c9cbc8"/>
<rect x="21.7" y="129.9" width="47.1" height="42.1" fill="#dedfdc"/>
<rect x="68.8" y="129.9" width="57.1" height="30.1" fill="#8a9898"/>
<rect x="84.2" y="132.3" width="14.0" height="24.1" fill="#aab8b8"/>
<rect x="101.2" y="132.3" width="12.0" height="24.1" fill="#6a7878"/>
<rect x="115.3" y="132.3" width="10.6" height="26.1" fill="#c8c0a0"/>
<rect x="68.8" y="129.9" width="2.0" height="30.1" fill="#555"/>
<rect x="99.2" y="129.9" width="1.6" height="30.1" fill="#444"/>
<rect x="84.2" y="158.4" width="41.7" height="8.0" fill="#a89878"/>
<path d="M28.1 192.5L66.2 178.4L112.3 172.4L125.9 175.4L125.9 182.4L94.2 192.5L76.2 207.9L43.1 207.9z" fill="#d8b070"/>
<path d="M21.7 152.4L30.1 150.4L37.1 158.4L39.1 180.4L34.1 192.5L30.1 207.9L21.7 207.9z" fill="#5e5e5c"/>
<ellipse cx="25.7" cy="145.3" rx="4.4" ry="5.6" fill="#c8a080"/>
<path d="M21.7 139.3L30.1 140.3L30.5 145.3L26.1 142.3L21.7 144.3z" fill="#141210"/>
<path d="M24.1 166.4L37.1 163.4L38.1 168.4L25.1 171.4z" fill="#c8a080"/>
<path d="M104.3 170.4L114.3 165.4L125.9 168.4L125.9 198.5L112.3 200.5L108.3 188.5L96.2 186.4z" fill="#7e8288"/>
<ellipse cx="113.3" cy="161.4" rx="5.2" ry="6.4" fill="#d8a888"/>
<path d="M107.3 158.4L112.3 154.4L119.9 156.4L120.3 161.4L115.3 158.4L109.3 160.4z" fill="#3a2a20"/>
<path d="M96.2 185.4L108.3 180.4L112.3 186.4L100.2 190.5z" fill="#d8a888"/>
<path d="M57.1 172.4L66.2 167.4L79.2 169.4L82.2 176.4L66.2 180.4L58.1 178.4z" fill="#2a2c30"/>
<ellipse cx="69.2" cy="171.4" rx="4.8" ry="3.2" fill="#8a5a3a"/>
<path d="M51.1 189.5L66.2 185.4L70.2 197.5L55.1 202.5z" fill="#1a1c1e"/>
<path d="M53.7 190.5L65.2 187.4L67.8 195.5L56.7 199.1z" fill="#3a4038"/>
<path d="M55.1 202.5L70.2 197.5L84.2 200.5L66.2 207.9L52.1 207.9z" fill="#2a2a2c"/>
<rect x="84.2" y="176.4" width="12.0" height="10.0" fill="#9aa0a8" opacity=".9"/>
<rect x="70.2" y="189.5" width="6.0" height="4.0" fill="#7a5ad0"/>
<rect x="40.1" y="192.5" width="8.0" height="5.0" fill="#6a4ac0"/>
<rect x="94.2" y="170.4" width="10.0" height="6.0" fill="#b8bcc0"/>
<rect x="80.2" y="184.4" width="8.0" height="5.0" fill="#e8e8e0"/>
<path d="M104.3 196.5L120.3 192.5L125.9 200.5L125.9 207.9L108.3 207.9z" fill="#3a3a3c"/>
<rect x="184.8" y="63.2" width="201.1" height="112.7" fill="url(#desk)"/>
<rect x="184.8" y="63.2" width="201.1" height="30.1" fill="#4a4948"/>
<rect x="184.8" y="63.2" width="18.0" height="34.1" fill="#2a2a2c"/>
<rect x="340.8" y="63.2" width="45.1" height="24.1" fill="#5a5e5a"/>
<rect x="352.8" y="66.2" width="14.0" height="12.0" fill="#8a8a80"/>
<rect x="370.9" y="76.2" width="15.0" height="12.0" fill="#6a6e6a"/>
<rect x="360.9" y="80.2" width="8.0" height="5.0" fill="#b8a030"/>
<path d="M184.8 140.3L385.9 112.3L385.9 175.8L184.8 175.8z" fill="#6e6d6c"/>
<rect x="207.5" y="74.2" width="88.2" height="57.5" rx="1.500" fill="#1a1a1c"/>
<rect x="211.9" y="78.6" width="49.3" height="49.1" fill="url(#scr)"/>
<rect x="261.2" y="78.6" width="30.5" height="49.1" fill="#a8d8e4"/>
<rect x="277.7" y="78.6" width="14.0" height="24.1" fill="#6a7070"/>
<rect x="263.0" y="80.2" width="12.0" height="1.6" fill="#d8eef4"/>
<rect x="263.0" y="84.2" width="12.0" height="1.6" fill="#d8eef4"/>
<rect x="263.0" y="88.2" width="12.0" height="1.6" fill="#d8eef4"/>
<rect x="263.0" y="95.8" width="11.6" height="2.4" fill="#e8e040"/>
<rect x="263.0" y="100.6" width="11.6" height="2.0" fill="#e8e040"/>
<rect x="263.0" y="105.3" width="6.0" height="1.2" fill="#88b8c4"/>
<path d="M242.6 131.7L262.6 131.7L273.7 154.4L232.6 154.4z" fill="#1c1c1e"/>
<path d="M236.6 154.4L272.7 154.4L274.7 158.4L233.6 158.4z" fill="#2a2a2c"/>
<rect x="238.6" y="129.3" width="28.1" height="2.8" fill="#2e2e30"/>
<rect x="215.5" y="157.4" width="68.2" height="16.0" rx="2" fill="#28282a"/>
<rect x="216.1" y="158.0" width="67.0" height="4.4" fill="#3a3a3c"/>
<rect x="220.1" y="162.8" width="1.2" height="1.0" fill="#3aa8f0"/>
<rect x="222.1" y="162.8" width="1.2" height="1.0" fill="#3aa8f0"/>
<rect x="224.1" y="162.8" width="1.2" height="1.0" fill="#3aa8f0"/>
<rect x="226.1" y="162.8" width="1.2" height="1.0" fill="#3aa8f0"/>
<path d="M215.5 164.4c-12.0-2.0-26.1-12.0-30.1-24.1M207.5 120.3c-8.0 4.0-16.0 2.0-22.1-2.0M186.4 100.2c8.0 6.0 12.0 16.0 10.0 24.1" fill="none" stroke="#1a1a1c" stroke-width=".8"/>
<path d="M298.7 148.4L360.9 140.3L367.9 152.4L304.7 158.4z" fill="#e8e8e4"/>
<path d="M299.7 158.4L366.9 152.4L366.9 155.4L300.7 160.4z" fill="#1e1e20"/>
<rect x="301.7" y="104.3" width="60.1" height="40.1" fill="#8a8888" opacity=".55"/>
<path d="M300.7 102.2L356.9 96.2L362.9 100.2L304.7 107.3z" fill="#c8c8c4"/>
<path d="M300.7 122.3L358.9 117.3L363.9 122.3L303.7 128.3z" fill="#b8b8b4"/>
<rect x="301.7" y="104.3" width="2.8" height="46.1" fill="#a8a8a4"/>
<rect x="358.9" y="100.2" width="2.8" height="46.1" fill="#a8a8a4"/>
<rect x="320.8" y="106.3" width="24.1" height="14.0" fill="#d8d8d4"/>
<rect x="338.8" y="112.3" width="16.0" height="10.0" fill="#2a2a2c"/>
<rect x="323.8" y="70.2" width="16.0" height="32.1" fill="#4a4a4c"/>
<rect x="325.8" y="72.2" width="12.0" height="8.0" fill="#8a8a88"/>
<rect x="324.8" y="84.2" width="14.0" height="10.0" fill="#2e2e30"/>
<rect x="322.8" y="69.2" width="18.0" height="2.0" fill="#aaa"/>
<rect x="312.8" y="128.3" width="38.1" height="18.0" fill="#b82a20" opacity=".85"/>
<rect x="324.8" y="138.3" width="26.1" height="10.0" fill="#d83a28" opacity=".8"/>
<path d="M316.2 111.9c-3.3 9.0 14.1 23.8 30.8 29.0" fill="none" stroke="#d83020" stroke-width=".45"/>
<path d="M307.3 104.5c4.2 20.0 11.7 24.9 36.2 32.2" fill="none" stroke="#38a840" stroke-width=".45"/>
<path d="M311.3 107.8c-0.8 8.5 4.3 19.5 21.0 30.2" fill="none" stroke="#d83020" stroke-width=".45"/>
<path d="M306.7 105.7c-1.2 10.1 6.1 20.2 22.1 32.3" fill="none" stroke="#d83020" stroke-width=".45"/>
<path d="M306.9 111.4c5.6 16.9 14.9 24.3 34.2 29.7" fill="none" stroke="#e8e8e8" stroke-width=".45"/>
<path d="M306.7 110.3c4.6 13.6 10.4 19.9 38.0 32.1" fill="none" stroke="#38a840" stroke-width=".45"/>
<path d="M312.7 107.9c6.9 12.2 12.7 21.0 24.8 34.6" fill="none" stroke="#38a840" stroke-width=".45"/>
<path d="M314.5 110.9c6.5 15.4 13.3 19.7 20.5 36.9" fill="none" stroke="#d83020" stroke-width=".45"/>
<path d="M311.5 108.3c3.4 12.9 12.8 19.9 22.3 35.0" fill="none" stroke="#d83020" stroke-width=".45"/>
<path d="M314.2 107.0c-3.9 17.8 16.0 13.7 28.2 24.8" fill="none" stroke="#d83020" stroke-width=".45"/>
<path d="M307.5 111.3c-2.7 14.3 14.3 16.0 17.9 38.2" fill="none" stroke="#e8e8e8" stroke-width=".45"/>
<path d="M315.5 110.3c-3.3 12.4 7.0 12.4 15.3 25.1" fill="none" stroke="#d83020" stroke-width=".45"/>
<path d="M313.5 104.4c-0.9 17.8 5.9 15.0 31.4 30.2" fill="none" stroke="#d83020" stroke-width=".45"/>
<path d="M314.3 106.2c7.7 8.1 15.3 22.1 33.0 28.6" fill="none" stroke="#e8e8e8" stroke-width=".45"/>
<rect x="325.8" y="147.4" width="1.6" height="2.0" fill="#38b848"/>
<rect x="330.2" y="147.4" width="1.6" height="2.0" fill="#38b848"/>
<rect x="334.6" y="147.4" width="1.6" height="2.0" fill="#38b848"/>
<rect x="339.0" y="147.4" width="1.6" height="2.0" fill="#38b848"/>
<rect x="343.4" y="147.4" width="1.6" height="2.0" fill="#38b848"/>
<rect x="347.8" y="147.4" width="1.6" height="2.0" fill="#38b848"/>
<path d="M303.7 161.4L367.9 158.4L369.3 170.4L304.7 172.8z" fill="#d8b47a"/>
<path d="M324.8 164.0L345.8 163.0L346.2 167.6L325.2 168.4z" fill="#3a1a18"/>
<path d="M304.7 172.8L369.3 170.4L369.3 172.0L304.7 174.4z" fill="#a88850"/>
<rect x="259.0" y="68.6" width="52.5" height="1.8" fill="#e8e8e8" opacity=".7"/>
</svg>
<div class="t" style="left:21.400px;top:15.900px;line-height:17px;white-space:normal;width:330px">Octopi: Hedefe matuf sadre şifa bir örnek<br>“50 cent microscope” FoldScope ekibinden</div>
<div class="t" style="left:25.100px;top:213px;font-size:7.700px;line-height:9px;-webkit-text-stroke:.2px #000">Açık kaynak 250$ maliyetle periferik yaymadan malaria taraması</div><!--/S29--></div><svg class="abs" style="left:-2px;top:-2px" width="409" height="236" viewBox="-2 -2 409 236"><rect x=".4" y="0.5" width="404.100" height="229.800" rx="16.500" fill="none" stroke="#c4c7c5" stroke-width="1.400"/></svg></div>
<div class="num" style="left:98px;top:973px">29</div>
<div class="card" id="c30" style="left:533px;top:729px"><div class="clip" style="clip-path:inset(0.0px 0 0.0px 0 round 16.5px)"><!--S30--><svg class="abs" style="left:0;top:0" width="405" height="231" viewBox="0 0 405 231">
<defs><filter id="sh30" x="-10%" y="-10%" width="120%" height="130%"><feGaussianBlur stdDeviation=".7"/></filter></defs>
<rect x="73.6" y="49.3" width="219.1" height="7.2" fill="#f3f4f6" stroke="#d4d6da" stroke-width=".4"/>
<text x="74.2" y="53.9" font-family="Liberation Sans" font-size="2.9" font-weight="400" fill="#333" text-anchor="start" textLength="24.46" lengthAdjust="spacingAndGlyphs">qupath.github.io</text>
<path d="M288.1 51.3l.5 1.100 1.200.1-.9.8.3 1.200-1.100-.6-1.100.6.3-1.200-.9-.8 1.200-.1z" fill="#777"/>
<text x="87.8" y="76.4" font-family="Liberation Sans" font-size="6.7" font-weight="700" fill="#2a7cba" text-anchor="start">QuPath</text>
<text x="87.8" y="85.0" font-family="Liberation Sans" font-size="2.9" font-weight="400" fill="#888" text-anchor="start" textLength="37.09" lengthAdjust="spacingAndGlyphs">Quantitative Pathology &amp;</text>
<text x="87.8" y="89.6" font-family="Liberation Sans" font-size="2.9" font-weight="400" fill="#888" text-anchor="start" textLength="26.86" lengthAdjust="spacingAndGlyphs">Bioimage Analysis</text>
<path d="M91.2 117.3a28.1 22.1 0 0 1 55.1 0z" fill="#c6dcf2"/>
<path d="M101.2 117.3a19.0 14.0 0 0 1 37.1 0z" fill="#fefefe"/>
<circle cx="96.2" cy="107.7" r="1.900" fill="#fff" stroke="#222" stroke-width=".45"/>
<path d="M92.6 116.9c0.4-5.0 2.0-6.4 3.6-6.4s3.2 1.6 4.0 6.4z" fill="#f4f4f4" stroke="#222" stroke-width=".45"/>
<rect x="94.2" y="112.3" width="4.4" height="2.8" fill="#2a2a2a" opacity=".7"/>
<circle cx="111.3" cy="107.7" r="1.900" fill="#fff" stroke="#222" stroke-width=".45"/>
<path d="M107.7 116.9c0.4-5.0 2.0-6.4 3.6-6.4s3.2 1.6 4.0 6.4z" fill="#f4f4f4" stroke="#222" stroke-width=".45"/>
<rect x="109.3" y="112.3" width="4.4" height="2.8" fill="#2a2a2a" opacity=".7"/>
<circle cx="125.3" cy="108.7" r="1.900" fill="#fff" stroke="#222" stroke-width=".45"/>
<path d="M121.7 117.9c0.4-5.0 2.0-6.4 3.6-6.4s3.2 1.6 4.0 6.4z" fill="#f4f4f4" stroke="#222" stroke-width=".45"/>
<rect x="123.3" y="113.3" width="4.4" height="2.8" fill="#2a2a2a" opacity=".7"/>
<circle cx="140.3" cy="109.7" r="1.900" fill="#fff" stroke="#222" stroke-width=".45"/>
<path d="M136.7 118.9c0.4-5.0 2.0-6.4 3.6-6.4s3.2 1.6 4.0 6.4z" fill="#f4f4f4" stroke="#222" stroke-width=".45"/>
<rect x="138.3" y="114.3" width="4.4" height="2.8" fill="#2a2a2a" opacity=".7"/>
<rect x="89.2" y="117.9" width="59.1" height="0.4" fill="#555" opacity=".5"/>
<rect x="89.2" y="118.7" width="59.1" height="2.0" fill="#e8eef6" opacity=".7"/>
<text x="87.8" y="127.1" font-family="Liberation Sans" font-size="3.15" font-weight="700" fill="#222" text-anchor="start" textLength="50.12" lengthAdjust="spacingAndGlyphs">Latest stable release [0.3.0]</text>
<rect x="87.8" y="132.3" width="61.5" height="9.6" rx=".8" fill="#f5f5f5" stroke="#e2e2e2" stroke-width=".3"/>
<rect x="87.8" y="146.4" width="61.5" height="9.2" rx=".8" fill="#f5f5f5" stroke="#e2e2e2" stroke-width=".3"/>
<rect x="108.3" y="132.3" width="0.2" height="9.6" fill="#e2e2e2"/>
<rect x="108.3" y="146.4" width="0.2" height="9.2" fill="#e2e2e2"/>
<rect x="128.7" y="132.3" width="0.2" height="9.6" fill="#e2e2e2"/>
<rect x="128.7" y="146.4" width="0.2" height="9.2" fill="#e2e2e2"/>
<text x="98.0" y="136.1" font-family="Liberation Sans" font-size="2" font-weight="400" fill="#999" text-anchor="middle" textLength="15.24" lengthAdjust="spacingAndGlyphs">Download for</text>
<text x="98.0" y="139.1" font-family="Liberation Sans" font-size="2.7" font-weight="700" fill="#222" text-anchor="middle" textLength="14.74" lengthAdjust="spacingAndGlyphs">Windows</text>
<text x="98.0" y="150.8" font-family="Liberation Sans" font-size="2.7" font-weight="700" fill="#222" text-anchor="middle" textLength="7.78" lengthAdjust="spacingAndGlyphs">Code</text>
<text x="118.3" y="136.1" font-family="Liberation Sans" font-size="2" font-weight="400" fill="#999" text-anchor="middle" textLength="15.24" lengthAdjust="spacingAndGlyphs">Download for</text>
<text x="118.3" y="139.1" font-family="Liberation Sans" font-size="2.7" font-weight="700" fill="#222" text-anchor="middle" textLength="6.32" lengthAdjust="spacingAndGlyphs">Mac</text>
<text x="118.3" y="150.8" font-family="Liberation Sans" font-size="2.7" font-weight="700" fill="#222" text-anchor="middle" textLength="7.78" lengthAdjust="spacingAndGlyphs">Docs</text>
<text x="138.7" y="136.1" font-family="Liberation Sans" font-size="2" font-weight="400" fill="#999" text-anchor="middle" textLength="15.24" lengthAdjust="spacingAndGlyphs">Download for</text>
<text x="138.7" y="139.1" font-family="Liberation Sans" font-size="2.7" font-weight="700" fill="#222" text-anchor="middle" textLength="10.53" lengthAdjust="spacingAndGlyphs">Linux</text>
<text x="138.7" y="150.8" font-family="Liberation Sans" font-size="2.7" font-weight="700" fill="#222" text-anchor="middle" textLength="13.61" lengthAdjust="spacingAndGlyphs">Discuss</text>
<text x="87.8" y="197.5" font-family="Liberation Sans" font-size="2.1" font-weight="400" fill="#888" text-anchor="start" textLength="43.50" lengthAdjust="spacingAndGlyphs">Hosted on GitHub Pages — Theme by</text>
<text x="132.3" y="197.5" font-family="Liberation Sans" font-size="2.1" font-weight="400" fill="#2a7cba" text-anchor="start" textLength="12.43" lengthAdjust="spacingAndGlyphs">orderedlist</text>
<path d="M174.0 58.1l1 .6 1-.6" fill="none" stroke="#555" stroke-width=".3"/>
<text x="178.0" y="59.3" font-family="Liberation Sans" font-size="2.8" font-weight="700" fill="#222" text-anchor="start" textLength="46.91" lengthAdjust="spacingAndGlyphs">Groundwork for new features</text>
<text x="226.1" y="59.3" font-family="Liberation Sans" font-size="2.8" font-weight="400" fill="#999" text-anchor="start" textLength="21.45" lengthAdjust="spacingAndGlyphs">coming soon…</text>
<text x="169.0" y="68.6" font-family="Liberation Sans" font-size="2.8" font-weight="700" fill="#222" text-anchor="start" textLength="38.09" lengthAdjust="spacingAndGlyphs">Download QuPath v0.3.0</text>
<text x="207.9" y="68.6" font-family="Liberation Sans" font-size="2.8" font-weight="700" fill="#2a7cba" text-anchor="start" textLength="9.02" lengthAdjust="spacingAndGlyphs">here!</text>
<rect x="215.1" y="76.6" width="50.1" height="26.1" fill="#000" opacity=".18" filter="url(#sh30)"/><rect x="214.5" y="75.8" width="50.1" height="26.1" fill="#e8e8ea"/><rect x="215.1" y="77.6" width="48.9" height="23.7" fill="#0a0a0a"/>
<rect x="228.5" y="77.2" width="35.1" height="15.0" fill="#10a8a0" opacity=".5"/>
<circle cx="230.8" cy="90.2" r="0.9" fill="#e8e020" opacity=".85"/>
<circle cx="241.0" cy="91.0" r="1.2" fill="#f0f0f0" opacity=".85"/>
<circle cx="231.7" cy="83.4" r="1.6" fill="#f0f0f0" opacity=".85"/>
<circle cx="243.8" cy="90.3" r="0.9" fill="#20d840" opacity=".85"/>
<circle cx="230.5" cy="81.5" r="1.5" fill="#f0f0f0" opacity=".85"/>
<circle cx="252.5" cy="93.0" r="0.6" fill="#e8e020" opacity=".85"/>
<circle cx="222.4" cy="95.4" r="1.4" fill="#20e8e8" opacity=".85"/>
<circle cx="240.9" cy="94.0" r="1.5" fill="#2040e8" opacity=".85"/>
<circle cx="254.5" cy="87.6" r="1.3" fill="#e8e020" opacity=".85"/>
<circle cx="239.7" cy="98.8" r="1.5" fill="#e82030" opacity=".85"/>
<circle cx="222.1" cy="89.1" r="0.8" fill="#2040e8" opacity=".85"/>
<circle cx="239.3" cy="92.0" r="0.8" fill="#e8e020" opacity=".85"/>
<circle cx="256.5" cy="90.8" r="1.1" fill="#f0f0f0" opacity=".85"/>
<circle cx="245.7" cy="98.1" r="1.3" fill="#e82030" opacity=".85"/>
<circle cx="257.4" cy="100.0" r="1.2" fill="#20d840" opacity=".85"/>
<circle cx="250.6" cy="85.4" r="1.1" fill="#e8e020" opacity=".85"/>
<circle cx="245.1" cy="93.9" r="0.7" fill="#e8e020" opacity=".85"/>
<circle cx="232.0" cy="80.9" r="1.0" fill="#2040e8" opacity=".85"/>
<circle cx="263.2" cy="80.1" r="1.4" fill="#f0f0f0" opacity=".85"/>
<circle cx="259.2" cy="78.6" r="1.0" fill="#f0f0f0" opacity=".85"/>
<circle cx="258.1" cy="79.2" r="1.2" fill="#e82030" opacity=".85"/>
<circle cx="236.8" cy="91.1" r="1.1" fill="#20e8e8" opacity=".85"/>
<circle cx="242.3" cy="100.2" r="0.8" fill="#e82030" opacity=".85"/>
<circle cx="225.2" cy="90.0" r="1.5" fill="#f0f0f0" opacity=".85"/>
<circle cx="233.1" cy="84.0" r="1.3" fill="#20e8e8" opacity=".85"/>
<circle cx="234.1" cy="99.3" r="1.5" fill="#f0f0f0" opacity=".85"/>
<circle cx="236.8" cy="97.4" r="0.9" fill="#e8e020" opacity=".85"/>
<circle cx="249.9" cy="80.4" r="1.6" fill="#e8e020" opacity=".85"/>
<circle cx="232.2" cy="92.2" r="1.3" fill="#20e8e8" opacity=".85"/>
<circle cx="239.4" cy="83.9" r="0.8" fill="#20e8e8" opacity=".85"/>
<circle cx="221.0" cy="87.3" r="1.1" fill="#e82030" opacity=".85"/>
<circle cx="236.8" cy="91.2" r="0.6" fill="#2040e8" opacity=".85"/>
<circle cx="247.6" cy="88.5" r="1.2" fill="#20e8e8" opacity=".85"/>
<circle cx="246.8" cy="84.3" r="1.0" fill="#e8e020" opacity=".85"/>
<circle cx="223.1" cy="93.1" r="1.6" fill="#20e8e8" opacity=".85"/>
<circle cx="247.6" cy="84.8" r="1.2" fill="#20d840" opacity=".85"/>
<circle cx="236.2" cy="85.1" r="0.9" fill="#e8e020" opacity=".85"/>
<circle cx="231.9" cy="95.5" r="0.6" fill="#e82030" opacity=".85"/>
<circle cx="262.4" cy="93.3" r="0.6" fill="#e8e020" opacity=".85"/>
<circle cx="230.1" cy="95.9" r="0.8" fill="#20d840" opacity=".85"/>
<rect x="170.0" y="79.0" width="50.1" height="24.1" fill="#000" opacity=".18" filter="url(#sh30)"/><rect x="169.4" y="78.2" width="50.1" height="24.1" fill="#e8e8ea"/><rect x="170.0" y="80.0" width="48.9" height="21.7" fill="#101014"/>
<rect x="178.4" y="80.2" width="33.1" height="9.0" fill="#8a88d0"/>
<rect x="200.5" y="83.2" width="9.0" height="5.0" fill="#e8e8f4"/>
<rect x="170.4" y="86.2" width="18.0" height="15.0" fill="#f0f0f0"/>
<rect x="171.4" y="87.4" width="4.0" height="0.8" fill="#3a8ee8"/>
<rect x="190.1" y="91.4" width="34.1" height="27.1" fill="#000" opacity=".18" filter="url(#sh30)"/><rect x="189.5" y="90.6" width="34.1" height="27.1" fill="#e8e8ea"/><rect x="190.1" y="92.4" width="32.9" height="24.7" fill="#8f88cf"/>
<path d="M202.5 92.6c4.0 5.0 12.0 1.0 14.0 8.0s-4.0 10.0 2.0 16.0h-12.0c-2.0-8.0 2.0-12.0-4.0-24.1z" fill="#d86a6a" opacity=".85"/>
<rect x="236.2" y="93.0" width="46.1" height="28.1" fill="#000" opacity=".18" filter="url(#sh30)"/><rect x="235.6" y="92.2" width="46.1" height="28.1" fill="#e8e8ea"/><rect x="236.2" y="94.0" width="44.9" height="25.7" fill="#9ab0a0"/>
<rect x="236.6" y="94.2" width="22.1" height="10.0" fill="#e8ecf0"/>
<rect x="237.6" y="95.4" width="18.0" height="0.6" fill="#8aa8c8"/>
<rect x="237.6" y="97.0" width="18.0" height="0.6" fill="#8aa8c8"/>
<rect x="237.6" y="98.6" width="18.0" height="0.6" fill="#8aa8c8"/>
<rect x="237.6" y="100.2" width="18.0" height="0.6" fill="#8aa8c8"/>
<rect x="237.6" y="101.8" width="18.0" height="0.6" fill="#8aa8c8"/>
<path d="M273.9 109.3l-1.3 3.0" stroke="#c01020" stroke-width="1.3" opacity=".85"/>
<path d="M273.8 99.7l1.0 4.3" stroke="#c01020" stroke-width="0.6" opacity=".85"/>
<path d="M275.2 99.6l0.2 1.9" stroke="#c01020" stroke-width="1.1" opacity=".85"/>
<path d="M260.3 116.3l-0.6 3.9" stroke="#c01020" stroke-width="1.0" opacity=".85"/>
<path d="M277.8 102.3l1.1 1.3" stroke="#c01020" stroke-width="1.0" opacity=".85"/>
<path d="M272.0 104.2l0.1 3.9" stroke="#c01020" stroke-width="0.9" opacity=".85"/>
<path d="M273.0 101.2l0.2 1.1" stroke="#c01020" stroke-width="0.8" opacity=".85"/>
<path d="M263.8 105.4l1.1 3.1" stroke="#c01020" stroke-width="0.9" opacity=".85"/>
<path d="M271.4 117.0l0.7 1.1" stroke="#c01020" stroke-width="0.9" opacity=".85"/>
<path d="M275.5 111.6l1.5 2.9" stroke="#c01020" stroke-width="1.2" opacity=".85"/>
<path d="M277.8 114.1l1.5 1.4" stroke="#c01020" stroke-width="0.7" opacity=".85"/>
<path d="M260.4 112.8l0.0 1.7" stroke="#c01020" stroke-width="1.2" opacity=".85"/>
<path d="M268.7 95.7l-0.1 1.4" stroke="#c01020" stroke-width="0.9" opacity=".85"/>
<path d="M264.7 95.1l0.1 1.2" stroke="#c01020" stroke-width="1.2" opacity=".85"/>
<path d="M262.0 97.5l1.5 2.8" stroke="#c01020" stroke-width="1.1" opacity=".85"/>
<path d="M260.9 99.6l-1.2 4.0" stroke="#c01020" stroke-width="0.6" opacity=".85"/>
<path d="M264.7 100.8l1.2 1.4" stroke="#c01020" stroke-width="1.2" opacity=".85"/>
<path d="M269.9 107.6l-0.3 3.6" stroke="#c01020" stroke-width="0.7" opacity=".85"/>
<path d="M272.6 106.4l-1.4 2.1" stroke="#c01020" stroke-width="1.2" opacity=".85"/>
<path d="M277.7 112.2l-1.5 1.2" stroke="#c01020" stroke-width="0.9" opacity=".85"/>
<path d="M260.3 110.8l0.0 2.7" stroke="#c01020" stroke-width="0.6" opacity=".85"/>
<path d="M261.1 103.4l-0.4 2.0" stroke="#c01020" stroke-width="0.7" opacity=".85"/>
<path d="M280.4 104.3l-1.2 1.0" stroke="#c01020" stroke-width="1.1" opacity=".85"/>
<path d="M276.4 107.5l-1.5 2.6" stroke="#c01020" stroke-width="1.0" opacity=".85"/>
<path d="M271.0 109.1l-1.5 4.0" stroke="#c01020" stroke-width="0.5" opacity=".85"/>
<path d="M272.8 111.8l-0.6 4.2" stroke="#c01020" stroke-width="0.8" opacity=".85"/>
<path d="M260.0 99.6l-0.7 3.0" stroke="#c01020" stroke-width="1.1" opacity=".85"/>
<path d="M264.3 97.6l-1.5 2.1" stroke="#c01020" stroke-width="1.3" opacity=".85"/>
<path d="M271.4 114.3l-1.2 3.4" stroke="#c01020" stroke-width="1.3" opacity=".85"/>
<path d="M275.0 113.9l0.1 2.3" stroke="#c01020" stroke-width="0.6" opacity=".85"/>
<path d="M266.3 106.7l1.0 3.4" stroke="#c01020" stroke-width="0.9" opacity=".85"/>
<path d="M264.6 103.4l0.1 2.9" stroke="#c01020" stroke-width="1.0" opacity=".85"/>
<path d="M267.5 113.2l-0.5 3.9" stroke="#c01020" stroke-width="0.5" opacity=".85"/>
<path d="M262.0 105.5l0.6 2.0" stroke="#c01020" stroke-width="0.7" opacity=".85"/>
<path d="M261.5 117.2l0.2 2.8" stroke="#c01020" stroke-width="0.7" opacity=".85"/>
<path d="M271.3 96.9l0.2 2.9" stroke="#c01020" stroke-width="1.2" opacity=".85"/>
<path d="M263.4 96.4l1.6 3.2" stroke="#c01020" stroke-width="0.9" opacity=".85"/>
<path d="M274.4 116.0l-0.8 3.0" stroke="#c01020" stroke-width="1.3" opacity=".85"/>
<path d="M271.3 116.5l-0.4 1.8" stroke="#c01020" stroke-width="1.2" opacity=".85"/>
<path d="M277.4 116.5l-0.3 2.9" stroke="#c01020" stroke-width="1.0" opacity=".85"/>
<path d="M279.1 110.2l-1.1 2.4" stroke="#c01020" stroke-width="1.2" opacity=".85"/>
<path d="M263.0 105.9l-0.1 3.4" stroke="#c01020" stroke-width="1.3" opacity=".85"/>
<path d="M272.0 114.1l-1.2 3.6" stroke="#c01020" stroke-width="0.6" opacity=".85"/>
<path d="M270.5 115.8l1.1 2.8" stroke="#c01020" stroke-width="1.1" opacity=".85"/>
<path d="M273.8 114.0l0.3 3.0" stroke="#c01020" stroke-width="1.3" opacity=".85"/>
<rect x="224.7" y="102.0" width="39.7" height="23.1" fill="#000" opacity=".18" filter="url(#sh30)"/><rect x="224.1" y="101.2" width="39.7" height="23.1" fill="#e8e8ea"/><rect x="224.7" y="103.0" width="38.5" height="20.6" fill="#f3e8ee"/>
<path d="M232.6 106.3c6.0-3.0 18.0-3.0 24.1 1.0c3.0 6.0 1.0 12.0-4.0 15.0c-8.0 2.0-16.0 1.0-21.1-2.0c-2.0-5.0-2.0-10.0 1.0-14.0z" fill="#c77ac0"/>
<ellipse cx="243.6" cy="114.3" rx="6" ry="5" fill="#e8a850" opacity=".8"/>
<rect x="174.0" y="106.1" width="44.5" height="22.1" fill="#000" opacity=".18" filter="url(#sh30)"/><rect x="173.4" y="105.3" width="44.5" height="22.1" fill="#e8e8ea"/><rect x="174.0" y="107.1" width="43.3" height="19.6" fill="#9e6ab8"/>
<rect x="174.4" y="107.5" width="13.0" height="19.0" fill="#f0f0f0"/>
<circle cx="179.8" cy="120.3" r="2" fill="#e04040"/><path d="M179.8 120.3v-2a2 2 0 0 1 2 2z" fill="#40a840"/>
<rect x="188.5" y="107.5" width="17.0" height="19.0" fill="#a8b0a0"/>
<path d="M202.8 112.6l-0.6 2.8" stroke="#c01020" stroke-width="0.6" opacity=".85"/>
<path d="M197.8 111.5l-0.0 2.9" stroke="#c01020" stroke-width="0.8" opacity=".85"/>
<path d="M199.8 118.7l-0.7 2.3" stroke="#c01020" stroke-width="1.1" opacity=".85"/>
<path d="M199.1 108.3l1.2 1.2" stroke="#c01020" stroke-width="1.2" opacity=".85"/>
<path d="M201.1 121.5l-1.1 3.0" stroke="#c01020" stroke-width="1.1" opacity=".85"/>
<path d="M199.0 119.9l-1.0 1.5" stroke="#c01020" stroke-width="0.7" opacity=".85"/>
<path d="M202.8 119.8l-0.9 2.4" stroke="#c01020" stroke-width="1.0" opacity=".85"/>
<path d="M189.4 122.3l-0.8 1.1" stroke="#c01020" stroke-width="0.6" opacity=".85"/>
<path d="M190.3 120.2l-0.9 1.6" stroke="#c01020" stroke-width="1.1" opacity=".85"/>
<path d="M189.4 114.8l0.6 1.7" stroke="#c01020" stroke-width="0.5" opacity=".85"/>
<path d="M194.0 113.7l-1.0 2.4" stroke="#c01020" stroke-width="1.0" opacity=".85"/>
<path d="M196.5 109.8l-0.4 3.0" stroke="#c01020" stroke-width="0.6" opacity=".85"/>
<path d="M195.6 114.6l0.1 1.6" stroke="#c01020" stroke-width="0.9" opacity=".85"/>
<path d="M199.8 118.3l-0.3 2.0" stroke="#c01020" stroke-width="1.0" opacity=".85"/>
<path d="M199.3 122.4l0.8 1.2" stroke="#c01020" stroke-width="1.2" opacity=".85"/>
<path d="M194.1 116.6l0.1 2.5" stroke="#c01020" stroke-width="0.9" opacity=".85"/>
<path d="M189.8 112.4l0.5 2.6" stroke="#c01020" stroke-width="1.0" opacity=".85"/>
<path d="M200.3 110.2l-0.3 3.0" stroke="#c01020" stroke-width="0.8" opacity=".85"/>
<path d="M190.5 116.5l1.0 2.4" stroke="#c01020" stroke-width="1.0" opacity=".85"/>
<path d="M195.4 112.5l-0.8 2.1" stroke="#c01020" stroke-width="1.0" opacity=".85"/>
<path d="M199.9 109.5l-0.8 2.2" stroke="#c01020" stroke-width="0.9" opacity=".85"/>
<path d="M195.0 109.4l-0.6 1.1" stroke="#c01020" stroke-width="0.6" opacity=".85"/>
<path d="M196.3 112.0l0.5 2.1" stroke="#c01020" stroke-width="1.1" opacity=".85"/>
<path d="M203.6 114.8l0.7 1.2" stroke="#c01020" stroke-width="0.8" opacity=".85"/>
<path d="M204.4 110.2l0.2 2.5" stroke="#c01020" stroke-width="0.9" opacity=".85"/>
<path d="M203.1 109.6l0.5 2.3" stroke="#c01020" stroke-width="1.0" opacity=".85"/>
<path d="M195.0 123.0l-0.9 2.3" stroke="#c01020" stroke-width="1.1" opacity=".85"/>
<path d="M201.3 116.3l-0.8 1.4" stroke="#c01020" stroke-width="1.1" opacity=".85"/>
<path d="M194.6 112.4l0.8 2.0" stroke="#c01020" stroke-width="0.8" opacity=".85"/>
<path d="M201.6 112.7l1.0 1.7" stroke="#c01020" stroke-width="0.8" opacity=".85"/>
<path d="M197.1 118.8l1.0 2.5" stroke="#c01020" stroke-width="0.5" opacity=".85"/>
<path d="M191.8 117.6l-0.9 2.7" stroke="#c01020" stroke-width="0.7" opacity=".85"/>
<path d="M191.6 117.5l-0.7 2.7" stroke="#c01020" stroke-width="0.6" opacity=".85"/>
<path d="M201.6 122.2l1.1 1.2" stroke="#c01020" stroke-width="0.7" opacity=".85"/>
<path d="M199.1 110.2l-0.1 1.2" stroke="#c01020" stroke-width="1.1" opacity=".85"/>
<text x="169.0" y="136.1" font-family="Liberation Sans" font-size="2.8" font-weight="700" fill="#222" text-anchor="start" textLength="108.66" lengthAdjust="spacingAndGlyphs">Please remember to cite the QuPath paper if you use it in your work!</text>
<rect x="169.6" y="142.7" width="113.5" height="23.7" fill="#000" opacity=".22" filter="url(#sh30)"/>
<rect x="169.4" y="142.3" width="113.3" height="23.5" fill="#f5f5f5"/>
<text x="173.6" y="150.0" font-family="Liberation Sans" font-size="2.7" font-weight="400" fill="#999" text-anchor="start" textLength="26.86" lengthAdjust="spacingAndGlyphs">Bankhead, P. et al.</text>
<text x="201.7" y="150.0" font-family="Liberation Sans" font-size="2.7" font-weight="700" fill="#222" text-anchor="start" textLength="64.96" lengthAdjust="spacingAndGlyphs">QuPath: Open source software for digital</text>
<text x="173.6" y="154.8" font-family="Liberation Sans" font-size="2.7" font-weight="700" fill="#222" text-anchor="start" textLength="40.50" lengthAdjust="spacingAndGlyphs">pathology image analysis</text>
<text x="214.9" y="154.8" font-family="Liberation Sans" font-size="2.7" font-weight="400" fill="#999" text-anchor="start" textLength="34.68" lengthAdjust="spacingAndGlyphs">. Scientific Reports (2017).</text>
<text x="173.6" y="159.4" font-family="Liberation Sans" font-size="2.7" font-weight="400" fill="#2a7cba" text-anchor="start" textLength="64.96" lengthAdjust="spacingAndGlyphs">doi.org/10.1038/s41598-017-17204-5/full</text>
<text x="169.0" y="174.0" font-family="Liberation Sans" font-size="4.4" font-weight="700" fill="#222" text-anchor="start" textLength="75.18" lengthAdjust="spacingAndGlyphs">March 2021: We need your help!</text>
<text x="169.0" y="183.0" font-family="Liberation Sans" font-size="2.75" font-weight="400" fill="#999" text-anchor="start" textLength="111.67" lengthAdjust="spacingAndGlyphs">It’s grant application time again – which means planning for the future and</text>
<text x="169.0" y="187.9" font-family="Liberation Sans" font-size="2.75" font-weight="400" fill="#999" text-anchor="start" textLength="56.54" lengthAdjust="spacingAndGlyphs">trying to convince funding bodies that</text>
<text x="226.5" y="187.9" font-family="Liberation Sans" font-size="2.75" font-weight="400" fill="#2a7cba" text-anchor="start" textLength="11.03" lengthAdjust="spacingAndGlyphs">QuPath</text>
<text x="238.6" y="187.9" font-family="Liberation Sans" font-size="2.75" font-weight="400" fill="#999" text-anchor="start" textLength="18.64" lengthAdjust="spacingAndGlyphs">is important.</text>
<text x="169.0" y="197.1" font-family="Liberation Sans" font-size="2.8" font-weight="700" fill="#222" text-anchor="start" textLength="51.92" lengthAdjust="spacingAndGlyphs">Please help us by completing our</text>
<text x="221.9" y="197.1" font-family="Liberation Sans" font-size="2.8" font-weight="700" fill="#2a7cba" text-anchor="start" textLength="31.07" lengthAdjust="spacingAndGlyphs">QuPath User Survey</text>
<text x="253.6" y="197.1" font-family="Liberation Sans" font-size="2.8" font-weight="700" fill="#222" text-anchor="start">!</text>
</svg>
<div class="t" style="left:22.300px;top:27.800px">QuPath</div><!--/S30--></div><svg class="abs" style="left:-2px;top:-2px" width="409" height="236" viewBox="-2 -2 409 236"><rect x=".4" y="0.5" width="404.100" height="229.800" rx="16.500" fill="none" stroke="#c4c7c5" stroke-width="1.400"/></svg></div>
<div class="num" style="left:535px;top:973px">30</div>
<div class="card" id="c31" style="left:970px;top:729px"><div class="clip" style="clip-path:inset(0.0px 0 0.0px 0 round 16.5px)"><!--S31--><svg class="abs" style="left:0;top:0" width="405" height="231" viewBox="0 0 405 231">
<defs><linearGradient id="cam" x1="0" x2="1" y1="0" y2="1"><stop offset="0" stop-color="#0a0a0a"/><stop offset=".45" stop-color="#2c2c2c"/><stop offset="1" stop-color="#0a0a0a"/></linearGradient><filter id="hn31" x="0" y="0" width="100%" height="100%" color-interpolation-filters="sRGB"><feTurbulence type="fractalNoise" baseFrequency=".5" numOctaves="2" seed="8"/><feColorMatrix type="matrix" values="0 0 0 0 .95  0 0 0 0 .9  0 0 0 0 .95  3 0 0 0 -1.400"/></filter></defs>
<rect x="22.5" y="54.1" width="181.0" height="168.4" fill="#fefefe"/>
<rect x="22.5" y="54.1" width="181.0" height="0.5" fill="#d0d3d8"/>
<text x="23.3" y="61.7" font-family="Liberation Sans" font-size="2.7" font-weight="400" fill="#333" text-anchor="start" textLength="21.25" lengthAdjust="spacingAndGlyphs">Grand Challenge</text>
<rect x="47.1" y="60.5" width="9.0" height="1.0" fill="#777" opacity=".7"/>
<rect x="58.5" y="60.5" width="15.0" height="1.0" fill="#777" opacity=".7"/>
<rect x="76.2" y="60.5" width="11.2" height="1.0" fill="#777" opacity=".7"/>
<rect x="90.0" y="60.5" width="11.0" height="1.0" fill="#777" opacity=".7"/>
<rect x="103.6" y="60.5" width="9.2" height="1.0" fill="#777" opacity=".7"/>
<rect x="170.8" y="58.5" width="10.8" height="4.8" rx=".6" fill="#fff" stroke="#999" stroke-width=".3"/><rect x="183.0" y="58.5" width="12.4" height="4.8" rx=".6" fill="#fff" stroke="#999" stroke-width=".3"/>
<rect x="173.2" y="60.5" width="6.0" height="1.0" fill="#555"/>
<rect x="185.2" y="60.5" width="8.0" height="1.0" fill="#555"/>
<rect x="22.5" y="67.2" width="181.0" height="6.6" fill="#2c3e50"/>
<rect x="24.1" y="69.8" width="10.4" height="1.0" fill="#8aa0b8"/>
<rect x="36.1" y="69.4" width="0.6" height="1.8" fill="#8aa0b8"/>
<rect x="38.5" y="69.8" width="14.0" height="1.0" fill="#8aa0b8"/>
<rect x="54.1" y="69.4" width="0.6" height="1.8" fill="#8aa0b8"/>
<rect x="56.5" y="69.8" width="6.0" height="1.0" fill="#fff"/>
<rect x="23.7" y="76.6" width="171.8" height="47.3" rx="1" fill="url(#cam)"/>
<circle cx="39.1" cy="92.7" r="2.1" fill="#3ad83a"/>
<circle cx="38.5" cy="89.4" r="1.7" fill="#3ad83a"/>
<circle cx="37.9" cy="86.0" r="1.3" fill="#3ad83a"/>
<circle cx="37.3" cy="82.6" r="0.9" fill="#3ad83a"/>
<circle cx="35.5" cy="95.0" r="2.1" fill="#8ae83a"/>
<circle cx="32.7" cy="93.1" r="1.7" fill="#8ae83a"/>
<circle cx="29.9" cy="91.1" r="1.3" fill="#8ae83a"/>
<circle cx="27.1" cy="89.2" r="0.9" fill="#8ae83a"/>
<circle cx="34.6" cy="99.2" r="2.1" fill="#d8e83a"/>
<circle cx="31.2" cy="99.8" r="1.7" fill="#d8e83a"/>
<circle cx="27.9" cy="100.4" r="1.3" fill="#d8e83a"/>
<circle cx="24.5" cy="101.0" r="0.9" fill="#d8e83a"/>
<circle cx="36.9" cy="102.8" r="2.1" fill="#f0c030"/>
<circle cx="34.9" cy="105.6" r="1.7" fill="#f0c030"/>
<circle cx="33.0" cy="108.4" r="1.3" fill="#f0c030"/>
<circle cx="31.0" cy="111.2" r="0.9" fill="#f0c030"/>
<circle cx="41.1" cy="103.8" r="2.1" fill="#f09030"/>
<circle cx="41.7" cy="107.1" r="1.7" fill="#f09030"/>
<circle cx="42.3" cy="110.5" r="1.3" fill="#f09030"/>
<circle cx="42.8" cy="113.8" r="0.9" fill="#f09030"/>
<circle cx="44.7" cy="101.5" r="2.1" fill="#f06030"/>
<circle cx="47.5" cy="103.4" r="1.7" fill="#f06030"/>
<circle cx="50.3" cy="105.4" r="1.3" fill="#f06030"/>
<circle cx="53.1" cy="107.3" r="0.9" fill="#f06030"/>
<circle cx="45.6" cy="97.3" r="2.1" fill="#3ad83a"/>
<circle cx="49.0" cy="96.7" r="1.7" fill="#3ad83a"/>
<circle cx="52.3" cy="96.1" r="1.3" fill="#3ad83a"/>
<circle cx="55.7" cy="95.5" r="0.9" fill="#3ad83a"/>
<text x="43.1" y="101.6" font-family="Liberation Sans" font-size="9.3" font-weight="400" fill="#d0d0d0" text-anchor="start" letter-spacing="-.5" textLength="55.13" lengthAdjust="spacingAndGlyphs">CAMELYON</text>
<text x="98.8" y="101.6" font-family="Liberation Sans" font-size="9.3" font-weight="400" fill="#e8a030" text-anchor="start" textLength="9.82" lengthAdjust="spacingAndGlyphs">17</text>
<path d="M144.3 85.2l43.1-5.0v32.1l-43.1-3.0z" fill="#d8d8dc"/>
<path d="M146.4 86.6l39.1-4.4v28.1l-39.1-2.4z" fill="#e8a8d0"/>
<path d="M146.4 86.6l18.0-2.0v23.7l-18.0-0.4z" fill="#3a3a4a"/>
<path d="M172.4 85.2l13.0-1.6v27.1l-13.0-1.0z" fill="#f4e4f0"/>
<path d="M160.4 117.3h12.0l5.0 4.4h-22.1z" fill="#c8c8cc"/>
<ellipse cx="155.4" cy="89.2" rx="3.600" ry="4" fill="#1a1412"/><path d="M146.4 108.3c1.0-10.0 6.0-15.0 12.0-14.0l4.0 8.0l-4.0 6.0z" fill="#f0f0f0"/>
<rect x="23.7" y="126.7" width="171.8" height="6.0" fill="#fafafa"/>
<rect x="23.7" y="132.3" width="18.0" height="0.6" fill="#2c3e50"/>
<rect x="29.7" y="129.3" width="6.0" height="1.0" fill="#444"/>
<rect x="46.5" y="128.7" width="1.6" height="2.0" fill="#333"/>
<rect x="50.1" y="129.3" width="13.0" height="1.0" fill="#444"/>
<rect x="187.4" y="126.7" width="8.0" height="5.6" rx=".6" fill="#1abc9c"/>
<rect x="189.7" y="128.9" width="3.6" height="1.0" fill="#d8f4ee"/>
<rect x="24.1" y="135.9" width="38.5" height="4.4" rx="2.200" fill="#2c3e50"/>
<rect x="30.5" y="137.5" width="6.0" height="1.0" fill="#e8eef4"/>
<rect x="30.5" y="142.7" width="12.0" height="1.0" fill="#333" opacity=".75"/>
<rect x="30.5" y="148.0" width="6.0" height="1.0" fill="#333" opacity=".75"/>
<rect x="30.5" y="153.3" width="5.2" height="1.0" fill="#333" opacity=".75"/>
<rect x="30.5" y="158.6" width="11.2" height="1.0" fill="#333" opacity=".75"/>
<rect x="30.5" y="163.9" width="11.2" height="1.0" fill="#333" opacity=".75"/>
<rect x="30.5" y="169.2" width="10.8" height="1.0" fill="#333" opacity=".75"/>
<text x="70.2" y="141.5" font-family="Liberation Sans" font-size="6.4" font-weight="400" fill="#333" text-anchor="start" textLength="26.46" lengthAdjust="spacingAndGlyphs">Overview</text>
<rect x="70.2" y="145.5" width="59.1" height="1.0" fill="#222" opacity=".8"/>
<rect x="70.2" y="152.0" width="115.3" height="1.0" fill="#444" opacity="0.5"/><rect x="70.2" y="155.7" width="114.3" height="1.0" fill="#444" opacity="0.5"/><rect x="70.2" y="159.4" width="45.1" height="1.0" fill="#444" opacity="0.5"/>
<rect x="70.2" y="165.6" width="120.3" height="1.0" fill="#444" opacity="0.5"/><rect x="70.2" y="169.3" width="118.3" height="1.0" fill="#444" opacity="0.5"/><rect x="70.2" y="173.0" width="122.7" height="1.0" fill="#444" opacity="0.5"/><rect x="70.2" y="176.7" width="119.9" height="1.0" fill="#444" opacity="0.5"/><rect x="70.2" y="180.4" width="112.3" height="1.0" fill="#444" opacity="0.5"/>
<rect x="70.2" y="186.6" width="121.3" height="1.0" fill="#444" opacity="0.5"/><rect x="70.2" y="190.4" width="118.3" height="1.0" fill="#444" opacity="0.5"/><rect x="70.2" y="194.1" width="122.7" height="1.0" fill="#444" opacity="0.5"/><rect x="70.2" y="197.8" width="119.9" height="1.0" fill="#444" opacity="0.5"/><rect x="70.2" y="201.5" width="121.9" height="1.0" fill="#444" opacity="0.5"/><rect x="70.2" y="205.2" width="45.1" height="1.0" fill="#444" opacity="0.5"/>
<rect x="104.3" y="155.8" width="5.6" height="1.0" fill="#3a8ee8"/>
<rect x="70.2" y="159.6" width="14.0" height="1.0" fill="#3a8ee8"/>
<rect x="122.7" y="186.6" width="15.0" height="1.0" fill="#3a8ee8"/>
<text x="70.2" y="215.9" font-family="Liberation Sans" font-size="6.4" font-weight="400" fill="#333" text-anchor="start" textLength="33.28" lengthAdjust="spacingAndGlyphs">Publications</text>
<rect x="70.2" y="219.7" width="120.3" height="0.8" fill="#444" opacity=".6"/>
<rect x="22.5" y="220.9" width="181.0" height="1.6" fill="#3a3f48"/>
<rect x="224.9" y="56.1" width="110.9" height="165.4" fill="#fefefe"/>
<rect x="224.9" y="57.1" width="110.9" height="0.4" fill="#b8c4e0"/>
<rect x="224.9" y="56.1" width="110.9" height="1.0" fill="#eef0f8"/>
<rect x="227.5" y="60.1" width="2.0" height="1.0" fill="#444" opacity=".55"/><rect x="230.4" y="60.1" width="95.2" height="1.0" fill="#3a78e8" opacity=".55"/>
<rect x="227.5" y="63.2" width="26.1" height="1.0" fill="#3a78e8" opacity=".55"/><rect x="254.4" y="63.2" width="28.1" height="1.0" fill="#444" opacity=".55"/><rect x="283.3" y="63.2" width="37.7" height="1.0" fill="#3a78e8" opacity=".55"/>
<rect x="227.5" y="66.2" width="8.8" height="1.0" fill="#3a78e8" opacity=".55"/><rect x="237.2" y="66.2" width="4.4" height="1.0" fill="#444" opacity=".55"/><rect x="242.4" y="66.2" width="85.8" height="1.0" fill="#3a78e8" opacity=".55"/>
<rect x="227.5" y="69.2" width="30.1" height="1.0" fill="#3a78e8" opacity=".55"/><rect x="258.4" y="69.2" width="50.1" height="1.0" fill="#444" opacity=".55"/><rect x="309.3" y="69.2" width="13.0" height="1.0" fill="#3a78e8" opacity=".55"/>
<rect x="227.5" y="72.2" width="29.1" height="1.0" fill="#3a78e8" opacity=".55"/><rect x="257.6" y="72.2" width="69.2" height="1.0" fill="#444" opacity=".55"/>
<rect x="227.5" y="75.2" width="42.1" height="1.0" fill="#444" opacity=".55"/>
<rect x="227.5" y="81.4" width="5.6" height="1.0" fill="#444" opacity=".55"/><rect x="234.0" y="81.4" width="10.0" height="1.0" fill="#3a78e8" opacity=".55"/><rect x="244.8" y="81.4" width="83.8" height="1.0" fill="#444" opacity=".55"/>
<rect x="227.5" y="84.4" width="69.2" height="1.0" fill="#444" opacity=".55"/><rect x="297.5" y="84.4" width="30.1" height="1.0" fill="#3a78e8" opacity=".55"/>
<rect x="227.5" y="87.4" width="6.0" height="1.0" fill="#3a78e8" opacity=".55"/><rect x="234.4" y="87.4" width="94.2" height="1.0" fill="#444" opacity=".55"/>
<rect x="227.5" y="90.4" width="98.6" height="1.0" fill="#444" opacity="0.55"/><rect x="227.5" y="93.5" width="96.2" height="1.0" fill="#444" opacity="0.55"/><rect x="227.5" y="96.6" width="89.8" height="1.0" fill="#444" opacity="0.55"/>
<rect x="229.1" y="102.2" width="47.5" height="61.5" fill="#ead6e8"/>
<rect x="229.1" y="102.2" width="47.5" height="61.5" filter="url(#hn31)" opacity=".6"/>
<path d="M276.7 102.2v61.5h-30.1c-5.0-8.0-8.0-22.1-1.0-34.1c6.0-10.0 12.0-12.0 14.0-27.5z" fill="#8a4a9a" opacity=".9"/>
<path d="M230.6 104.3c8.0 2.0 18.0 0.0 30.1 6.0c-4.0 8.0-12.0 12.0-14.0 24.1c-6.0 2.0-12.0-2.0-16.0-8.0z" fill="#f0ecf2" opacity=".9"/>
<path d="M258.6 128.3c4.0 4.0 6.0 10.0 12.0 8.0" stroke="#e8d8e8" stroke-width=".6" fill="none"/>
<rect x="278.3" y="102.2" width="48.9" height="61.5" fill="#2a28a0"/>
<path d="M278.3 102.2h24.1c-2.0 16.0-12.0 24.1-16.0 40.1c-2.0 8.0-4.0 14.0-8.0 21.5z" fill="#3a3ab8" opacity=".8"/>
<circle cx="295.1" cy="130.0" r="1.2" fill="#40c8e8" opacity=".9"/>
<circle cx="302.1" cy="142.2" r="1.3" fill="#e83020" opacity=".9"/>
<circle cx="300.1" cy="137.8" r="0.9" fill="#f06020" opacity=".9"/>
<circle cx="295.5" cy="143.2" r="0.7" fill="#f06020" opacity=".9"/>
<circle cx="294.6" cy="143.5" r="1.3" fill="#e83020" opacity=".9"/>
<circle cx="298.6" cy="153.9" r="0.6" fill="#40c8e8" opacity=".9"/>
<circle cx="295.1" cy="142.0" r="1.4" fill="#e83020" opacity=".9"/>
<circle cx="297.0" cy="146.4" r="1.4" fill="#f06020" opacity=".9"/>
<circle cx="289.4" cy="162.7" r="1.0" fill="#f06020" opacity=".9"/>
<circle cx="297.1" cy="161.9" r="0.7" fill="#e83020" opacity=".9"/>
<circle cx="294.4" cy="148.5" r="0.6" fill="#f06020" opacity=".9"/>
<circle cx="295.4" cy="148.4" r="1.2" fill="#40c8e8" opacity=".9"/>
<circle cx="304.3" cy="140.6" r="0.8" fill="#f0a020" opacity=".9"/>
<circle cx="293.9" cy="146.4" r="1.1" fill="#f06020" opacity=".9"/>
<circle cx="290.5" cy="142.0" r="0.6" fill="#e83020" opacity=".9"/>
<circle cx="302.3" cy="137.7" r="0.9" fill="#40c8e8" opacity=".9"/>
<circle cx="300.8" cy="132.0" r="1.0" fill="#e83020" opacity=".9"/>
<circle cx="290.1" cy="144.5" r="1.1" fill="#f06020" opacity=".9"/>
<circle cx="299.0" cy="144.9" r="1.2" fill="#e83020" opacity=".9"/>
<circle cx="293.7" cy="147.3" r="1.0" fill="#e83020" opacity=".9"/>
<circle cx="301.1" cy="149.7" r="1.2" fill="#f0a020" opacity=".9"/>
<circle cx="306.8" cy="145.3" r="0.6" fill="#f0a020" opacity=".9"/>
<circle cx="293.7" cy="139.6" r="0.6" fill="#f0a020" opacity=".9"/>
<circle cx="303.9" cy="135.1" r="0.8" fill="#f0a020" opacity=".9"/>
<circle cx="291.2" cy="155.5" r="1.1" fill="#f0a020" opacity=".9"/>
<circle cx="300.4" cy="140.2" r="0.5" fill="#40c8e8" opacity=".9"/>
<circle cx="293.8" cy="138.4" r="0.7" fill="#40c8e8" opacity=".9"/>
<circle cx="294.4" cy="146.0" r="1.1" fill="#f06020" opacity=".9"/>
<circle cx="305.2" cy="147.2" r="0.5" fill="#e83020" opacity=".9"/>
<circle cx="294.9" cy="145.6" r="1.4" fill="#40c8e8" opacity=".9"/>
<circle cx="304.6" cy="136.4" r="1.2" fill="#e83020" opacity=".9"/>
<circle cx="297.9" cy="147.9" r="0.6" fill="#e83020" opacity=".9"/>
<circle cx="294.0" cy="149.9" r="1.4" fill="#f06020" opacity=".9"/>
<circle cx="302.9" cy="138.8" r="0.9" fill="#f0a020" opacity=".9"/>
<circle cx="293.8" cy="141.3" r="0.9" fill="#f06020" opacity=".9"/>
<circle cx="301.2" cy="151.2" r="1.0" fill="#f06020" opacity=".9"/>
<circle cx="296.0" cy="132.7" r="0.8" fill="#e83020" opacity=".9"/>
<circle cx="292.3" cy="140.9" r="1.0" fill="#40c8e8" opacity=".9"/>
<circle cx="289.7" cy="152.5" r="1.2" fill="#40c8e8" opacity=".9"/>
<circle cx="297.1" cy="127.3" r="0.8" fill="#f0a020" opacity=".9"/>
<circle cx="301.0" cy="134.3" r="1.4" fill="#f0a020" opacity=".9"/>
<circle cx="302.1" cy="138.1" r="0.7" fill="#e83020" opacity=".9"/>
<circle cx="289.6" cy="142.8" r="0.8" fill="#f0a020" opacity=".9"/>
<circle cx="288.9" cy="144.2" r="1.1" fill="#f0a020" opacity=".9"/>
<circle cx="291.4" cy="150.9" r="1.2" fill="#e83020" opacity=".9"/>
<circle cx="289.2" cy="154.4" r="1.3" fill="#e83020" opacity=".9"/>
<circle cx="309.5" cy="137.0" r="1.0" fill="#40c8e8" opacity=".9"/>
<circle cx="300.8" cy="139.6" r="0.8" fill="#e83020" opacity=".9"/>
<circle cx="296.5" cy="143.9" r="1.1" fill="#e83020" opacity=".9"/>
<circle cx="297.9" cy="154.2" r="1.0" fill="#e83020" opacity=".9"/>
<circle cx="293.2" cy="151.2" r="1.3" fill="#f0a020" opacity=".9"/>
<circle cx="298.0" cy="138.2" r="0.6" fill="#e83020" opacity=".9"/>
<circle cx="296.7" cy="136.3" r="1.2" fill="#f06020" opacity=".9"/>
<circle cx="297.3" cy="138.4" r="0.9" fill="#f06020" opacity=".9"/>
<circle cx="298.3" cy="156.8" r="0.6" fill="#f06020" opacity=".9"/>
<circle cx="291.9" cy="141.6" r="0.9" fill="#f0a020" opacity=".9"/>
<circle cx="291.2" cy="148.8" r="1.0" fill="#f06020" opacity=".9"/>
<circle cx="299.0" cy="131.8" r="0.8" fill="#f0a020" opacity=".9"/>
<circle cx="306.7" cy="126.1" r="1.1" fill="#40c8e8" opacity=".9"/>
<circle cx="296.4" cy="142.1" r="1.1" fill="#e83020" opacity=".9"/>
<circle cx="308.1" cy="133.0" r=".5" fill="#40c8e8" opacity=".8"/>
<circle cx="324.6" cy="120.7" r=".5" fill="#40c8e8" opacity=".8"/>
<circle cx="309.5" cy="111.5" r=".5" fill="#40c8e8" opacity=".8"/>
<circle cx="311.0" cy="135.9" r=".5" fill="#40c8e8" opacity=".8"/>
<circle cx="314.2" cy="130.5" r=".5" fill="#40c8e8" opacity=".8"/>
<circle cx="304.7" cy="125.7" r=".5" fill="#40c8e8" opacity=".8"/>
<circle cx="312.7" cy="115.4" r=".5" fill="#40c8e8" opacity=".8"/>
<circle cx="304.1" cy="109.3" r=".5" fill="#40c8e8" opacity=".8"/>
<circle cx="321.3" cy="141.4" r=".5" fill="#40c8e8" opacity=".8"/>
<circle cx="310.3" cy="122.6" r=".5" fill="#40c8e8" opacity=".8"/>
<circle cx="323.7" cy="134.5" r=".5" fill="#40c8e8" opacity=".8"/>
<circle cx="308.9" cy="153.5" r=".5" fill="#40c8e8" opacity=".8"/>
<circle cx="314.9" cy="128.3" r=".5" fill="#40c8e8" opacity=".8"/>
<circle cx="325.2" cy="131.9" r=".5" fill="#40c8e8" opacity=".8"/>
<rect x="229.6" y="168.0" width="97.2" height="0.8" fill="#999" opacity="0.6"/><rect x="230.4" y="170.9" width="95.8" height="0.8" fill="#999" opacity="0.6"/><rect x="246.6" y="173.8" width="63.8" height="0.8" fill="#999" opacity="0.6"/>
<rect x="227.5" y="183.6" width="99.8" height="1.0" fill="#444" opacity="0.55"/><rect x="227.5" y="186.7" width="98.6" height="1.0" fill="#444" opacity="0.55"/><rect x="227.5" y="189.8" width="98.6" height="1.0" fill="#444" opacity="0.55"/><rect x="227.5" y="192.9" width="94.2" height="1.0" fill="#444" opacity="0.55"/><rect x="227.5" y="196.0" width="98.2" height="1.0" fill="#444" opacity="0.55"/><rect x="227.5" y="199.1" width="10.0" height="1.0" fill="#444" opacity="0.55"/>
<rect x="227.5" y="205.3" width="5.6" height="1.0" fill="#444" opacity=".55"/><rect x="234.0" y="205.3" width="14.0" height="1.0" fill="#3a78e8" opacity=".55"/><rect x="248.8" y="205.3" width="78.2" height="1.0" fill="#444" opacity=".55"/>
<rect x="227.5" y="208.3" width="94.2" height="1.0" fill="#444" opacity="0.55"/><rect x="227.5" y="211.4" width="97.8" height="1.0" fill="#444" opacity="0.55"/><rect x="227.5" y="214.5" width="93.2" height="1.0" fill="#444" opacity="0.55"/><rect x="227.5" y="217.6" width="100.2" height="1.0" fill="#444" opacity="0.55"/>
<rect x="224.9" y="218.9" width="33.7" height="1.4" fill="#555" opacity=".7"/>
<rect x="224.9" y="220.9" width="110.9" height="0.5" fill="#666"/>
</svg>
<div class="t" style="left:22.300px;top:27.800px">Tek rakibimiz Google</div><!--/S31--></div><svg class="abs" style="left:-2px;top:-2px" width="409" height="236" viewBox="-2 -2 409 236"><rect x=".4" y="0.5" width="404.100" height="229.800" rx="16.500" fill="none" stroke="#c4c7c5" stroke-width="1.400"/></svg></div>
<div class="num" style="left:972px;top:973px">31</div>
<div class="card" id="c32" style="left:1407px;top:729px"><div class="clip" style="clip-path:inset(0.0px 0 0.0px 0 round 16.5px)"><!--S32--><svg class="abs" style="left:0;top:0" width="405" height="231" viewBox="0 0 405 231">
<defs><linearGradient id="pl" x1="0" x2="1"><stop offset="0" stop-color="#f4eef6"/><stop offset=".55" stop-color="#ecdcee"/><stop offset="1" stop-color="#e2c8e6"/></linearGradient></defs>
<rect x="31.7" y="54.1" width="156.4" height="164.8" fill="#1d2226"/>
<rect x="31.7" y="54.1" width="53.5" height="164.8" fill="#26231d"/>
<rect x="31.7" y="54.1" width="156.4" height="4.8" fill="#0c0c0e"/>
<rect x="32.1" y="55.7" width="12.0" height="1.4" fill="#ddd"/>
<rect x="44.5" y="55.9" width="64.2" height="1.2" fill="#888"/>
<rect x="31.7" y="58.9" width="156.4" height="12.4" fill="#1d2226"/>
<rect x="38.5" y="61.9" width="6.8" height="6.8" rx=".8" fill="#2a8ad8"/>
<rect x="39.9" y="64.6" width="1.0" height="3.0" fill="#10202c"/>
<rect x="39.9" y="63.0" width="1.0" height="1.0" fill="#10202c"/>
<rect x="41.7" y="64.6" width="2.4" height="3.0" fill="#10202c"/>
<rect x="47.7" y="62.6" width="51.1" height="6.0" rx=".6" fill="#2c3338"/>
<rect x="49.7" y="64.4" width="2.0" height="2.0" fill="#aaa"/>
<rect x="53.7" y="64.8" width="9.0" height="1.2" fill="#777"/>
<rect x="131.7" y="61.9" width="4.0" height="3.6" fill="#d8d8d8"/>
<rect x="129.3" y="67.2" width="8.8" height="1.0" fill="#999"/>
<rect x="146.8" y="61.9" width="4.0" height="3.6" fill="#d8d8d8"/>
<rect x="144.3" y="67.2" width="8.8" height="1.0" fill="#999"/>
<rect x="161.8" y="61.9" width="4.0" height="3.6" fill="#d8d8d8"/>
<rect x="159.4" y="67.2" width="8.8" height="1.0" fill="#999"/>
<rect x="176.4" y="61.9" width="4.0" height="3.6" fill="#d8d8d8"/>
<rect x="174.0" y="67.2" width="8.8" height="1.0" fill="#999"/>
<rect x="126.3" y="70.2" width="15.0" height="0.6" fill="#e8e8e8"/>
<rect x="38.7" y="74.6" width="42.5" height="46.5" rx="1.200" fill="#1d2226"/>
<rect x="38.7" y="74.6" width="42.5" height="10.4" fill="#e8b890"/>
<circle cx="71.8" cy="82.6" r="1.0" fill="#f0d8a0" opacity=".85"/>
<circle cx="41.2" cy="76.7" r="1.1" fill="#f0d8a0" opacity=".85"/>
<circle cx="52.6" cy="75.6" r="1.0" fill="#d87090" opacity=".85"/>
<circle cx="69.3" cy="79.0" r="1.1" fill="#c85080" opacity=".85"/>
<circle cx="47.5" cy="80.3" r="1.3" fill="#f0d8a0" opacity=".85"/>
<circle cx="66.5" cy="80.8" r="0.7" fill="#b84070" opacity=".85"/>
<circle cx="53.3" cy="76.2" r="1.3" fill="#f0d8a0" opacity=".85"/>
<circle cx="57.7" cy="76.2" r="0.8" fill="#f0d8a0" opacity=".85"/>
<circle cx="43.6" cy="75.8" r="1.4" fill="#f0d8a0" opacity=".85"/>
<circle cx="59.4" cy="82.7" r="0.8" fill="#c85080" opacity=".85"/>
<circle cx="65.3" cy="77.5" r="1.0" fill="#f0d8a0" opacity=".85"/>
<circle cx="63.6" cy="76.2" r="1.4" fill="#d87090" opacity=".85"/>
<circle cx="44.4" cy="81.2" r="0.9" fill="#d87090" opacity=".85"/>
<circle cx="55.1" cy="77.3" r="1.1" fill="#c85080" opacity=".85"/>
<circle cx="47.3" cy="76.9" r="1.2" fill="#f0d8a0" opacity=".85"/>
<circle cx="54.9" cy="80.0" r="0.9" fill="#b84070" opacity=".85"/>
<rect x="77.2" y="75.2" width="3.6" height="9.0" fill="#98c868" opacity=".8"/>
<circle cx="59.7" cy="84.2" r="6.6" fill="#d8d8d4" stroke="#1d2226" stroke-width=".5"/><circle cx="59.7" cy="83.2" r="3.0" fill="#d8b098"/><path d="M55.1 89.4a4.6 3.6 0 0 1 9.2 0z" fill="#889"/>
<text x="59.7" y="98.2" font-family="Liberation Sans" font-size="3" font-weight="700" fill="#f0f0f0" text-anchor="middle" textLength="30.07" lengthAdjust="spacingAndGlyphs">Jeroen van der Laak</text>
<rect x="46.5" y="101.2" width="26.1" height="1.0" fill="#aaa" opacity="0.55"/><rect x="44.9" y="104.3" width="29.3" height="1.0" fill="#aaa" opacity="0.55"/><rect x="44.5" y="107.3" width="30.1" height="1.0" fill="#aaa" opacity="0.55"/><rect x="54.5" y="110.3" width="10.0" height="1.0" fill="#aaa" opacity="0.55"/>
<text x="59.7" y="116.9" font-family="Liberation Sans" font-size="2.9" font-weight="700" fill="#f0f0f0" text-anchor="middle" textLength="23.06" lengthAdjust="spacingAndGlyphs">View full profile</text>
<circle cx="92.8" cy="76.8" r="4.4" fill="#d8d8d4"/><circle cx="92.8" cy="76.0" r="2.0" fill="#d8b098"/>
<rect x="99.0" y="73.8" width="26.1" height="1.4" fill="#f0f0f0"/>
<rect x="126.7" y="74.0" width="4.4" height="1.0" fill="#999"/>
<rect x="99.0" y="77.0" width="77.2" height="1.0" fill="#aaa" opacity=".8"/>
<rect x="99.0" y="80.2" width="4.0" height="1.0" fill="#999"/>
<rect x="105.1" y="79.8" width="1.8" height="1.8" fill="#bbb"/>
<rect x="179.4" y="73.8" width="4.0" height="0.6" fill="#999"/>
<rect x="88.2" y="85.2" width="89.8" height="1.2" fill="#e8e8e8" opacity="0.55"/><rect x="88.2" y="88.9" width="78.2" height="1.2" fill="#e8e8e8" opacity="0.55"/><rect x="167.2" y="88.9" width="11.0" height="1.2" fill="#70b5f9" opacity="0.55"/>
<rect x="88.2" y="96.4" width="91.2" height="1.2" fill="#e8e8e8" opacity="0.55"/><rect x="88.2" y="100.1" width="74.6" height="1.2" fill="#e8e8e8" opacity="0.55"/><rect x="163.6" y="100.1" width="13.2" height="1.2" fill="#70b5f9" opacity="0.55"/><rect x="88.2" y="103.8" width="6.0" height="1.2" fill="#70b5f9" opacity="0.55"/><rect x="95.4" y="103.8" width="16.0" height="1.2" fill="#70b5f9" opacity="0.55"/><rect x="112.7" y="103.8" width="18.0" height="1.2" fill="#70b5f9" opacity="0.55"/><rect x="131.9" y="103.8" width="25.1" height="1.2" fill="#70b5f9" opacity="0.55"/><rect x="158.2" y="103.8" width="16.0" height="1.2" fill="#70b5f9" opacity="0.55"/><rect x="88.2" y="107.6" width="22.1" height="1.2" fill="#70b5f9" opacity="0.55"/><rect x="111.5" y="107.6" width="18.4" height="1.2" fill="#70b5f9" opacity="0.55"/>
<rect x="88.2" y="115.1" width="28.5" height="1.2" fill="#e8e8e8" opacity="0.55"/><rect x="117.9" y="115.1" width="31.7" height="1.2" fill="#70b5f9" opacity="0.55"/>
<rect x="88.2" y="122.5" width="4.4" height="1.2" fill="#70b5f9" opacity="0.55"/><rect x="93.4" y="122.5" width="11.6" height="1.2" fill="#70b5f9" opacity="0.55"/><rect x="106.3" y="122.5" width="33.7" height="1.2" fill="#70b5f9" opacity="0.55"/>
<rect x="85.6" y="126.7" width="101.2" height="52.3" fill="url(#pl)"/>
<path d="M85.6 179.0c12.0-12.0 24.1-14.0 30.1-28.1s8.0-20.0 24.1-24.3h47.1v52.3z" fill="#e4cce8" opacity=".55"/>
<path d="M144.3 179.0c6.0-14.0 16.0-16.0 18.0-30.1s8.0-18.0 24.5-22.3v52.3z" fill="#dcbce2" opacity=".6"/>
<path d="M112.75 153.37L105.45 157.58L98.16 153.37L98.16 144.95L105.45 140.74L112.75 144.95z" fill="none" stroke="#6a3a9a" stroke-width="1.18" stroke-linejoin="round"/><path d="M110.41 152.02L105.45 154.88L100.49 152.02L100.49 146.30L105.45 143.43L110.41 146.30z" fill="none" stroke="#6a3a9a" stroke-width="1.18" stroke-linejoin="round"/><circle cx="105.45" cy="149.16" r="2.86" fill="none" stroke="#6a3a9a" stroke-width="1.09"/><circle cx="105.45" cy="149.16" r="1.26" fill="#7ad8e8"/>
<text x="119.5" y="154.0" font-family="Liberation Sans" font-size="12.5" font-weight="400" fill="#6a3a9a" text-anchor="start" textLength="54.93" lengthAdjust="spacingAndGlyphs">Patholyt</text>
<text x="119.9" y="161.0" font-family="Liberation Sans" font-size="4.4" font-weight="400" fill="#a888c8" text-anchor="start" textLength="54.13" lengthAdjust="spacingAndGlyphs">Achieve more perspective</text>
<rect x="87.8" y="182.0" width="91.2" height="1.4" fill="#f0f0f0" opacity=".85"/>
<rect x="87.8" y="187.0" width="27.3" height="1.0" fill="#999"/>
<rect x="85.6" y="190.9" width="101.2" height="0.2" fill="#3a4046"/>
<circle cx="89.6" cy="193.9" r="1.300" fill="#3a8ee8"/>
<circle cx="93.4" cy="193.9" r="1.300" fill="#58b858"/>
<circle cx="97.2" cy="193.9" r="1.300" fill="#e87838"/>
<rect x="100.2" y="193.3" width="2.8" height="1.2" fill="#999"/>
<rect x="105.1" y="193.3" width="13.6" height="1.2" fill="#999"/>
<rect x="88.2" y="202.1" width="13.6" height="1.2" fill="#ddd"/>
<circle cx="92.8" cy="210.9" r="4.4" fill="#c8b8a0"/><circle cx="92.8" cy="209.9" r="1.8" fill="#c89878"/><path d="M89.8 214.5a3.0 2.4 0 0 1 6.0 0z" fill="#f0f0f0"/>
<circle cx="95.8" cy="214.1" r="1.300" fill="#3a8ee8"/>
<circle cx="103.2" cy="210.9" r="4.4" fill="#e8d8c8"/><circle cx="103.2" cy="209.9" r="1.8" fill="#c89878"/><path d="M100.2 214.5a3.0 2.4 0 0 1 6.0 0z" fill="#f0f0f0"/>
<circle cx="106.3" cy="214.1" r="1.300" fill="#3a8ee8"/>
<circle cx="114.3" cy="210.9" r="4.4" fill="#8a7868"/><circle cx="114.3" cy="209.9" r="1.8" fill="#c89878"/><path d="M111.3 214.5a3.0 2.4 0 0 1 6.0 0z" fill="#f0f0f0"/>
<circle cx="117.3" cy="214.1" r="1.300" fill="#3a8ee8"/>
<circle cx="124.3" cy="210.9" r="4.4" fill="#e8e0d8"/><circle cx="124.3" cy="209.9" r="1.8" fill="#c89878"/><path d="M121.3 214.5a3.0 2.4 0 0 1 6.0 0z" fill="#f0f0f0"/>
<circle cx="127.3" cy="214.1" r="1.300" fill="#3a8ee8"/>
<circle cx="135.5" cy="210.9" r="4.4" fill="#2a1a1a"/><circle cx="135.5" cy="209.9" r="1.8" fill="#c89878"/><path d="M132.5 214.5a3.0 2.4 0 0 1 6.0 0z" fill="#f0f0f0"/>
<circle cx="138.5" cy="214.1" r="1.300" fill="#3a8ee8"/>
<circle cx="145.5" cy="210.9" r="4.4" fill="#c89868"/><circle cx="145.5" cy="209.9" r="1.8" fill="#c89878"/><path d="M142.5 214.5a3.0 2.4 0 0 1 6.0 0z" fill="#f0f0f0"/>
<circle cx="148.6" cy="214.1" r="1.300" fill="#3a8ee8"/>
<circle cx="156.0" cy="210.9" r="4.4" fill="#e8d0c0"/><circle cx="156.0" cy="209.9" r="1.8" fill="#c89878"/><path d="M153.0 214.5a3.0 2.4 0 0 1 6.0 0z" fill="#f0f0f0"/>
<circle cx="159.0" cy="214.1" r="1.300" fill="#3a8ee8"/>
<circle cx="166.4" cy="210.9" r="4.4" fill="#d8c8b8"/><circle cx="166.4" cy="209.9" r="1.8" fill="#c89878"/><path d="M163.4 214.5a3.0 2.4 0 0 1 6.0 0z" fill="#f0f0f0"/>
<circle cx="169.4" cy="214.1" r="1.300" fill="#3a8ee8"/>
<circle cx="177.2" cy="210.9" r="4.0" fill="none" stroke="#3a4046" stroke-width=".4"/>
<rect x="208.9" y="54.1" width="159.0" height="164.8" fill="#1a1b1f"/>
<rect x="220.5" y="56.7" width="24.5" height="6.0" fill="#f4eef6"/>
<path d="M224.90 60.65L223.34 61.55L221.77 60.65L221.77 58.84L223.34 57.94L224.90 58.84z" fill="none" stroke="#6a3a9a" stroke-width="0.25" stroke-linejoin="round"/><path d="M224.40 60.36L223.34 60.97L222.27 60.36L222.27 59.13L223.34 58.52L224.40 59.13z" fill="none" stroke="#6a3a9a" stroke-width="0.25" stroke-linejoin="round"/><circle cx="223.34" cy="59.74" r="0.61" fill="none" stroke="#6a3a9a" stroke-width="0.23"/><circle cx="223.34" cy="59.74" r="0.27" fill="#7ad8e8"/>
<text x="226.5" y="61.1" font-family="Liberation Sans" font-size="3.6" font-weight="700" fill="#6a3a9a" text-anchor="start" textLength="17.64" lengthAdjust="spacingAndGlyphs">Patholyt</text>
<rect x="306.3" y="58.9" width="12.0" height="1.2" fill="#aaa" opacity=".7"/>
<rect x="322.4" y="58.9" width="12.4" height="1.2" fill="#aaa" opacity=".7"/>
<rect x="339.2" y="58.9" width="10.4" height="1.2" fill="#aaa" opacity=".7"/>
<rect x="354.0" y="58.9" width="6.8" height="1.2" fill="#aaa" opacity=".7"/>
<rect x="366.5" y="56.7" width="1.4" height="6.4" fill="#6a3a9a"/>
<rect x="218.5" y="79.6" width="32.5" height="1.2" fill="#a868d8" opacity=".85"/>
<rect x="218.5" y="95.6" width="38.1" height="1.4" fill="#bbb" opacity=".75"/>
<text x="218.5" y="109.9" font-family="Liberation Sans" font-size="9.6" font-weight="700" fill="#a8d4f4" text-anchor="start" textLength="125.50" lengthAdjust="spacingAndGlyphs">New start-up Patholyt will</text>
<text x="218.5" y="121.3" font-family="Liberation Sans" font-size="9.6" font-weight="700" fill="#a8d4f4" text-anchor="start" textLength="103.45" lengthAdjust="spacingAndGlyphs">bring AI research into</text>
<text x="218.5" y="132.7" font-family="Liberation Sans" font-size="9.6" font-weight="700" fill="#a8d4f4" text-anchor="start" textLength="105.25" lengthAdjust="spacingAndGlyphs">pathology diagnostics</text>
<rect x="218.5" y="138.3" width="141.3" height="1.4" fill="#bbb" opacity="0.5"/><rect x="218.5" y="143.3" width="140.3" height="1.4" fill="#bbb" opacity="0.5"/><rect x="218.5" y="148.4" width="121.5" height="1.4" fill="#bbb" opacity="0.5"/>
<rect x="218.5" y="155.4" width="36.5" height="1.2" fill="#a868d8" opacity=".8"/>
<rect x="218.1" y="165.8" width="143.9" height="23.1" fill="url(#pl)"/>
<path d="M300.7 188.9c4.0-8.0 12.0-10.0 14.0-23.1h47.3v23.1z" fill="#dcbce2" opacity=".6"/>
<path d="M271.22 180.33L265.84 183.44L260.46 180.33L260.46 174.12L265.84 171.01L271.22 174.12z" fill="none" stroke="#6a3a9a" stroke-width="0.87" stroke-linejoin="round"/><path d="M269.50 179.34L265.84 181.45L262.18 179.34L262.18 175.11L265.84 173.00L269.50 175.11z" fill="none" stroke="#6a3a9a" stroke-width="0.87" stroke-linejoin="round"/><circle cx="265.84" cy="177.23" r="2.11" fill="none" stroke="#6a3a9a" stroke-width="0.81"/><circle cx="265.84" cy="177.23" r="0.93" fill="#7ad8e8"/>
<text x="276.7" y="181.0" font-family="Liberation Sans" font-size="9.2" font-weight="400" fill="#6a3a9a" text-anchor="start" textLength="43.30" lengthAdjust="spacingAndGlyphs">Patholyt</text>
<text x="277.1" y="186.4" font-family="Liberation Sans" font-size="3.3" font-weight="400" fill="#a888c8" text-anchor="start" textLength="42.50" lengthAdjust="spacingAndGlyphs">Achieve more perspective</text>
<rect x="218.5" y="202.9" width="137.3" height="1.2" fill="#999" opacity="0.55"/><rect x="218.5" y="206.9" width="138.3" height="1.2" fill="#999" opacity="0.55"/><rect x="218.5" y="210.9" width="131.3" height="1.2" fill="#999" opacity="0.55"/><rect x="218.5" y="214.9" width="22.5" height="1.2" fill="#999" opacity="0.55"/>
</svg>
<div class="t" style="left:23.300px;top:23.800px">Tek rakibimiz Google, değil :)</div><!--/S32--></div><svg class="abs" style="left:-2px;top:-2px" width="409" height="236" viewBox="-2 -2 409 236"><rect x=".4" y="0.5" width="404.100" height="229.800" rx="16.500" fill="none" stroke="#c4c7c5" stroke-width="1.400"/></svg></div>
<div class="num" style="left:1409px;top:973px">32</div>
<div class="card" id="c33" style="left:96px;top:1019px"><div class="clip" style="clip-path:inset(0.0px 0 0.5px 0 round 16.5px)"><!--S33--><div class="tc" style="top:103.500px;left:-1px;font-size:19.750px;line-height:24px">Firmalar</div>
<!--/S33--></div><svg class="abs" style="left:-2px;top:-2px" width="409" height="236" viewBox="-2 -2 409 236"><rect x=".4" y="0" width="404.100" height="229.800" rx="16.500" fill="none" stroke="#c4c7c5" stroke-width="1.400"/></svg></div>
<div class="card" id="c34" style="left:533px;top:1019px"><div class="clip" style="clip-path:inset(0.0px 0 0.5px 0 round 16.5px)"><!--S34--><svg class="abs" style="left:0;top:0" width="405" height="231" viewBox="0 0 405 231"><g stroke="#cfcfcf" stroke-width=".55" fill="none">
<path d="M15 13V217.5"/>
<path d="M78.6 13V217.5"/>
<path d="M141.5 13V217.5"/>
<path d="M205.3 13V217.5"/>
<path d="M268.6 13V217.5"/>
<path d="M332.4 13V217.5"/>
<path d="M396 13V217.5"/>
<path d="M15 13H396"/>
<path d="M15 54.4H396"/>
<path d="M15 81.4H396"/>
<path d="M15 108.3H396"/>
<path d="M15 149.4H396"/>
<path d="M15 176.4H396"/>
<path d="M15 217.5H396"/>
</g></svg>
<div class="t th" style="left:15px;width:63.6px;top:29.7px">Firma</div>
<div class="t th" style="left:78.6px;width:62.9px;top:29.7px">Odak Noktası</div>
<div class="t th" style="left:141.5px;width:63.8px;top:29.7px">Validasyon</div>
<div class="t th" style="left:205.3px;width:63.3px;top:24.7px">Verinin<br>tutulduğu yer</div>
<div class="t th" style="left:268.6px;width:63.8px;top:24.7px">Verinin<br>işlendiği yer</div>
<div class="t th" style="left:332.4px;width:63.6px;top:24.7px">Ortak projelere<br>açık mı</div>
<div class="t th" style="left:15px;width:63.6px;top:58.1px">Sectra</div>
<div class="t td" style="left:82.5px;top:58.1px">PACS</div>
<div class="t td" style="left:209.2px;top:58.1px">Lokal</div>
<div class="t td" style="left:272.5px;top:58.1px">Lokal</div>
<div class="t td" style="left:336.3px;top:58.1px">?</div>
<div class="t th" style="left:15px;width:63.6px;top:85.10000000000001px">Visiopharm</div>
<div class="t td" style="left:82.5px;top:85.10000000000001px">AI</div>
<div class="t td" style="left:209.2px;top:85.10000000000001px">Lokal</div>
<div class="t td" style="left:272.5px;top:85.10000000000001px">Cloud</div>
<div class="t td" style="left:336.3px;top:85.10000000000001px">Evet</div>
<div class="t th" style="left:15px;width:63.6px;top:112.0px">Paige</div>
<div class="t td" style="left:82.5px;top:112.0px">PACS, AI,<br>prostat, meme</div>
<div class="t td" style="left:145.4px;top:112.0px">FDA</div>
<div class="t td" style="left:209.2px;top:112.0px">AWS, Cloud</div>
<div class="t td" style="left:272.5px;top:112.0px">Cloud</div>
<div class="t td" style="left:336.3px;top:112.0px">?</div>
<div class="t th" style="left:15px;width:63.6px;top:153.1px">Aiforal</div>
<div class="t td" style="left:82.5px;top:153.1px">AI</div>
<div class="t th" style="left:15px;width:63.6px;top:180.1px">MindPeak</div>
<div class="t td" style="left:82.5px;top:180.1px">AI, meme</div>
<div class="t td" style="left:209.2px;top:180.1px">Lokal Sectra<br>üzerinden</div>
<div class="t td" style="left:272.5px;top:180.1px">Cloud</div><!--/S34--></div><svg class="abs" style="left:-2px;top:-2px" width="409" height="236" viewBox="-2 -2 409 236"><rect x=".4" y="0" width="404.100" height="229.800" rx="16.500" fill="none" stroke="#c4c7c5" stroke-width="1.400"/></svg></div>
<div class="card" id="c35" style="left:970px;top:1019px"><div class="clip" style="clip-path:inset(0.0px 0 0.5px 0 round 16.5px)"><!--S35--><div class="t" style="left:22.100px;top:11.700px">Firmalardan gelen ücretlendirme teklifleri</div>
<!--/S35--></div><svg class="abs" style="left:-2px;top:-2px" width="409" height="236" viewBox="-2 -2 409 236"><rect x=".4" y="0" width="404.100" height="229.800" rx="16.500" fill="none" stroke="#c4c7c5" stroke-width="1.400"/></svg></div>
<div class="card" id="c36" style="left:1407px;top:1019px"><div class="clip" style="clip-path:inset(0.0px 0 0.5px 0 round 16.5px)"><!--S36--><svg class="abs" style="left:0;top:0" width="405" height="231" viewBox="0 0 405 231"><g stroke="#cfcfcf" stroke-width=".55" fill="none">
<path d="M47.3 14.5V214.5"/>
<path d="M203.5 14.5V214.5"/>
<path d="M360.5 14.5V214.5"/>
<path d="M47.3 14.5H360.5"/>
<path d="M47.3 31.5H360.5"/>
<path d="M47.3 48.5H360.5"/>
<path d="M47.3 65.6H360.5"/>
<path d="M47.3 92.6H360.5"/>
<path d="M47.3 109.7H360.5"/>
<path d="M47.3 145H360.5"/>
<path d="M47.3 162.4H360.5"/>
<path d="M47.3 188.5H360.5"/>
<path d="M47.3 214.5H360.5"/>
</g></svg>
<div class="t th" style="left:47.3px;width:156.2px;top:18.6px">Alalım</div>
<div class="t th" style="left:203.5px;width:157.0px;top:18.6px">Yapalım</div>
<div class="t td" style="left:51.3px;top:35.6px">Hazır yapılmış</div>
<div class="t td" style="left:207.5px;top:35.6px">Emek, ekip istiyor</div>
<div class="t td" style="left:51.3px;top:52.6px">Validasyonu var (FDA onayı olan 1 tane)</div>
<div class="t td" style="left:207.5px;top:52.6px">Validasyonu yapmak lazım</div>
<div class="t td" style="left:51.3px;top:69.69999999999999px">Hastaya ücret yansıtılabilir</div>
<div class="t td" style="left:207.5px;top:69.69999999999999px">Faturaya direk yansımayan işleyiş<br>kalitesine dolaylı katkı</div>
<div class="t td" style="left:51.3px;top:96.69999999999999px">Bakım, güncelleme işleri firmada</div>
<div class="t td" style="left:207.5px;top:96.69999999999999px">Güncelleme bizde</div>
<div class="t td" style="left:51.3px;top:113.8px">Firmalar Memorial üzerinden TR pazarına<br>girmek istiyor</div>
<div class="t td" style="left:207.5px;top:113.8px">Memorial kendi marka değerini arttırmak ve<br>ArGe potansiyelini işler hale getirmek<br>istiyor</div>
<div class="t td" style="left:51.3px;top:149.1px">Kullanım ve ihtiyaçlar için kısıtlı</div>
<div class="t td" style="left:207.5px;top:149.1px">Bizim ihtiyaçlarımıza cevap verecek</div>
<div class="t td" style="left:51.3px;top:166.5px">Alan yeni, firmaların ne kadar devam<br>edeceği belli değil</div>
<div class="t td" style="left:207.5px;top:166.5px">Alan yeni, kendi ürününüle ortaya çıkmak<br>için fırsat</div>
<div class="t td" style="left:51.3px;top:192.6px">Yıllık ek maliyet</div>
<div class="t td" style="left:207.5px;top:192.6px">Altyapı hazır, organizasyon, emek ve insan<br>gücü</div><!--/S36--></div><svg class="abs" style="left:-2px;top:-2px" width="409" height="236" viewBox="-2 -2 409 236"><rect x=".4" y="0" width="404.100" height="229.800" rx="16.500" fill="none" stroke="#c4c7c5" stroke-width="1.400"/></svg></div>

<div class="abs" style="left:977px;top:1045px;width:392px;height:9px;background:linear-gradient(to bottom,rgba(120,120,120,0),rgba(120,120,120,.55));border-radius:5px 5px 0 0;filter:blur(1.200px)"></div>
<div id="redbox" class="abs" style="left:971px;top:1052.600px;width:410px;height:206.200px;background:#fff;border:1.300px solid #ee5a5e"></div>
<svg class="ico" id="anim29" style="left:138px;top:971px" width="26" height="26" viewBox="138 971 26 26"><g fill="none" stroke="#444746" stroke-width="1.700"><circle cx="154.200" cy="979.700" r="5.200"/><path d="M150.300 978.600a5.200 5.200 0 1 0 5.200 5.200" transform="translate(0 0)"/><path d="M146.100 982.700a5.200 5.200 0 1 0 5.200 5.200"/><path d="M142.400 984.200l8.100-8.100M149.800 991.600l8.100-8.100"/></g></svg>
<div class="side" style="top:689.500px;height:64.500px"></div>
<div class="side" style="top:758.800px;height:256px"></div>
<div class="abs" style="left:1923px;top:842px;width:1.700px;height:420px;background:#6f6f6f"></div>
<svg class="ico" style="left:1960px;top:700px" width="44" height="300" viewBox="1960 700 44 300">
<g fill="none" stroke="#b5b8b7" stroke-width="1.700" stroke-linejoin="round">
<path d="M1980.500 713.500h-7.200a1.200 1.200 0 0 0-1.200 1.200v14.600a1.200 1.200 0 0 0 1.200 1.200h14.600a1.200 1.200 0 0 0 1.200-1.200v-7.200"/>
<path d="M1974.800 727.300l3.800-4.800 2.700 3.300 2-2.400 3.200 3.900z" fill="#b5b8b7" stroke="none"/>
<path d="M1975.200 850.500l-2.300.4 1.900 13.600 13.800-1.900"/><rect x="1975.800" y="848.200" width="14.600" height="14.600" rx="1.400"/><path d="M1983.100 851.600l3.400 2v3.900l-3.400 2-3.400-2v-3.900z" stroke-width="1.400"/>
<path d="M1979.800 908.600h-6.200a1.200 1.200 0 0 0-1.200 1.200v14.500a1.200 1.200 0 0 0 1.200 1.200h14.500a1.200 1.200 0 0 0 1.200-1.200v-4.800"/>
<path d="M1974.800 922.400l3.800-4.800 2.700 3.300 2-2.400 3.200 3.900z" fill="#b5b8b7" stroke="none"/>
<circle cx="1986" cy="911.500" r="3.600"/><path d="M1988.700 914.200l3.700 3.700"/>
<path d="M1972.200 968.200a1.300 1.300 0 0 1 1.300-1.300h5.300l2.100 2.300h8.400a1.300 1.300 0 0 1 1.300 1.300v11.500a1.300 1.300 0 0 1-1.300 1.300h-15.800a1.300 1.300 0 0 1-1.300-1.300z"/>
</g>
<path d="M1987.600 709.200l1.100 2.900 2.900 1.100-2.900 1.100-1.100 2.900-1.100-2.900-2.900-1.100 2.900-1.100z" fill="#b5b8b7"/>
<g fill="none" stroke="#1f1f1f" stroke-width="2"><rect x="1971.200" y="793" width="19.600" height="13.800" rx="1.600"/><path d="M1974.600 797.300h7.600M1974.600 802.300h7.600" stroke-width="2.400"/><path d="M1986.200 796v7.800" stroke-width="2.600"/></g>
</svg>

</body>
</html>
